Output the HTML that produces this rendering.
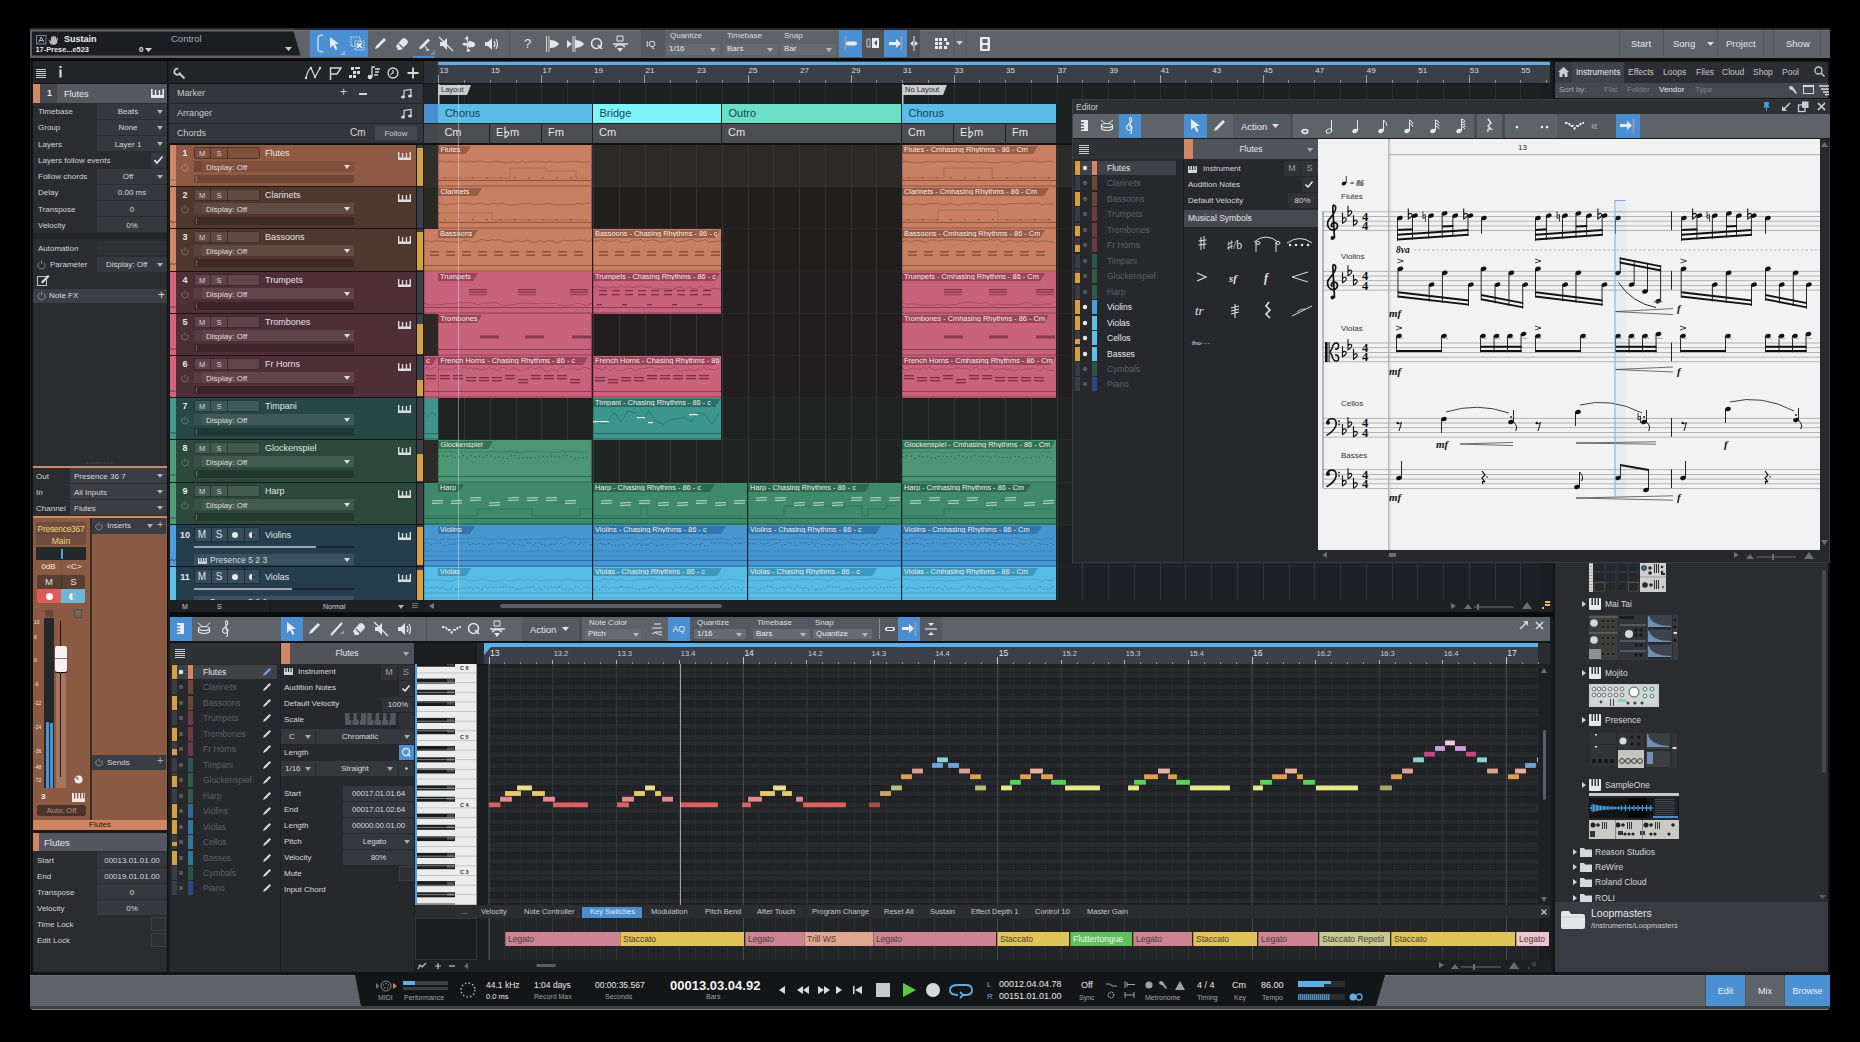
<!DOCTYPE html><html><head><meta charset="utf-8"><style>
*{margin:0;padding:0;box-sizing:border-box}
html,body{width:1860px;height:1042px;background:#000;overflow:hidden;font-family:"Liberation Sans",sans-serif}
.a{position:absolute}
.t{position:absolute;white-space:nowrap;line-height:1}
svg{position:absolute;overflow:visible}
</style></head><body><div class="a" style="left:30px;top:28px;width:1800px;height:982px;background:#1b1c1f;"></div>
<div class="a" style="left:30px;top:28px;width:1800px;height:1.5px;background:#26282b;"></div>
<div class="a" style="left:30px;top:29.5px;width:1800px;height:29px;background:#5e6269;"></div>
<div class="a" style="left:30px;top:29.5px;width:1800px;height:1px;background:#6c7077;"></div>
<svg style="left:0;top:0" width="1860" height="80"><polygon points="31,29.5 294,29.5 302,57.5 31,57.5" fill="#5e6269"/><polygon points="32,31.5 293.5,31.5 300.5,55.5 32,55.5" fill="#1c1d20"/></svg>
<svg style="left:36px;top:35px" width="11" height="10"><rect x="0.5" y="0.5" width="9.5" height="8.5" fill="none" stroke="#7d8086" stroke-width="1"/><path d="M2.5 7.5 L5.25 2 L8 7.5 M3.6 5.5 L6.9 5.5" stroke="#b5b8bd" stroke-width="1" fill="none"/></svg>
<svg style="left:48px;top:35px" width="11" height="10"><path d="M3 9.5 Q1 7 0.8 5.5 Q1.5 4.8 3 6.5 L3 2 Q3.8 1.2 4.5 2 L4.6 5 L4.8 1 Q5.6 0.3 6.3 1 L6.3 5 L6.8 1.5 Q7.6 0.8 8.2 1.6 L8 5.5 L8.8 3 Q9.6 2.6 10 3.3 L9.2 7.5 Q8.5 9.5 7 9.8 Z" fill="#b8bbc0"/></svg>
<div class="t" style="left:64px;top:34.5px;font-size:9px;color:#eceef0;font-weight:bold">Sustain</div>
<div class="t" style="left:35.5px;top:45.5px;font-size:7.4px;color:#e6e7ea;font-weight:bold">17-Prese...e523</div>
<div class="t" style="left:139px;top:46px;font-size:8px;color:#e6e7ea;font-weight:bold">0</div>
<svg style="left:145px;top:48px" width="8" height="5"><polygon points="0,0 7,0 3.5,4" fill="#d0d2d6"/></svg>
<div class="t" style="left:171px;top:34px;font-size:9.5px;color:#a9acb2;">Control</div>
<svg style="left:285px;top:47px" width="8" height="5"><polygon points="0,0 7,0 3.5,4" fill="#c8cace"/></svg>
<div class="a" style="left:310px;top:30px;width:58px;height:27px;background:#4a8fd1;"></div>
<svg style="left:314px;top:34px" width="12" height="20"><path d="M9 1 Q4 1 4 4 L4 15 Q4 18 9 18" stroke="#c8d4e4" stroke-width="1.5" fill="none"/></svg>
<svg style="left:329px;top:36px" width="18" height="20"><path d="M1 1 L1 12 L4 9 L6.5 14 L8.5 13 L6 8 L10 8 Z" fill="#e9ebee"/><polygon points="16,14 16,19 11,19" fill="#8fb0d8"/></svg>
<svg style="left:350px;top:36px" width="16" height="16"><rect x="1" y="1" width="9" height="9" fill="none" stroke="#dfe3e8" stroke-dasharray="1.5 1"/><rect x="5" y="5" width="9" height="9" fill="none" stroke="#dfe3e8" stroke-dasharray="1.5 1"/><path d="M7 7 L12 12 M12 7 L7 12" stroke="#fff" stroke-width="1.3"/></svg>
<svg style="left:373px;top:37px" width="14" height="14"><path d="M2 12 L3 9 L11 1 L13 3 L5 11 Z" fill="#e2e4e7"/></svg>
<svg style="left:395px;top:37px" width="14" height="14"><path d="M1 9 L7 2 Q9 0 11 2 L12 3 Q14 5 12 7 L6 13 L3 13 Z" fill="#e2e4e7"/><path d="M4 7 L8 11" stroke="#5e6269" stroke-width="1.2"/></svg>
<svg style="left:418px;top:37px" width="18" height="18"><path d="M1 12 L2 9.5 L10 1.5 L12 3.5 L4 11.5 Z" fill="#e2e4e7"/><path d="M7 9 L10 13.5 M8.5 13.8 L11.5 12.5" stroke="#e2e4e7" stroke-width="1.2"/><polygon points="17,13 17,18 12,18" fill="#8a8d92"/></svg>
<div class="a" style="left:413px;top:56px;width:22px;height:2px;background:#4a8fd1;"></div>
<svg style="left:438px;top:36px" width="16" height="16"><path d="M2 6 L5 6 L9 2 L9 14 L5 10 L2 10 Z" fill="#e2e4e7"/><path d="M1 1 L15 15" stroke="#e2e4e7" stroke-width="1.3"/></svg>
<svg style="left:461px;top:35px" width="18" height="18"><path d="M6.5 1 L6.5 17" stroke="#d0d3d7" stroke-width="1.3"/><polygon points="6,1.5 6,5 3.5,3.2" fill="#e2e4e7"/><path d="M1 9 Q3 7 6 8.5 L7 8 Q9 4 11 7 Q13 6 14 9 Q15 10 13.5 11 Q12 13 10 12 Q8 14 7 11 L6 10.5 Q3 11.5 1 9 Z" fill="#e2e4e7"/><polygon points="7,14 7,17 10,15.5" fill="#e2e4e7"/></svg>
<svg style="left:484px;top:37px" width="16" height="14"><path d="M1 5 L4 5 L8 1 L8 13 L4 9 L1 9 Z" fill="#e2e4e7"/><path d="M10 4 Q12 7 10 10 M12 2 Q15 7 12 12" stroke="#e2e4e7" stroke-width="1.2" fill="none"/></svg>
<div class="a" style="left:509px;top:30px;width:1px;height:27px;background:#505359;"></div>
<div class="t" style="left:524px;top:37px;font-size:13px;color:#e2e4e7;">?</div>
<svg style="left:544px;top:35px" width="18" height="18"><path d="M2.5 1 L2.5 17 M5 1 L5 17" stroke="#e2e4e7" stroke-width="0.9"/><path d="M6 5 Q12 5 15 9 Q12 13 6 13 Z" fill="#e2e4e7"/></svg>
<svg style="left:566px;top:35px" width="20" height="18"><path d="M1 5 L6 9 L1 13 Z M9 5 Q15 5 18 9 Q15 13 9 13 Z" fill="#e2e4e7"/><path d="M7 1 L7 17 M9 1 L9 17" stroke="#e2e4e7" stroke-width="0.9"/></svg>
<svg style="left:590px;top:37px" width="14" height="14"><circle cx="6.5" cy="6.5" r="5" stroke="#e2e4e7" stroke-width="1.6" fill="none"/><path d="M8 8 L12 12" stroke="#e2e4e7" stroke-width="1.6"/></svg>
<svg style="left:612px;top:35px" width="17" height="19"><path d="M5 1 L11 1 L11 6 L5 6 Z" stroke="#e2e4e7" fill="none"/><path d="M1 9 L16 9" stroke="#e2e4e7" stroke-width="1.5"/><path d="M3 12 Q8 7 13 12" stroke="#e2e4e7" stroke-width="1.5" fill="none"/><path d="M5 13 L11 13 L8 17 Z" fill="#e2e4e7"/></svg>
<div class="a" style="left:641px;top:30px;width:24px;height:27px;background:#54585f;"></div>
<div class="t" style="left:646px;top:40px;font-size:9px;color:#e2e4e7;">IQ</div>
<div class="t" style="left:670px;top:32px;font-size:8px;color:#dcdee2;">Quantize</div>
<div class="t" style="left:727px;top:32px;font-size:8px;color:#dcdee2;">Timebase</div>
<div class="t" style="left:784px;top:32px;font-size:8px;color:#dcdee2;">Snap</div>
<div class="a" style="left:666px;top:44px;width:54px;height:11px;background:#666a71;"></div>
<div class="t" style="left:669px;top:45px;font-size:8px;color:#e8e9ec;">1/16</div>
<svg style="left:710px;top:48px" width="7" height="5"><polygon points="0,0 6,0 3,4" fill="#b5b8bd"/></svg>
<div class="a" style="left:724px;top:44px;width:53px;height:11px;background:#666a71;"></div>
<div class="t" style="left:727px;top:45px;font-size:8px;color:#e8e9ec;">Bars</div>
<svg style="left:767px;top:48px" width="7" height="5"><polygon points="0,0 6,0 3,4" fill="#b5b8bd"/></svg>
<div class="a" style="left:781px;top:44px;width:55px;height:11px;background:#666a71;"></div>
<div class="t" style="left:784px;top:45px;font-size:8px;color:#e8e9ec;">Bar</div>
<svg style="left:826px;top:48px" width="7" height="5"><polygon points="0,0 6,0 3,4" fill="#b5b8bd"/></svg>
<div class="a" style="left:839px;top:30px;width:23px;height:27px;background:#4a8fd1;"></div>
<div class="a" style="left:862px;top:30px;width:22px;height:27px;background:#4f5258;"></div>
<div class="a" style="left:884px;top:30px;width:23px;height:27px;background:#4a8fd1;"></div>
<div class="a" style="left:907px;top:30px;width:13px;height:27px;background:#4f5258;"></div>
<svg style="left:843px;top:35px" width="16" height="17"><path d="M2.5 1 L2.5 16" stroke="#9aa3ad" stroke-width="1.5"/><rect x="3" y="6.5" width="11" height="4" rx="2" fill="#e9ebee"/></svg>
<svg style="left:866px;top:38px" width="14" height="11"><rect x="1" y="1" width="3" height="8" fill="none" stroke="#e2e4e7" stroke-width="0.8"/><rect x="6" y="0" width="7" height="10" fill="#e9ebee"/><polygon points="11,2 8,5 11,8" fill="#4f5258"/></svg>
<svg style="left:888px;top:35px" width="16" height="17"><path d="M1 7 L8 7 L8 4 L13 8.5 L8 13 L8 10 L1 10 Z" fill="#e9ebee"/><path d="M13.5 1 L13.5 16" stroke="#9aa3ad" stroke-width="1.5"/></svg>
<svg style="left:909px;top:35px" width="10" height="17"><path d="M5 1 L5 16" stroke="#e2e4e7" stroke-width="1"/><path d="M1 8.5 L4 6 L4 11 Z M9 8.5 L6 6 L6 11 Z" fill="#e2e4e7"/></svg>
<svg style="left:934px;top:37px" width="16" height="14"><g fill="#e9ebee"><rect x="1" y="1" width="3" height="3"/><rect x="5" y="1" width="3" height="3"/><rect x="1" y="5" width="3" height="3"/><rect x="5" y="5" width="3" height="3"/><rect x="1" y="9" width="3" height="3"/><rect x="5" y="9" width="3" height="3"/><rect x="10" y="1" width="3" height="3"/><rect x="12" y="5" width="3" height="3"/><rect x="10" y="9" width="3" height="3"/></g></svg>
<svg style="left:956px;top:41px" width="8" height="6"><polygon points="0,0 7,0 3.5,4" fill="#d0d2d6"/></svg>
<div class="a" style="left:954px;top:30px;width:1px;height:27px;background:#55595f;"></div>
<div class="a" style="left:966px;top:30px;width:1px;height:27px;background:#55595f;"></div>
<svg style="left:979px;top:36px" width="12" height="16"><rect x="1" y="1" width="10" height="14" rx="1" fill="#e9ebee"/><rect x="3.5" y="3" width="5" height="4" fill="#5e6269"/><rect x="3.5" y="9" width="5" height="4" fill="#5e6269"/></svg>
<div class="a" style="left:1619px;top:30px;width:1px;height:27px;background:#54585e;"></div>
<div class="a" style="left:1663px;top:30px;width:1px;height:27px;background:#54585e;"></div>
<div class="a" style="left:1717px;top:30px;width:1px;height:27px;background:#54585e;"></div>
<div class="a" style="left:1763px;top:30px;width:1px;height:27px;background:#54585e;"></div>
<div class="a" style="left:1773px;top:30px;width:1px;height:27px;background:#54585e;"></div>
<div class="a" style="left:1820px;top:30px;width:1px;height:27px;background:#54585e;"></div>
<div class="t" style="left:1631px;top:39px;font-size:9.5px;color:#e6e7ea;">Start</div>
<div class="t" style="left:1673px;top:39px;font-size:9.5px;color:#e6e7ea;">Song</div>
<svg style="left:1707px;top:42px" width="8" height="5"><polygon points="0,0 7,0 3.5,4" fill="#d9dbde"/></svg>
<div class="t" style="left:1726px;top:39px;font-size:9.5px;color:#e6e7ea;">Project</div>
<div class="t" style="left:1786px;top:39px;font-size:9.5px;color:#e6e7ea;">Show</div>
<div class="a" style="left:30px;top:58px;width:1800px;height:3px;background:#0a0a0b;"></div>
<div class="a" style="left:31px;top:61px;width:137px;height:911px;background:#101113;"></div>
<div class="a" style="left:33px;top:61px;width:134px;height:911px;background:#2a2c30;"></div>
<div class="a" style="left:33px;top:61px;width:134px;height:22px;background:#242528;"></div>
<svg style="left:36px;top:69px" width="11" height="9"><g stroke="#c9ccd0" stroke-width="1"><path d="M0 0.5H10M0 2.5H10M0 4.5H10M0 6.5H10M0 8.5H10"/></g></svg>
<svg style="left:59px;top:66px" width="4" height="12"><rect x="0.5" y="0" width="2" height="2" fill="#e6e7ea"/><rect x="0.5" y="3.5" width="2" height="8" fill="#e6e7ea"/></svg>
<div class="a" style="left:33px;top:83px;width:134px;height:1px;background:#141517;"></div>
<div class="a" style="left:33px;top:84px;width:7px;height:19px;background:#d08763;"></div>
<div class="a" style="left:40px;top:84px;width:17px;height:19px;background:#45484d;"></div>
<div class="a" style="left:57px;top:84px;width:110px;height:19px;background:#55585e;"></div>
<div class="t" style="left:47px;top:89px;font-size:9px;color:#e8e9ec;font-weight:bold">1</div>
<div class="t" style="left:64px;top:89.5px;font-size:9px;color:#e8e9ec;">Flutes</div>
<svg style="left:151px;top:89px" width="13" height="9"><g fill="#e6e7ea"><rect x="0" y="6" width="13" height="3"/><rect x="0" y="0" width="1.6" height="9"/><rect x="3.8" y="1" width="1.5" height="8"/><rect x="7.7" y="1" width="1.5" height="8"/><rect x="11.4" y="0" width="1.6" height="9"/></g></svg>
<div class="t" style="left:38px;top:108.0px;font-size:8px;color:#d2d4d8;">Timebase</div>
<div class="a" style="left:97px;top:103.5px;width:70px;height:15px;background:#35383d;"></div>
<div class="t" style="left:97px;top:108.0px;font-size:8px;color:#d6d8dc;width:62px;text-align:center;">Beats</div>
<svg style="left:157px;top:109.5px" width="7" height="5"><polygon points="0,0 6,0 3,4" fill="#aeb1b6"/></svg>
<div class="t" style="left:38px;top:124.3px;font-size:8px;color:#d2d4d8;">Group</div>
<div class="a" style="left:97px;top:119.8px;width:70px;height:15px;background:#35383d;"></div>
<div class="t" style="left:97px;top:124.3px;font-size:8px;color:#d6d8dc;width:62px;text-align:center;">None</div>
<svg style="left:157px;top:125.8px" width="7" height="5"><polygon points="0,0 6,0 3,4" fill="#aeb1b6"/></svg>
<div class="t" style="left:38px;top:140.5px;font-size:8px;color:#d2d4d8;">Layers</div>
<div class="a" style="left:97px;top:136.0px;width:70px;height:15px;background:#35383d;"></div>
<div class="t" style="left:97px;top:140.5px;font-size:8px;color:#d6d8dc;width:62px;text-align:center;">Layer 1</div>
<svg style="left:157px;top:142.0px" width="7" height="5"><polygon points="0,0 6,0 3,4" fill="#aeb1b6"/></svg>
<div class="t" style="left:38px;top:156.7px;font-size:8px;color:#d2d4d8;">Layers follow events</div>
<div class="t" style="left:38px;top:173.0px;font-size:8px;color:#d2d4d8;">Follow chords</div>
<div class="a" style="left:97px;top:168.5px;width:70px;height:15px;background:#35383d;"></div>
<div class="t" style="left:97px;top:173.0px;font-size:8px;color:#d6d8dc;width:62px;text-align:center;">Off</div>
<svg style="left:157px;top:174.5px" width="7" height="5"><polygon points="0,0 6,0 3,4" fill="#aeb1b6"/></svg>
<div class="t" style="left:38px;top:189.3px;font-size:8px;color:#d2d4d8;">Delay</div>
<div class="a" style="left:97px;top:184.8px;width:70px;height:15px;background:#35383d;"></div>
<div class="t" style="left:97px;top:189.3px;font-size:8px;color:#d6d8dc;width:70px;text-align:center;">0.00 ms</div>
<div class="t" style="left:38px;top:205.5px;font-size:8px;color:#d2d4d8;">Transpose</div>
<div class="a" style="left:97px;top:201.0px;width:70px;height:15px;background:#35383d;"></div>
<div class="t" style="left:97px;top:205.5px;font-size:8px;color:#d6d8dc;width:70px;text-align:center;">0</div>
<div class="t" style="left:38px;top:221.7px;font-size:8px;color:#d2d4d8;">Velocity</div>
<div class="a" style="left:97px;top:217.2px;width:70px;height:15px;background:#35383d;"></div>
<div class="t" style="left:97px;top:221.7px;font-size:8px;color:#d6d8dc;width:70px;text-align:center;">0%</div>
<div class="a" style="left:151px;top:152.5px;width:15px;height:15px;background:#35383d;"></div>
<svg style="left:153px;top:155px" width="11" height="10"><path d="M1.5 5 L4 8 L9.5 1.5" stroke="#eceef0" stroke-width="1.6" fill="none"/></svg>
<div class="a" style="left:33px;top:232.5px;width:134px;height:8px;background:#242528;"></div>
<div class="a" style="left:33px;top:239px;width:134px;height:16px;background:#2a2c30;"></div>
<div class="t" style="left:38px;top:245px;font-size:8px;color:#d2d4d8;">Automation</div>
<div class="a" style="left:97px;top:241px;width:70px;height:14px;background:#2e3034;"></div>
<svg style="left:37px;top:260px" width="9" height="9"><path d="M2.5200000000000005 2.25 A3.6 3.6 0 1 0 6.4799999999999995 2.25" stroke="#7f8288" stroke-width="1" fill="none"/><path d="M4.5 0.5 L4.5 4.05" stroke="#7f8288" stroke-width="1"/></svg>
<div class="t" style="left:50px;top:261px;font-size:8px;color:#d2d4d8;">Parameter</div>
<div class="a" style="left:97px;top:257px;width:70px;height:15px;background:#35383d;"></div>
<div class="t" style="left:106px;top:261px;font-size:8px;color:#d6d8dc;">Display: Off</div>
<svg style="left:157px;top:263px" width="7" height="5"><polygon points="0,0 6,0 3,4" fill="#aeb1b6"/></svg>
<svg style="left:37px;top:274px" width="13" height="12"><rect x="0.5" y="2.5" width="9" height="9" fill="none" stroke="#c0c3c8"/><path d="M4 8 L11 1 L12.5 2.5 L5.5 9.5 Z" fill="#e0e2e5"/></svg>
<div class="a" style="left:33px;top:288.5px;width:134px;height:14px;background:#3b3e43;"></div>
<svg style="left:37px;top:291px" width="9" height="9"><path d="M2.5200000000000005 2.25 A3.6 3.6 0 1 0 6.4799999999999995 2.25" stroke="#8a8d92" stroke-width="1" fill="none"/><path d="M4.5 0.5 L4.5 4.05" stroke="#8a8d92" stroke-width="1"/></svg>
<div class="t" style="left:49px;top:292px;font-size:8px;color:#dcdee2;">Note FX</div>
<div class="t" style="left:158px;top:289px;font-size:12px;color:#d8dade;">+</div>
<div class="a" style="left:33px;top:304px;width:134px;height:160px;background:#2a2c30;"></div>
<svg style="left:86px;top:462px" width="28" height="3"><path d="M0 1H28" stroke="#4a4d52" stroke-dasharray="2 1"/></svg>
<div class="a" style="left:33px;top:466px;width:134px;height:2px;background:#d08763;"></div>
<div class="a" style="left:33px;top:468px;width:134px;height:16px;background:#2a2c30;"></div>
<div class="a" style="left:70px;top:468px;width:97px;height:15px;background:#3a3d42;"></div>
<div class="t" style="left:36px;top:472.5px;font-size:8px;color:#d2d4d8;">Out</div>
<div class="t" style="left:74px;top:472.5px;font-size:8px;color:#d6d8dc;">Presence 36 7</div>
<svg style="left:157px;top:474px" width="7" height="5"><polygon points="0,0 6,0 3,4" fill="#aeb1b6"/></svg>
<div class="a" style="left:33px;top:484px;width:134px;height:16px;background:#2a2c30;"></div>
<div class="a" style="left:70px;top:484px;width:97px;height:15px;background:#3a3d42;"></div>
<div class="t" style="left:36px;top:488.5px;font-size:8px;color:#d2d4d8;">In</div>
<div class="t" style="left:74px;top:488.5px;font-size:8px;color:#d6d8dc;">All Inputs</div>
<svg style="left:157px;top:490px" width="7" height="5"><polygon points="0,0 6,0 3,4" fill="#aeb1b6"/></svg>
<div class="a" style="left:33px;top:500px;width:134px;height:16px;background:#2a2c30;"></div>
<div class="a" style="left:70px;top:500px;width:97px;height:15px;background:#3a3d42;"></div>
<div class="t" style="left:36px;top:504.5px;font-size:8px;color:#d2d4d8;">Channel</div>
<div class="t" style="left:74px;top:504.5px;font-size:8px;color:#d6d8dc;">Flutes</div>
<svg style="left:157px;top:506px" width="7" height="5"><polygon points="0,0 6,0 3,4" fill="#aeb1b6"/></svg>
<div class="a" style="left:33px;top:516px;width:134px;height:2px;background:#d08763;"></div>
<div class="a" style="left:33px;top:518px;width:134px;height:302px;background:#8a5a43;"></div>
<div class="a" style="left:90px;top:518px;width:1.5px;height:302px;background:#3a2a22;"></div>
<div class="a" style="left:36px;top:522px;width:50px;height:23px;background:#6e4d3e;border-radius:2px"></div>
<div class="a" style="left:36px;top:533px;width:50px;height:1px;background:#5e4034;"></div>
<div class="t" style="left:36px;top:525px;font-size:8.5px;color:#f0d27a;width:50px;text-align:center;letter-spacing:-0.3px">Presence367</div>
<div class="t" style="left:36px;top:537px;font-size:8.5px;color:#f0d27a;width:50px;text-align:center;">Main</div>
<div class="a" style="left:36px;top:547px;width:50px;height:13px;background:#25282b;"></div>
<div class="a" style="left:61px;top:549px;width:2px;height:10px;background:#4aa3e6;"></div>
<div class="t" style="left:36px;top:563px;font-size:8px;color:#f0e8e2;width:25px;text-align:center;">0dB</div>
<div class="a" style="left:61px;top:561px;width:1px;height:12px;background:#7a5040;"></div>
<div class="t" style="left:62px;top:563px;font-size:8px;color:#f0e8e2;width:24px;text-align:center;">&lt;C&gt;</div>
<div class="a" style="left:37px;top:575px;width:48px;height:14px;background:#5b3e32;border-radius:2px 2px 0 0"></div>
<div class="a" style="left:61px;top:575px;width:1px;height:14px;background:#3e2a22;"></div>
<div class="t" style="left:37px;top:577px;font-size:9.5px;color:#e6e1dd;width:24px;text-align:center;">M</div>
<div class="t" style="left:62px;top:577px;font-size:9.5px;color:#e6e1dd;width:23px;text-align:center;">S</div>
<div class="a" style="left:37px;top:589px;width:24px;height:14px;background:#e05a5a;border-radius:0 0 0 2px"></div>
<div class="a" style="left:61px;top:589px;width:24px;height:14px;background:#6cb6d6;border-radius:0 0 2px 0"></div>
<svg style="left:45px;top:592px" width="9" height="9"><circle cx="4.5" cy="4.5" r="3.5" fill="#fff"/></svg>
<svg style="left:68px;top:592px" width="9" height="9"><circle cx="4.5" cy="4.5" r="3.5" fill="#e8f4f8"/><path d="M4.5 1 A3.5 3.5 0 0 1 4.5 8 Z" fill="#6cb6d6"/></svg>
<div class="a" style="left:45px;top:610px;width:8px;height:7px;background:#6a4636;"></div>
<div class="a" style="left:74px;top:609px;width:8px;height:9px;background:#75685f;border:1px solid #5a4a40"></div>
<div class="a" style="left:44px;top:618px;width:10px;height:170px;background:#25282b;"></div>
<div class="a" style="left:45.5px;top:722px;width:3.5px;height:66px;background:#4a95d6;"></div>
<div class="a" style="left:49.5px;top:723px;width:3.5px;height:65px;background:#4a95d6;"></div>
<div class="t" style="left:34px;top:620px;font-size:5px;color:#f0e6e0;">10</div>
<div class="t" style="left:34px;top:635px;font-size:5px;color:#f0e6e0;">6</div>
<div class="t" style="left:34px;top:658px;font-size:5px;color:#f0e6e0;">0</div>
<div class="t" style="left:34px;top:682px;font-size:5px;color:#f0e6e0;">-6</div>
<div class="t" style="left:34px;top:701px;font-size:5px;color:#f0e6e0;">-12</div>
<div class="t" style="left:34px;top:725px;font-size:5px;color:#f0e6e0;">-24</div>
<div class="t" style="left:34px;top:749px;font-size:5px;color:#f0e6e0;">-36</div>
<div class="t" style="left:34px;top:765px;font-size:5px;color:#f0e6e0;">-48</div>
<div class="t" style="left:34px;top:778px;font-size:5px;color:#f0e6e0;">-72</div>
<div class="a" style="left:56px;top:668px;width:10px;height:120px;background:#a57560;"></div>
<div class="a" style="left:60px;top:621px;width:1px;height:156px;background:#241a15;"></div>
<div class="a" style="left:55px;top:646px;width:12px;height:26px;background:#f2f2f2;border-radius:2px;box-shadow:0 1px 1px #000"></div>
<div class="a" style="left:55px;top:658px;width:12px;height:1px;background:#777;"></div>
<svg style="left:74px;top:775px" width="9" height="9"><circle cx="4.5" cy="4.5" r="4" fill="#ecebea"/><path d="M4.5 4.5 L1.5 1.5" stroke="#8a5a43" stroke-width="1.2"/></svg>
<div class="t" style="left:41px;top:793px;font-size:8px;color:#f4efeb;font-weight:bold">3</div>
<svg style="left:72px;top:793px" width="13" height="9"><rect x="0" y="0" width="13" height="9" fill="#ece6e2"/><g fill="#8a5a43"><rect x="2" y="0" width="1.3" height="5.5"/><rect x="5" y="0" width="1.3" height="5.5"/><rect x="8" y="0" width="1.3" height="5.5"/><rect x="11" y="0" width="1.3" height="5.5"/></g><rect x="0" y="7" width="13" height="2" fill="#ece6e2"/></svg>
<div class="a" style="left:37px;top:805px;width:49px;height:11px;background:#4e3428;border-radius:2px"></div>
<div class="t" style="left:37px;top:807px;font-size:7.5px;color:#a8948a;width:49px;text-align:center;">Auto: Off</div>
<div class="a" style="left:92px;top:518px;width:74px;height:16px;background:#3a3d42;"></div>
<svg style="left:95px;top:522px" width="8" height="8"><path d="M2.24 2.0 A3.2 3.2 0 1 0 5.76 2.0" stroke="#8a8d92" stroke-width="1" fill="none"/><path d="M4.0 0.5 L4.0 3.6" stroke="#8a8d92" stroke-width="1"/></svg>
<div class="t" style="left:107px;top:522px;font-size:8px;color:#d6d8dc;">Inserts</div>
<svg style="left:147px;top:524px" width="6" height="5"><polygon points="0,0 6,0 3,4" fill="#aeb1b6"/></svg>
<div class="t" style="left:157px;top:519px;font-size:11px;color:#aeb1b6;">+</div>
<div class="a" style="left:92px;top:755px;width:74px;height:15px;background:#3a3d42;"></div>
<svg style="left:95px;top:758px" width="8" height="8"><path d="M2.24 2.0 A3.2 3.2 0 1 0 5.76 2.0" stroke="#8a8d92" stroke-width="1" fill="none"/><path d="M4.0 0.5 L4.0 3.6" stroke="#8a8d92" stroke-width="1"/></svg>
<div class="t" style="left:107px;top:759px;font-size:8px;color:#d6d8dc;">Sends</div>
<div class="t" style="left:157px;top:755px;font-size:11px;color:#aeb1b6;">+</div>
<div class="a" style="left:33px;top:820px;width:134px;height:10px;background:#cf8563;"></div>
<div class="t" style="left:33px;top:821px;font-size:8px;color:#2a1a12;width:134px;text-align:center;">Flutes</div>
<div class="a" style="left:33px;top:830px;width:134px;height:3px;background:#1c1d20;"></div>
<div class="a" style="left:33px;top:833px;width:134px;height:18px;background:#53565c;"></div>
<div class="a" style="left:33px;top:833px;width:6px;height:18px;background:#d08763;"></div>
<div class="t" style="left:44px;top:838px;font-size:9.5px;color:#e6e7ea;">Flutes</div>
<div class="a" style="left:97px;top:852px;width:70px;height:15px;background:#35383d;"></div>
<div class="t" style="left:37px;top:856.5px;font-size:8px;color:#d2d4d8;">Start</div>
<div class="t" style="left:97px;top:856.5px;font-size:8px;color:#d6d8dc;width:70px;text-align:center;">00013.01.01.00</div>
<div class="a" style="left:97px;top:868px;width:70px;height:15px;background:#35383d;"></div>
<div class="t" style="left:37px;top:872.5px;font-size:8px;color:#d2d4d8;">End</div>
<div class="t" style="left:97px;top:872.5px;font-size:8px;color:#d6d8dc;width:70px;text-align:center;">00019.01.01.00</div>
<div class="a" style="left:97px;top:884px;width:70px;height:15px;background:#35383d;"></div>
<div class="t" style="left:37px;top:888.5px;font-size:8px;color:#d2d4d8;">Transpose</div>
<div class="t" style="left:97px;top:888.5px;font-size:8px;color:#d6d8dc;width:70px;text-align:center;">0</div>
<div class="a" style="left:97px;top:900px;width:70px;height:15px;background:#35383d;"></div>
<div class="t" style="left:37px;top:904.5px;font-size:8px;color:#d2d4d8;">Velocity</div>
<div class="t" style="left:97px;top:904.5px;font-size:8px;color:#d6d8dc;width:70px;text-align:center;">0%</div>
<div class="t" style="left:37px;top:921px;font-size:8px;color:#d2d4d8;">Time Lock</div>
<div class="t" style="left:37px;top:937px;font-size:8px;color:#d2d4d8;">Edit Lock</div>
<div class="a" style="left:151px;top:917px;width:15px;height:14px;background:#2e3034;border:1px solid #3c3f44"></div>
<div class="a" style="left:151px;top:933px;width:15px;height:14px;background:#2e3034;border:1px solid #3c3f44"></div>
<div class="a" style="left:169px;top:61px;width:254px;height:539px;background:#1c1d20;"></div>
<div class="a" style="left:169px;top:61px;width:254px;height:22px;background:#232427;"></div>
<svg style="left:174px;top:68px" width="12" height="12"><path d="M4.2 0.8 A3 3 0 1 0 6.2 4.6" stroke="#c9ccd0" stroke-width="1.8" fill="none"/><path d="M5 5 L10.5 10.5" stroke="#c9ccd0" stroke-width="2"/></svg>
<svg style="left:305px;top:66px" width="18" height="14"><path d="M1 12 Q3 3 6 2 L10 11 L15 2" stroke="#d6d8dc" stroke-width="1.2" fill="none"/><circle cx="1" cy="12" r="1.2" fill="#d6d8dc"/><circle cx="6" cy="2" r="1.2" fill="#d6d8dc"/><circle cx="10" cy="11" r="1.2" fill="#d6d8dc"/><circle cx="15" cy="2" r="1.2" fill="#d6d8dc"/></svg>
<svg style="left:329px;top:67px" width="13" height="13"><path d="M1.5 13 L1.5 1 L12 1 L8 7 L1.5 7" stroke="#d6d8dc" stroke-width="1.4" fill="none"/></svg>
<svg style="left:349px;top:67px" width="11" height="12"><g fill="#d6d8dc"><rect x="0" y="8" width="3" height="3"/><rect x="4" y="8" width="3" height="3"/><rect x="4" y="4" width="3" height="3"/><rect x="8" y="4" width="3" height="3"/><rect x="2" y="0" width="3" height="3"/><rect x="6" y="0" width="5" height="2"/></g></svg>
<svg style="left:367px;top:66px" width="14" height="14"><circle cx="3" cy="11" r="2.3" fill="#d6d8dc"/><path d="M5 11 L5 1 L8 1" stroke="#d6d8dc" stroke-width="1.3" fill="none"/><path d="M8 3 L13 3 M8 6 L12 6 M7 9 L11 9" stroke="#d6d8dc" stroke-width="1.3"/></svg>
<svg style="left:387px;top:67px" width="12" height="12"><circle cx="6" cy="6" r="5" stroke="#d6d8dc" stroke-width="1.3" fill="none"/><path d="M6 3 L6 6 L3.5 7.5" stroke="#d6d8dc" stroke-width="1.2" fill="none"/></svg>
<svg style="left:407px;top:67px" width="12" height="12"><path d="M6 0.5 L6 11.5 M0.5 6 L11.5 6" stroke="#d6d8dc" stroke-width="1.8"/></svg>
<div class="a" style="left:169px;top:83px;width:254px;height:1px;background:#111214;"></div>
<div class="a" style="left:169px;top:84px;width:254px;height:19px;background:#33363b;"></div>
<div class="a" style="left:169px;top:103px;width:254px;height:1px;background:#232528;"></div>
<div class="t" style="left:177px;top:89px;font-size:9px;color:#c9ccd0;">Marker</div>
<div class="a" style="left:169px;top:104px;width:254px;height:19px;background:#33363b;"></div>
<div class="a" style="left:169px;top:123px;width:254px;height:1px;background:#232528;"></div>
<div class="t" style="left:177px;top:109px;font-size:9px;color:#c9ccd0;">Arranger</div>
<div class="a" style="left:169px;top:124px;width:254px;height:19px;background:#33363b;"></div>
<div class="a" style="left:169px;top:143px;width:254px;height:1px;background:#232528;"></div>
<div class="t" style="left:177px;top:129px;font-size:9px;color:#c9ccd0;">Chords</div>
<svg style="left:401px;top:89px" width="11" height="10"><path d="M3 8 L3 1.5 L10 0.5 L10 7" stroke="#d6d8dc" stroke-width="1.2" fill="none"/><ellipse cx="2" cy="8" rx="2" ry="1.6" fill="#d6d8dc"/><ellipse cx="9" cy="7" rx="2" ry="1.6" fill="#d6d8dc"/></svg>
<svg style="left:401px;top:109px" width="11" height="10"><path d="M3 8 L3 1.5 L10 0.5 L10 7" stroke="#d6d8dc" stroke-width="1.2" fill="none"/><ellipse cx="2" cy="8" rx="2" ry="1.6" fill="#d6d8dc"/><ellipse cx="9" cy="7" rx="2" ry="1.6" fill="#d6d8dc"/></svg>
<div class="t" style="left:340px;top:86px;font-size:12px;color:#d0d3d7;">+</div>
<div class="a" style="left:359px;top:93px;width:8px;height:1.5px;background:#d0d3d7;"></div>
<div class="t" style="left:350px;top:128px;font-size:10px;color:#d6d8dc;">Cm</div>
<div class="a" style="left:375px;top:126px;width:42px;height:14px;background:#44474c;border-radius:1px"></div>
<div class="t" style="left:375px;top:130px;font-size:8px;color:#c9ccd0;width:42px;text-align:center;">Follow</div>
<div class="a" style="left:169px;top:143px;width:254px;height:2px;background:#111214;"></div>
<div class="a" style="left:169px;top:145px;width:254px;height:42px;background:#151618;"></div>
<div class="a" style="left:170px;top:145px;width:6px;height:41px;background:#d08763;"></div>
<div class="a" style="left:176px;top:145px;width:240px;height:41px;background:#8e5a43;"></div>
<div class="a" style="left:416.5px;top:145px;width:6.5px;height:41px;background:#3a3f46;"></div>
<div class="a" style="left:416.5px;top:148px;width:6.5px;height:38px;background:#d4a040;"></div>
<svg style="left:170px;top:176px" width="6" height="8"><path d="M0.5 5 Q1.5 2 3 4 Q4.5 6 5.5 3" stroke="#8e5a43" stroke-width="0.8" fill="none"/></svg>
<div class="t" style="left:176px;top:149px;font-size:9px;color:#e6e7ea;width:18px;text-align:center;font-weight:bold">1</div>
<svg style="left:398px;top:152px" width="13" height="8"><g fill="#dcdee2"><rect x="0" y="5.5" width="13" height="2.5"/><rect x="0" y="0" width="1.4" height="8"/><rect x="3.9" y="1" width="1.3" height="7"/><rect x="7.8" y="1" width="1.3" height="7"/><rect x="11.6" y="0" width="1.4" height="8"/></g></svg>
<div class="a" style="left:194px;top:147px;width:66px;height:12px;background:rgba(0,0,0,0.10);border:1px solid rgba(0,0,0,0.35);border-radius:2px"></div>
<div class="a" style="left:210px;top:147px;width:1px;height:12px;background:rgba(0,0,0,0.35);"></div>
<div class="a" style="left:227px;top:147px;width:1px;height:12px;background:rgba(0,0,0,0.35);"></div>
<div class="t" style="left:194px;top:150px;font-size:7.5px;color:#d8d2ce;width:16px;text-align:center;">M</div>
<div class="t" style="left:211px;top:150px;font-size:7.5px;color:#d8d2ce;width:16px;text-align:center;">S</div>
<div class="t" style="left:265px;top:148.5px;font-size:9px;color:#e2e4e7;">Flutes</div>
<svg style="left:181px;top:163px" width="8" height="8"><path d="M2.24 2.0 A3.2 3.2 0 1 0 5.76 2.0" stroke="rgba(255,255,255,0.28)" stroke-width="1" fill="none"/><path d="M4.0 0.5 L4.0 3.6" stroke="rgba(255,255,255,0.28)" stroke-width="1"/></svg>
<div class="a" style="left:194px;top:161px;width:160px;height:11px;background:rgba(0,0,0,0.10);"></div>
<div class="a" style="left:194px;top:161px;width:8px;height:11px;background:rgba(0,0,0,0.10);"></div>
<div class="t" style="left:206px;top:163.5px;font-size:8px;color:#e0dcd9;">Display: Off</div>
<svg style="left:344px;top:165px" width="7" height="5"><polygon points="0,0 6,0 3,4" fill="#e0dcd9"/></svg>
<div class="a" style="left:194px;top:175px;width:160px;height:8px;background:rgba(0,0,0,0.22);"></div>
<div class="a" style="left:196px;top:176px;width:1px;height:6px;background:rgba(255,255,255,0.25);"></div>
<div class="a" style="left:169px;top:187px;width:254px;height:42px;background:#151618;"></div>
<div class="a" style="left:170px;top:187px;width:6px;height:41px;background:#d08763;"></div>
<div class="a" style="left:176px;top:187px;width:240px;height:41px;background:#4f372e;"></div>
<div class="a" style="left:416.5px;top:187px;width:6.5px;height:41px;background:#3a3f46;"></div>
<svg style="left:170px;top:218px" width="6" height="8"><path d="M0.5 5 Q1.5 2 3 4 Q4.5 6 5.5 3" stroke="#4f372e" stroke-width="0.8" fill="none"/></svg>
<div class="t" style="left:176px;top:191px;font-size:9px;color:#e6e7ea;width:18px;text-align:center;font-weight:bold">2</div>
<svg style="left:398px;top:194px" width="13" height="8"><g fill="#dcdee2"><rect x="0" y="5.5" width="13" height="2.5"/><rect x="0" y="0" width="1.4" height="8"/><rect x="3.9" y="1" width="1.3" height="7"/><rect x="7.8" y="1" width="1.3" height="7"/><rect x="11.6" y="0" width="1.4" height="8"/></g></svg>
<div class="a" style="left:194px;top:189px;width:66px;height:12px;background:rgba(255,255,255,0.10);border:1px solid rgba(0,0,0,0.35);border-radius:2px"></div>
<div class="a" style="left:210px;top:189px;width:1px;height:12px;background:rgba(0,0,0,0.35);"></div>
<div class="a" style="left:227px;top:189px;width:1px;height:12px;background:rgba(0,0,0,0.35);"></div>
<div class="t" style="left:194px;top:192px;font-size:7.5px;color:#d8d2ce;width:16px;text-align:center;">M</div>
<div class="t" style="left:211px;top:192px;font-size:7.5px;color:#d8d2ce;width:16px;text-align:center;">S</div>
<div class="t" style="left:265px;top:190.5px;font-size:9px;color:#e2e4e7;">Clarinets</div>
<svg style="left:181px;top:205px" width="8" height="8"><path d="M2.24 2.0 A3.2 3.2 0 1 0 5.76 2.0" stroke="rgba(255,255,255,0.28)" stroke-width="1" fill="none"/><path d="M4.0 0.5 L4.0 3.6" stroke="rgba(255,255,255,0.28)" stroke-width="1"/></svg>
<div class="a" style="left:194px;top:203px;width:160px;height:11px;background:rgba(255,255,255,0.10);"></div>
<div class="a" style="left:194px;top:203px;width:8px;height:11px;background:rgba(0,0,0,0.10);"></div>
<div class="t" style="left:206px;top:205.5px;font-size:8px;color:#e0dcd9;">Display: Off</div>
<svg style="left:344px;top:207px" width="7" height="5"><polygon points="0,0 6,0 3,4" fill="#e0dcd9"/></svg>
<div class="a" style="left:194px;top:217px;width:160px;height:8px;background:rgba(0,0,0,0.22);"></div>
<div class="a" style="left:196px;top:218px;width:1px;height:6px;background:rgba(255,255,255,0.25);"></div>
<div class="a" style="left:169px;top:229px;width:254px;height:43px;background:#151618;"></div>
<div class="a" style="left:170px;top:229px;width:6px;height:42px;background:#d08763;"></div>
<div class="a" style="left:176px;top:229px;width:240px;height:42px;background:#4f372e;"></div>
<div class="a" style="left:416.5px;top:229px;width:6.5px;height:42px;background:#3a3f46;"></div>
<div class="a" style="left:416.5px;top:232px;width:6.5px;height:38px;background:#d4a040;"></div>
<svg style="left:170px;top:260px" width="6" height="8"><path d="M0.5 5 Q1.5 2 3 4 Q4.5 6 5.5 3" stroke="#4f372e" stroke-width="0.8" fill="none"/></svg>
<div class="t" style="left:176px;top:233px;font-size:9px;color:#e6e7ea;width:18px;text-align:center;font-weight:bold">3</div>
<svg style="left:398px;top:236px" width="13" height="8"><g fill="#dcdee2"><rect x="0" y="5.5" width="13" height="2.5"/><rect x="0" y="0" width="1.4" height="8"/><rect x="3.9" y="1" width="1.3" height="7"/><rect x="7.8" y="1" width="1.3" height="7"/><rect x="11.6" y="0" width="1.4" height="8"/></g></svg>
<div class="a" style="left:194px;top:231px;width:66px;height:12px;background:rgba(255,255,255,0.10);border:1px solid rgba(0,0,0,0.35);border-radius:2px"></div>
<div class="a" style="left:210px;top:231px;width:1px;height:12px;background:rgba(0,0,0,0.35);"></div>
<div class="a" style="left:227px;top:231px;width:1px;height:12px;background:rgba(0,0,0,0.35);"></div>
<div class="t" style="left:194px;top:234px;font-size:7.5px;color:#d8d2ce;width:16px;text-align:center;">M</div>
<div class="t" style="left:211px;top:234px;font-size:7.5px;color:#d8d2ce;width:16px;text-align:center;">S</div>
<div class="t" style="left:265px;top:232.5px;font-size:9px;color:#e2e4e7;">Bassoons</div>
<svg style="left:181px;top:247px" width="8" height="8"><path d="M2.24 2.0 A3.2 3.2 0 1 0 5.76 2.0" stroke="rgba(255,255,255,0.28)" stroke-width="1" fill="none"/><path d="M4.0 0.5 L4.0 3.6" stroke="rgba(255,255,255,0.28)" stroke-width="1"/></svg>
<div class="a" style="left:194px;top:245px;width:160px;height:11px;background:rgba(255,255,255,0.10);"></div>
<div class="a" style="left:194px;top:245px;width:8px;height:11px;background:rgba(0,0,0,0.10);"></div>
<div class="t" style="left:206px;top:247.5px;font-size:8px;color:#e0dcd9;">Display: Off</div>
<svg style="left:344px;top:249px" width="7" height="5"><polygon points="0,0 6,0 3,4" fill="#e0dcd9"/></svg>
<div class="a" style="left:194px;top:259px;width:160px;height:8px;background:rgba(0,0,0,0.22);"></div>
<div class="a" style="left:196px;top:260px;width:1px;height:6px;background:rgba(255,255,255,0.25);"></div>
<div class="a" style="left:169px;top:272px;width:254px;height:42px;background:#151618;"></div>
<div class="a" style="left:170px;top:272px;width:6px;height:41px;background:#d8637a;"></div>
<div class="a" style="left:176px;top:272px;width:240px;height:41px;background:#4e2e37;"></div>
<div class="a" style="left:416.5px;top:272px;width:6.5px;height:41px;background:#3a3f46;"></div>
<svg style="left:170px;top:303px" width="6" height="8"><path d="M0.5 5 Q1.5 2 3 4 Q4.5 6 5.5 3" stroke="#4e2e37" stroke-width="0.8" fill="none"/></svg>
<div class="t" style="left:176px;top:276px;font-size:9px;color:#e6e7ea;width:18px;text-align:center;font-weight:bold">4</div>
<svg style="left:398px;top:279px" width="13" height="8"><g fill="#dcdee2"><rect x="0" y="5.5" width="13" height="2.5"/><rect x="0" y="0" width="1.4" height="8"/><rect x="3.9" y="1" width="1.3" height="7"/><rect x="7.8" y="1" width="1.3" height="7"/><rect x="11.6" y="0" width="1.4" height="8"/></g></svg>
<div class="a" style="left:194px;top:274px;width:66px;height:12px;background:rgba(255,255,255,0.10);border:1px solid rgba(0,0,0,0.35);border-radius:2px"></div>
<div class="a" style="left:210px;top:274px;width:1px;height:12px;background:rgba(0,0,0,0.35);"></div>
<div class="a" style="left:227px;top:274px;width:1px;height:12px;background:rgba(0,0,0,0.35);"></div>
<div class="t" style="left:194px;top:277px;font-size:7.5px;color:#d8d2ce;width:16px;text-align:center;">M</div>
<div class="t" style="left:211px;top:277px;font-size:7.5px;color:#d8d2ce;width:16px;text-align:center;">S</div>
<div class="t" style="left:265px;top:275.5px;font-size:9px;color:#e2e4e7;">Trumpets</div>
<svg style="left:181px;top:290px" width="8" height="8"><path d="M2.24 2.0 A3.2 3.2 0 1 0 5.76 2.0" stroke="rgba(255,255,255,0.28)" stroke-width="1" fill="none"/><path d="M4.0 0.5 L4.0 3.6" stroke="rgba(255,255,255,0.28)" stroke-width="1"/></svg>
<div class="a" style="left:194px;top:288px;width:160px;height:11px;background:rgba(255,255,255,0.10);"></div>
<div class="a" style="left:194px;top:288px;width:8px;height:11px;background:rgba(0,0,0,0.10);"></div>
<div class="t" style="left:206px;top:290.5px;font-size:8px;color:#e0dcd9;">Display: Off</div>
<svg style="left:344px;top:292px" width="7" height="5"><polygon points="0,0 6,0 3,4" fill="#e0dcd9"/></svg>
<div class="a" style="left:194px;top:302px;width:160px;height:8px;background:rgba(0,0,0,0.22);"></div>
<div class="a" style="left:196px;top:303px;width:1px;height:6px;background:rgba(255,255,255,0.25);"></div>
<div class="a" style="left:169px;top:314px;width:254px;height:42px;background:#151618;"></div>
<div class="a" style="left:170px;top:314px;width:6px;height:41px;background:#d8637a;"></div>
<div class="a" style="left:176px;top:314px;width:240px;height:41px;background:#4e2e37;"></div>
<div class="a" style="left:416.5px;top:314px;width:6.5px;height:41px;background:#3a3f46;"></div>
<div class="a" style="left:416.5px;top:324px;width:6.5px;height:30px;background:#d4a040;"></div>
<svg style="left:170px;top:345px" width="6" height="8"><path d="M0.5 5 Q1.5 2 3 4 Q4.5 6 5.5 3" stroke="#4e2e37" stroke-width="0.8" fill="none"/></svg>
<div class="t" style="left:176px;top:318px;font-size:9px;color:#e6e7ea;width:18px;text-align:center;font-weight:bold">5</div>
<svg style="left:398px;top:321px" width="13" height="8"><g fill="#dcdee2"><rect x="0" y="5.5" width="13" height="2.5"/><rect x="0" y="0" width="1.4" height="8"/><rect x="3.9" y="1" width="1.3" height="7"/><rect x="7.8" y="1" width="1.3" height="7"/><rect x="11.6" y="0" width="1.4" height="8"/></g></svg>
<div class="a" style="left:194px;top:316px;width:66px;height:12px;background:rgba(255,255,255,0.10);border:1px solid rgba(0,0,0,0.35);border-radius:2px"></div>
<div class="a" style="left:210px;top:316px;width:1px;height:12px;background:rgba(0,0,0,0.35);"></div>
<div class="a" style="left:227px;top:316px;width:1px;height:12px;background:rgba(0,0,0,0.35);"></div>
<div class="t" style="left:194px;top:319px;font-size:7.5px;color:#d8d2ce;width:16px;text-align:center;">M</div>
<div class="t" style="left:211px;top:319px;font-size:7.5px;color:#d8d2ce;width:16px;text-align:center;">S</div>
<div class="t" style="left:265px;top:317.5px;font-size:9px;color:#e2e4e7;">Trombones</div>
<svg style="left:181px;top:332px" width="8" height="8"><path d="M2.24 2.0 A3.2 3.2 0 1 0 5.76 2.0" stroke="rgba(255,255,255,0.28)" stroke-width="1" fill="none"/><path d="M4.0 0.5 L4.0 3.6" stroke="rgba(255,255,255,0.28)" stroke-width="1"/></svg>
<div class="a" style="left:194px;top:330px;width:160px;height:11px;background:rgba(255,255,255,0.10);"></div>
<div class="a" style="left:194px;top:330px;width:8px;height:11px;background:rgba(0,0,0,0.10);"></div>
<div class="t" style="left:206px;top:332.5px;font-size:8px;color:#e0dcd9;">Display: Off</div>
<svg style="left:344px;top:334px" width="7" height="5"><polygon points="0,0 6,0 3,4" fill="#e0dcd9"/></svg>
<div class="a" style="left:194px;top:344px;width:160px;height:8px;background:rgba(0,0,0,0.22);"></div>
<div class="a" style="left:196px;top:345px;width:1px;height:6px;background:rgba(255,255,255,0.25);"></div>
<div class="a" style="left:169px;top:356px;width:254px;height:42px;background:#151618;"></div>
<div class="a" style="left:170px;top:356px;width:6px;height:41px;background:#d8637a;"></div>
<div class="a" style="left:176px;top:356px;width:240px;height:41px;background:#4e2e37;"></div>
<div class="a" style="left:416.5px;top:356px;width:6.5px;height:41px;background:#3a3f46;"></div>
<div class="a" style="left:416.5px;top:380px;width:6.5px;height:16px;background:#d4a040;"></div>
<svg style="left:170px;top:387px" width="6" height="8"><path d="M0.5 5 Q1.5 2 3 4 Q4.5 6 5.5 3" stroke="#4e2e37" stroke-width="0.8" fill="none"/></svg>
<div class="t" style="left:176px;top:360px;font-size:9px;color:#e6e7ea;width:18px;text-align:center;font-weight:bold">6</div>
<svg style="left:398px;top:363px" width="13" height="8"><g fill="#dcdee2"><rect x="0" y="5.5" width="13" height="2.5"/><rect x="0" y="0" width="1.4" height="8"/><rect x="3.9" y="1" width="1.3" height="7"/><rect x="7.8" y="1" width="1.3" height="7"/><rect x="11.6" y="0" width="1.4" height="8"/></g></svg>
<div class="a" style="left:194px;top:358px;width:66px;height:12px;background:rgba(255,255,255,0.10);border:1px solid rgba(0,0,0,0.35);border-radius:2px"></div>
<div class="a" style="left:210px;top:358px;width:1px;height:12px;background:rgba(0,0,0,0.35);"></div>
<div class="a" style="left:227px;top:358px;width:1px;height:12px;background:rgba(0,0,0,0.35);"></div>
<div class="t" style="left:194px;top:361px;font-size:7.5px;color:#d8d2ce;width:16px;text-align:center;">M</div>
<div class="t" style="left:211px;top:361px;font-size:7.5px;color:#d8d2ce;width:16px;text-align:center;">S</div>
<div class="t" style="left:265px;top:359.5px;font-size:9px;color:#e2e4e7;">Fr Horns</div>
<svg style="left:181px;top:374px" width="8" height="8"><path d="M2.24 2.0 A3.2 3.2 0 1 0 5.76 2.0" stroke="rgba(255,255,255,0.28)" stroke-width="1" fill="none"/><path d="M4.0 0.5 L4.0 3.6" stroke="rgba(255,255,255,0.28)" stroke-width="1"/></svg>
<div class="a" style="left:194px;top:372px;width:160px;height:11px;background:rgba(255,255,255,0.10);"></div>
<div class="a" style="left:194px;top:372px;width:8px;height:11px;background:rgba(0,0,0,0.10);"></div>
<div class="t" style="left:206px;top:374.5px;font-size:8px;color:#e0dcd9;">Display: Off</div>
<svg style="left:344px;top:376px" width="7" height="5"><polygon points="0,0 6,0 3,4" fill="#e0dcd9"/></svg>
<div class="a" style="left:194px;top:386px;width:160px;height:8px;background:rgba(0,0,0,0.22);"></div>
<div class="a" style="left:196px;top:387px;width:1px;height:6px;background:rgba(255,255,255,0.25);"></div>
<div class="a" style="left:169px;top:398px;width:254px;height:42px;background:#151618;"></div>
<div class="a" style="left:170px;top:398px;width:6px;height:41px;background:#3f9a8f;"></div>
<div class="a" style="left:176px;top:398px;width:240px;height:41px;background:#284846;"></div>
<div class="a" style="left:416.5px;top:398px;width:6.5px;height:41px;background:#3a3f46;"></div>
<svg style="left:170px;top:429px" width="6" height="8"><path d="M0.5 5 Q1.5 2 3 4 Q4.5 6 5.5 3" stroke="#284846" stroke-width="0.8" fill="none"/></svg>
<div class="t" style="left:176px;top:402px;font-size:9px;color:#e6e7ea;width:18px;text-align:center;font-weight:bold">7</div>
<svg style="left:398px;top:405px" width="13" height="8"><g fill="#dcdee2"><rect x="0" y="5.5" width="13" height="2.5"/><rect x="0" y="0" width="1.4" height="8"/><rect x="3.9" y="1" width="1.3" height="7"/><rect x="7.8" y="1" width="1.3" height="7"/><rect x="11.6" y="0" width="1.4" height="8"/></g></svg>
<div class="a" style="left:194px;top:400px;width:66px;height:12px;background:rgba(255,255,255,0.10);border:1px solid rgba(0,0,0,0.35);border-radius:2px"></div>
<div class="a" style="left:210px;top:400px;width:1px;height:12px;background:rgba(0,0,0,0.35);"></div>
<div class="a" style="left:227px;top:400px;width:1px;height:12px;background:rgba(0,0,0,0.35);"></div>
<div class="t" style="left:194px;top:403px;font-size:7.5px;color:#d8d2ce;width:16px;text-align:center;">M</div>
<div class="t" style="left:211px;top:403px;font-size:7.5px;color:#d8d2ce;width:16px;text-align:center;">S</div>
<div class="t" style="left:265px;top:401.5px;font-size:9px;color:#e2e4e7;">Timpani</div>
<svg style="left:181px;top:416px" width="8" height="8"><path d="M2.24 2.0 A3.2 3.2 0 1 0 5.76 2.0" stroke="rgba(255,255,255,0.28)" stroke-width="1" fill="none"/><path d="M4.0 0.5 L4.0 3.6" stroke="rgba(255,255,255,0.28)" stroke-width="1"/></svg>
<div class="a" style="left:194px;top:414px;width:160px;height:11px;background:rgba(255,255,255,0.10);"></div>
<div class="a" style="left:194px;top:414px;width:8px;height:11px;background:rgba(0,0,0,0.10);"></div>
<div class="t" style="left:206px;top:416.5px;font-size:8px;color:#e0dcd9;">Display: Off</div>
<svg style="left:344px;top:418px" width="7" height="5"><polygon points="0,0 6,0 3,4" fill="#e0dcd9"/></svg>
<div class="a" style="left:194px;top:428px;width:160px;height:8px;background:rgba(0,0,0,0.22);"></div>
<div class="a" style="left:196px;top:429px;width:1px;height:6px;background:rgba(255,255,255,0.25);"></div>
<div class="a" style="left:169px;top:440px;width:254px;height:43px;background:#151618;"></div>
<div class="a" style="left:170px;top:440px;width:6px;height:42px;background:#4f9d78;"></div>
<div class="a" style="left:176px;top:440px;width:240px;height:42px;background:#2d493d;"></div>
<div class="a" style="left:416.5px;top:440px;width:6.5px;height:42px;background:#3a3f46;"></div>
<div class="a" style="left:416.5px;top:454px;width:6.5px;height:27px;background:#d4a040;"></div>
<svg style="left:170px;top:471px" width="6" height="8"><path d="M0.5 5 Q1.5 2 3 4 Q4.5 6 5.5 3" stroke="#2d493d" stroke-width="0.8" fill="none"/></svg>
<div class="t" style="left:176px;top:444px;font-size:9px;color:#e6e7ea;width:18px;text-align:center;font-weight:bold">8</div>
<svg style="left:398px;top:447px" width="13" height="8"><g fill="#dcdee2"><rect x="0" y="5.5" width="13" height="2.5"/><rect x="0" y="0" width="1.4" height="8"/><rect x="3.9" y="1" width="1.3" height="7"/><rect x="7.8" y="1" width="1.3" height="7"/><rect x="11.6" y="0" width="1.4" height="8"/></g></svg>
<div class="a" style="left:194px;top:442px;width:66px;height:12px;background:rgba(255,255,255,0.10);border:1px solid rgba(0,0,0,0.35);border-radius:2px"></div>
<div class="a" style="left:210px;top:442px;width:1px;height:12px;background:rgba(0,0,0,0.35);"></div>
<div class="a" style="left:227px;top:442px;width:1px;height:12px;background:rgba(0,0,0,0.35);"></div>
<div class="t" style="left:194px;top:445px;font-size:7.5px;color:#d8d2ce;width:16px;text-align:center;">M</div>
<div class="t" style="left:211px;top:445px;font-size:7.5px;color:#d8d2ce;width:16px;text-align:center;">S</div>
<div class="t" style="left:265px;top:443.5px;font-size:9px;color:#e2e4e7;">Glockenspiel</div>
<svg style="left:181px;top:458px" width="8" height="8"><path d="M2.24 2.0 A3.2 3.2 0 1 0 5.76 2.0" stroke="rgba(255,255,255,0.28)" stroke-width="1" fill="none"/><path d="M4.0 0.5 L4.0 3.6" stroke="rgba(255,255,255,0.28)" stroke-width="1"/></svg>
<div class="a" style="left:194px;top:456px;width:160px;height:11px;background:rgba(255,255,255,0.10);"></div>
<div class="a" style="left:194px;top:456px;width:8px;height:11px;background:rgba(0,0,0,0.10);"></div>
<div class="t" style="left:206px;top:458.5px;font-size:8px;color:#e0dcd9;">Display: Off</div>
<svg style="left:344px;top:460px" width="7" height="5"><polygon points="0,0 6,0 3,4" fill="#e0dcd9"/></svg>
<div class="a" style="left:194px;top:470px;width:160px;height:8px;background:rgba(0,0,0,0.22);"></div>
<div class="a" style="left:196px;top:471px;width:1px;height:6px;background:rgba(255,255,255,0.25);"></div>
<div class="a" style="left:169px;top:483px;width:254px;height:42px;background:#151618;"></div>
<div class="a" style="left:170px;top:483px;width:6px;height:41px;background:#4f9d78;"></div>
<div class="a" style="left:176px;top:483px;width:240px;height:41px;background:#2d493d;"></div>
<div class="a" style="left:416.5px;top:483px;width:6.5px;height:41px;background:#3a3f46;"></div>
<svg style="left:170px;top:514px" width="6" height="8"><path d="M0.5 5 Q1.5 2 3 4 Q4.5 6 5.5 3" stroke="#2d493d" stroke-width="0.8" fill="none"/></svg>
<div class="t" style="left:176px;top:487px;font-size:9px;color:#e6e7ea;width:18px;text-align:center;font-weight:bold">9</div>
<svg style="left:398px;top:490px" width="13" height="8"><g fill="#dcdee2"><rect x="0" y="5.5" width="13" height="2.5"/><rect x="0" y="0" width="1.4" height="8"/><rect x="3.9" y="1" width="1.3" height="7"/><rect x="7.8" y="1" width="1.3" height="7"/><rect x="11.6" y="0" width="1.4" height="8"/></g></svg>
<div class="a" style="left:194px;top:485px;width:66px;height:12px;background:rgba(255,255,255,0.10);border:1px solid rgba(0,0,0,0.35);border-radius:2px"></div>
<div class="a" style="left:210px;top:485px;width:1px;height:12px;background:rgba(0,0,0,0.35);"></div>
<div class="a" style="left:227px;top:485px;width:1px;height:12px;background:rgba(0,0,0,0.35);"></div>
<div class="t" style="left:194px;top:488px;font-size:7.5px;color:#d8d2ce;width:16px;text-align:center;">M</div>
<div class="t" style="left:211px;top:488px;font-size:7.5px;color:#d8d2ce;width:16px;text-align:center;">S</div>
<div class="t" style="left:265px;top:486.5px;font-size:9px;color:#e2e4e7;">Harp</div>
<svg style="left:181px;top:501px" width="8" height="8"><path d="M2.24 2.0 A3.2 3.2 0 1 0 5.76 2.0" stroke="rgba(255,255,255,0.28)" stroke-width="1" fill="none"/><path d="M4.0 0.5 L4.0 3.6" stroke="rgba(255,255,255,0.28)" stroke-width="1"/></svg>
<div class="a" style="left:194px;top:499px;width:160px;height:11px;background:rgba(255,255,255,0.10);"></div>
<div class="a" style="left:194px;top:499px;width:8px;height:11px;background:rgba(0,0,0,0.10);"></div>
<div class="t" style="left:206px;top:501.5px;font-size:8px;color:#e0dcd9;">Display: Off</div>
<svg style="left:344px;top:503px" width="7" height="5"><polygon points="0,0 6,0 3,4" fill="#e0dcd9"/></svg>
<div class="a" style="left:194px;top:513px;width:160px;height:8px;background:rgba(0,0,0,0.22);"></div>
<div class="a" style="left:196px;top:514px;width:1px;height:6px;background:rgba(255,255,255,0.25);"></div>
<div class="a" style="left:169px;top:525px;width:254px;height:42px;background:#151618;"></div>
<div class="a" style="left:170px;top:525px;width:6px;height:41px;background:#4a9fdb;"></div>
<div class="a" style="left:176px;top:525px;width:240px;height:41px;background:#243e4e;"></div>
<div class="a" style="left:416.5px;top:525px;width:6.5px;height:41px;background:#3a3f46;"></div>
<div class="a" style="left:416.5px;top:527px;width:6.5px;height:38px;background:#d4a040;"></div>
<svg style="left:170px;top:556px" width="6" height="8"><path d="M0.5 5 Q1.5 2 3 4 Q4.5 6 5.5 3" stroke="#243e4e" stroke-width="0.8" fill="none"/></svg>
<div class="t" style="left:176px;top:531px;font-size:9px;color:#e6e7ea;width:18px;text-align:center;font-weight:bold">10</div>
<svg style="left:398px;top:532px" width="13" height="8"><g fill="#dcdee2"><rect x="0" y="5.5" width="13" height="2.5"/><rect x="0" y="0" width="1.4" height="8"/><rect x="3.9" y="1" width="1.3" height="7"/><rect x="7.8" y="1" width="1.3" height="7"/><rect x="11.6" y="0" width="1.4" height="8"/></g></svg>
<div class="a" style="left:194px;top:527px;width:66px;height:15px;background:rgba(255,255,255,0.08);border:1px solid rgba(0,0,0,0.4);border-radius:2px"></div>
<div class="a" style="left:210.5px;top:527px;width:1px;height:15px;background:rgba(0,0,0,0.4);"></div>
<div class="a" style="left:227.0px;top:527px;width:1px;height:15px;background:rgba(0,0,0,0.4);"></div>
<div class="a" style="left:243.5px;top:527px;width:1px;height:15px;background:rgba(0,0,0,0.4);"></div>
<div class="t" style="left:194px;top:530px;font-size:10px;color:#dfe3e6;width:16px;text-align:center;">M</div>
<div class="t" style="left:211px;top:530px;font-size:10px;color:#dfe3e6;width:16px;text-align:center;">S</div>
<svg style="left:231px;top:531px" width="8" height="8"><circle cx="4" cy="4" r="3" fill="#e6e8ea"/></svg>
<svg style="left:248px;top:531px" width="8" height="8"><circle cx="4" cy="4" r="3" fill="#e6e8ea"/><path d="M4 1 A3 3 0 0 1 4 7 Z" fill="#243e4e"/></svg>
<div class="t" style="left:265px;top:531px;font-size:9px;color:#e2e4e7;">Violins</div>
<div class="a" style="left:194px;top:546px;width:160px;height:2px;background:#1a2530;"></div>
<div class="a" style="left:194px;top:546px;width:122px;height:2px;background:#9ea4a9;"></div>
<div class="a" style="left:194px;top:554px;width:160px;height:11px;background:rgba(255,255,255,0.10);"></div>
<svg style="left:198px;top:558px" width="9" height="6"><rect width="9" height="6" fill="#c8ced3"/><g fill="#3a4d5c"><rect x="1.5" y="0" width="1" height="3.5"/><rect x="4" y="0" width="1" height="3.5"/><rect x="6.5" y="0" width="1" height="3.5"/></g></svg>
<div class="t" style="left:210px;top:556px;font-size:8.5px;color:#d6dade;">Presence 5 2 3</div>
<svg style="left:344px;top:558px" width="7" height="5"><polygon points="0,0 6,0 3,4" fill="#d6dade"/></svg>
<div class="a" style="left:169px;top:567px;width:254px;height:42px;background:#151618;"></div>
<div class="a" style="left:170px;top:567px;width:6px;height:41px;background:#5cc2e9;"></div>
<div class="a" style="left:176px;top:567px;width:240px;height:41px;background:#243e4e;"></div>
<div class="a" style="left:416.5px;top:567px;width:6.5px;height:41px;background:#3a3f46;"></div>
<div class="a" style="left:416.5px;top:570px;width:6.5px;height:30px;background:#d4a040;"></div>
<svg style="left:170px;top:598px" width="6" height="8"><path d="M0.5 5 Q1.5 2 3 4 Q4.5 6 5.5 3" stroke="#243e4e" stroke-width="0.8" fill="none"/></svg>
<div class="t" style="left:176px;top:573px;font-size:9px;color:#e6e7ea;width:18px;text-align:center;font-weight:bold">11</div>
<svg style="left:398px;top:574px" width="13" height="8"><g fill="#dcdee2"><rect x="0" y="5.5" width="13" height="2.5"/><rect x="0" y="0" width="1.4" height="8"/><rect x="3.9" y="1" width="1.3" height="7"/><rect x="7.8" y="1" width="1.3" height="7"/><rect x="11.6" y="0" width="1.4" height="8"/></g></svg>
<div class="a" style="left:194px;top:569px;width:66px;height:15px;background:rgba(255,255,255,0.08);border:1px solid rgba(0,0,0,0.4);border-radius:2px"></div>
<div class="a" style="left:210.5px;top:569px;width:1px;height:15px;background:rgba(0,0,0,0.4);"></div>
<div class="a" style="left:227.0px;top:569px;width:1px;height:15px;background:rgba(0,0,0,0.4);"></div>
<div class="a" style="left:243.5px;top:569px;width:1px;height:15px;background:rgba(0,0,0,0.4);"></div>
<div class="t" style="left:194px;top:572px;font-size:10px;color:#dfe3e6;width:16px;text-align:center;">M</div>
<div class="t" style="left:211px;top:572px;font-size:10px;color:#dfe3e6;width:16px;text-align:center;">S</div>
<svg style="left:231px;top:573px" width="8" height="8"><circle cx="4" cy="4" r="3" fill="#e6e8ea"/></svg>
<svg style="left:248px;top:573px" width="8" height="8"><circle cx="4" cy="4" r="3" fill="#e6e8ea"/><path d="M4 1 A3 3 0 0 1 4 7 Z" fill="#243e4e"/></svg>
<div class="t" style="left:265px;top:573px;font-size:9px;color:#e2e4e7;">Violas</div>
<div class="a" style="left:194px;top:588px;width:160px;height:2px;background:#1a2530;"></div>
<div class="a" style="left:194px;top:588px;width:98px;height:2px;background:#9ea4a9;"></div>
<div class="a" style="left:194px;top:596px;width:160px;height:11px;background:rgba(255,255,255,0.10);"></div>
<svg style="left:198px;top:600px" width="9" height="6"><rect width="9" height="6" fill="#c8ced3"/><g fill="#3a4d5c"><rect x="1.5" y="0" width="1" height="3.5"/><rect x="4" y="0" width="1" height="3.5"/><rect x="6.5" y="0" width="1" height="3.5"/></g></svg>
<div class="t" style="left:210px;top:598px;font-size:8.5px;color:#d6dade;">Presence 5 2 2</div>
<svg style="left:344px;top:600px" width="7" height="5"><polygon points="0,0 6,0 3,4" fill="#d6dade"/></svg>
<div class="a" style="left:169px;top:600px;width:254px;height:12px;background:#1f2023;"></div>
<div class="t" style="left:182px;top:603px;font-size:7px;color:#c9ccd0;">M</div>
<div class="t" style="left:217px;top:603px;font-size:7px;color:#c9ccd0;">S</div>
<div class="a" style="left:270px;top:600px;width:1px;height:12px;background:#141517;"></div>
<div class="t" style="left:323px;top:603px;font-size:7px;color:#c9ccd0;">Normal</div>
<svg style="left:398px;top:605px" width="6" height="4"><polygon points="0,0 6,0 3,4" fill="#aeb1b6"/></svg>
<svg style="left:412px;top:603px" width="6" height="6"><path d="M0 0.5H6M0 2.5H6M0 4.5H6" stroke="#6a6d72"/></svg>
<div class="a" style="left:424px;top:61px;width:1126px;height:539px;background:#1e2022;"></div>
<div class="a" style="left:424px;top:61px;width:1126px;height:22px;background:#3b4048;"></div>
<div class="a" style="left:424px;top:61px;width:14px;height:22px;background:#2e3136;"></div>
<div class="a" style="left:438px;top:62px;width:1112px;height:3px;background:#5eaee8;"></div>
<div class="a" style="left:438.4px;top:75px;width:1px;height:8px;background:#9aa0a8;"></div>
<div class="t" style="left:439.4px;top:67px;font-size:8px;color:#d8dbe0;">13</div>
<div class="a" style="left:464.15999999999997px;top:80px;width:1px;height:3px;background:#8a9098;"></div>
<div class="a" style="left:489.91999999999996px;top:80px;width:1px;height:3px;background:#8a9098;"></div>
<div class="t" style="left:490.91999999999996px;top:67px;font-size:8px;color:#d8dbe0;">15</div>
<div class="a" style="left:515.68px;top:80px;width:1px;height:3px;background:#8a9098;"></div>
<div class="a" style="left:541.4399999999999px;top:75px;width:1px;height:8px;background:#9aa0a8;"></div>
<div class="t" style="left:542.4399999999999px;top:67px;font-size:8px;color:#d8dbe0;">17</div>
<div class="a" style="left:567.2px;top:80px;width:1px;height:3px;background:#8a9098;"></div>
<div class="a" style="left:592.96px;top:80px;width:1px;height:3px;background:#8a9098;"></div>
<div class="t" style="left:593.96px;top:67px;font-size:8px;color:#d8dbe0;">19</div>
<div class="a" style="left:618.72px;top:80px;width:1px;height:3px;background:#8a9098;"></div>
<div class="a" style="left:644.48px;top:75px;width:1px;height:8px;background:#9aa0a8;"></div>
<div class="t" style="left:645.48px;top:67px;font-size:8px;color:#d8dbe0;">21</div>
<div class="a" style="left:670.24px;top:80px;width:1px;height:3px;background:#8a9098;"></div>
<div class="a" style="left:696.0px;top:80px;width:1px;height:3px;background:#8a9098;"></div>
<div class="t" style="left:697.0px;top:67px;font-size:8px;color:#d8dbe0;">23</div>
<div class="a" style="left:721.76px;top:80px;width:1px;height:3px;background:#8a9098;"></div>
<div class="a" style="left:747.52px;top:75px;width:1px;height:8px;background:#9aa0a8;"></div>
<div class="t" style="left:748.52px;top:67px;font-size:8px;color:#d8dbe0;">25</div>
<div class="a" style="left:773.28px;top:80px;width:1px;height:3px;background:#8a9098;"></div>
<div class="a" style="left:799.04px;top:80px;width:1px;height:3px;background:#8a9098;"></div>
<div class="t" style="left:800.04px;top:67px;font-size:8px;color:#d8dbe0;">27</div>
<div class="a" style="left:824.8px;top:80px;width:1px;height:3px;background:#8a9098;"></div>
<div class="a" style="left:850.56px;top:75px;width:1px;height:8px;background:#9aa0a8;"></div>
<div class="t" style="left:851.56px;top:67px;font-size:8px;color:#d8dbe0;">29</div>
<div class="a" style="left:876.3199999999999px;top:80px;width:1px;height:3px;background:#8a9098;"></div>
<div class="a" style="left:902.0799999999999px;top:80px;width:1px;height:3px;background:#8a9098;"></div>
<div class="t" style="left:903.0799999999999px;top:67px;font-size:8px;color:#d8dbe0;">31</div>
<div class="a" style="left:927.84px;top:80px;width:1px;height:3px;background:#8a9098;"></div>
<div class="a" style="left:953.6px;top:75px;width:1px;height:8px;background:#9aa0a8;"></div>
<div class="t" style="left:954.6px;top:67px;font-size:8px;color:#d8dbe0;">33</div>
<div class="a" style="left:979.36px;top:80px;width:1px;height:3px;background:#8a9098;"></div>
<div class="a" style="left:1005.12px;top:80px;width:1px;height:3px;background:#8a9098;"></div>
<div class="t" style="left:1006.12px;top:67px;font-size:8px;color:#d8dbe0;">35</div>
<div class="a" style="left:1030.88px;top:80px;width:1px;height:3px;background:#8a9098;"></div>
<div class="a" style="left:1056.6399999999999px;top:75px;width:1px;height:8px;background:#9aa0a8;"></div>
<div class="t" style="left:1057.6399999999999px;top:67px;font-size:8px;color:#d8dbe0;">37</div>
<div class="a" style="left:1082.4px;top:80px;width:1px;height:3px;background:#8a9098;"></div>
<div class="a" style="left:1108.1599999999999px;top:80px;width:1px;height:3px;background:#8a9098;"></div>
<div class="t" style="left:1109.1599999999999px;top:67px;font-size:8px;color:#d8dbe0;">39</div>
<div class="a" style="left:1133.92px;top:80px;width:1px;height:3px;background:#8a9098;"></div>
<div class="a" style="left:1159.68px;top:75px;width:1px;height:8px;background:#9aa0a8;"></div>
<div class="t" style="left:1160.68px;top:67px;font-size:8px;color:#d8dbe0;">41</div>
<div class="a" style="left:1185.44px;top:80px;width:1px;height:3px;background:#8a9098;"></div>
<div class="a" style="left:1211.2px;top:80px;width:1px;height:3px;background:#8a9098;"></div>
<div class="t" style="left:1212.2px;top:67px;font-size:8px;color:#d8dbe0;">43</div>
<div class="a" style="left:1236.96px;top:80px;width:1px;height:3px;background:#8a9098;"></div>
<div class="a" style="left:1262.72px;top:75px;width:1px;height:8px;background:#9aa0a8;"></div>
<div class="t" style="left:1263.72px;top:67px;font-size:8px;color:#d8dbe0;">45</div>
<div class="a" style="left:1288.48px;top:80px;width:1px;height:3px;background:#8a9098;"></div>
<div class="a" style="left:1314.24px;top:80px;width:1px;height:3px;background:#8a9098;"></div>
<div class="t" style="left:1315.24px;top:67px;font-size:8px;color:#d8dbe0;">47</div>
<div class="a" style="left:1340.0px;top:80px;width:1px;height:3px;background:#8a9098;"></div>
<div class="a" style="left:1365.76px;top:75px;width:1px;height:8px;background:#9aa0a8;"></div>
<div class="t" style="left:1366.76px;top:67px;font-size:8px;color:#d8dbe0;">49</div>
<div class="a" style="left:1391.52px;top:80px;width:1px;height:3px;background:#8a9098;"></div>
<div class="a" style="left:1417.2800000000002px;top:80px;width:1px;height:3px;background:#8a9098;"></div>
<div class="t" style="left:1418.2800000000002px;top:67px;font-size:8px;color:#d8dbe0;">51</div>
<div class="a" style="left:1443.04px;top:80px;width:1px;height:3px;background:#8a9098;"></div>
<div class="a" style="left:1468.8000000000002px;top:75px;width:1px;height:8px;background:#9aa0a8;"></div>
<div class="t" style="left:1469.8000000000002px;top:67px;font-size:8px;color:#d8dbe0;">53</div>
<div class="a" style="left:1494.56px;top:80px;width:1px;height:3px;background:#8a9098;"></div>
<div class="a" style="left:1520.3200000000002px;top:80px;width:1px;height:3px;background:#8a9098;"></div>
<div class="t" style="left:1521.3200000000002px;top:67px;font-size:8px;color:#d8dbe0;">55</div>
<div class="a" style="left:1546.08px;top:80px;width:1px;height:3px;background:#8a9098;"></div>
<div class="a" style="left:424px;top:83px;width:1126px;height:1px;background:#141517;"></div>
<div class="a" style="left:438.4px;top:84px;width:1px;height:20px;background:#2c2e31"></div>
<div class="a" style="left:464.2px;top:84px;width:1px;height:20px;background:#2c2e31"></div>
<div class="a" style="left:489.9px;top:84px;width:1px;height:20px;background:#2c2e31"></div>
<div class="a" style="left:515.7px;top:84px;width:1px;height:20px;background:#2c2e31"></div>
<div class="a" style="left:541.4px;top:84px;width:1px;height:20px;background:#2c2e31"></div>
<div class="a" style="left:567.2px;top:84px;width:1px;height:20px;background:#2c2e31"></div>
<div class="a" style="left:593.0px;top:84px;width:1px;height:20px;background:#2c2e31"></div>
<div class="a" style="left:618.7px;top:84px;width:1px;height:20px;background:#2c2e31"></div>
<div class="a" style="left:644.5px;top:84px;width:1px;height:20px;background:#2c2e31"></div>
<div class="a" style="left:670.2px;top:84px;width:1px;height:20px;background:#2c2e31"></div>
<div class="a" style="left:696.0px;top:84px;width:1px;height:20px;background:#2c2e31"></div>
<div class="a" style="left:721.8px;top:84px;width:1px;height:20px;background:#2c2e31"></div>
<div class="a" style="left:747.5px;top:84px;width:1px;height:20px;background:#2c2e31"></div>
<div class="a" style="left:773.3px;top:84px;width:1px;height:20px;background:#2c2e31"></div>
<div class="a" style="left:799.0px;top:84px;width:1px;height:20px;background:#2c2e31"></div>
<div class="a" style="left:824.8px;top:84px;width:1px;height:20px;background:#2c2e31"></div>
<div class="a" style="left:850.6px;top:84px;width:1px;height:20px;background:#2c2e31"></div>
<div class="a" style="left:876.3px;top:84px;width:1px;height:20px;background:#2c2e31"></div>
<div class="a" style="left:902.1px;top:84px;width:1px;height:20px;background:#2c2e31"></div>
<div class="a" style="left:927.8px;top:84px;width:1px;height:20px;background:#2c2e31"></div>
<div class="a" style="left:953.6px;top:84px;width:1px;height:20px;background:#2c2e31"></div>
<div class="a" style="left:979.4px;top:84px;width:1px;height:20px;background:#2c2e31"></div>
<div class="a" style="left:1005.1px;top:84px;width:1px;height:20px;background:#2c2e31"></div>
<div class="a" style="left:1030.9px;top:84px;width:1px;height:20px;background:#2c2e31"></div>
<div class="a" style="left:1056.6px;top:84px;width:1px;height:20px;background:#2c2e31"></div>
<div class="a" style="left:1082.4px;top:84px;width:1px;height:20px;background:#2c2e31"></div>
<div class="a" style="left:1108.2px;top:84px;width:1px;height:20px;background:#2c2e31"></div>
<div class="a" style="left:1133.9px;top:84px;width:1px;height:20px;background:#2c2e31"></div>
<div class="a" style="left:1159.7px;top:84px;width:1px;height:20px;background:#2c2e31"></div>
<div class="a" style="left:1185.4px;top:84px;width:1px;height:20px;background:#2c2e31"></div>
<div class="a" style="left:1211.2px;top:84px;width:1px;height:20px;background:#2c2e31"></div>
<div class="a" style="left:1237.0px;top:84px;width:1px;height:20px;background:#2c2e31"></div>
<div class="a" style="left:1262.7px;top:84px;width:1px;height:20px;background:#2c2e31"></div>
<div class="a" style="left:1288.5px;top:84px;width:1px;height:20px;background:#2c2e31"></div>
<div class="a" style="left:1314.2px;top:84px;width:1px;height:20px;background:#2c2e31"></div>
<div class="a" style="left:1340.0px;top:84px;width:1px;height:20px;background:#2c2e31"></div>
<div class="a" style="left:1365.8px;top:84px;width:1px;height:20px;background:#2c2e31"></div>
<div class="a" style="left:1391.5px;top:84px;width:1px;height:20px;background:#2c2e31"></div>
<div class="a" style="left:1417.3px;top:84px;width:1px;height:20px;background:#2c2e31"></div>
<div class="a" style="left:1443.0px;top:84px;width:1px;height:20px;background:#2c2e31"></div>
<div class="a" style="left:1468.8px;top:84px;width:1px;height:20px;background:#2c2e31"></div>
<div class="a" style="left:1494.6px;top:84px;width:1px;height:20px;background:#2c2e31"></div>
<div class="a" style="left:1520.3px;top:84px;width:1px;height:20px;background:#2c2e31"></div>
<div class="a" style="left:1546.1px;top:84px;width:1px;height:20px;background:#2c2e31"></div>
<div class="a" style="left:424px;top:84px;width:14px;height:20px;background:#232427;"></div>
<svg style="left:438px;top:84px" width="40" height="20"><rect x="0" y="0" width="1.5" height="20" fill="#c5c7ca"/><polygon points="0,1 33,1 29,11 0,11" fill="#c9cbce"/></svg>
<div class="t" style="left:441px;top:86px;font-size:7.5px;color:#2a2b2e;">Layout</div>
<svg style="left:902px;top:84px" width="48" height="20"><rect x="0" y="0" width="1.5" height="20" fill="#c5c7ca"/><polygon points="0,1 45,1 41,11 0,11" fill="#c9cbce"/></svg>
<div class="t" style="left:905px;top:86px;font-size:7.5px;color:#2a2b2e;">No Layout</div>
<div class="a" style="left:424px;top:104px;width:1126px;height:40px;background:#1e2022;"></div>
<div class="a" style="left:424px;top:104px;width:14px;height:19px;background:#4a8fd1;"></div>
<div class="a" style="left:424px;top:124px;width:14px;height:19px;background:#45474b;"></div>
<div class="a" style="left:438.4px;top:104px;width:153.60000000000002px;height:19px;background:#59bde6;"></div>
<div class="t" style="left:444.9px;top:108px;font-size:11px;color:#1b4154;">Chorus</div>
<div class="a" style="left:593px;top:104px;width:128px;height:19px;background:#7ef5fa;"></div>
<div class="t" style="left:599.5px;top:108px;font-size:11px;color:#1b4154;">Bridge</div>
<div class="a" style="left:722px;top:104px;width:179px;height:19px;background:#6be0c6;"></div>
<div class="t" style="left:728.5px;top:108px;font-size:11px;color:#1b4154;">Outro</div>
<div class="a" style="left:902px;top:104px;width:154px;height:19px;background:#59bde6;"></div>
<div class="t" style="left:908.5px;top:108px;font-size:11px;color:#1b4154;">Chorus</div>
<div class="a" style="left:438.4px;top:124px;width:50.60000000000002px;height:19px;background:#4b4d51;"></div>
<div class="t" style="left:444.4px;top:127px;font-size:11px;color:#e6e7ea;">Cm</div>
<div class="a" style="left:490px;top:124px;width:51px;height:19px;background:#4b4d51;"></div>
<div class="t" style="left:496px;top:127px;font-size:11px;color:#e6e7ea;">E</div>
<svg style="left:504px;top:126px" width="6" height="13"><path d="M1 0.5 L1 11.5 Q6 8.5 4.5 6.5 Q3 5 1 7" stroke="#e6e7ea" stroke-width="1.1" fill="none"/></svg>
<div class="t" style="left:510px;top:127px;font-size:11px;color:#e6e7ea;">m</div>
<div class="a" style="left:542px;top:124px;width:50px;height:19px;background:#4b4d51;"></div>
<div class="t" style="left:548px;top:127px;font-size:11px;color:#e6e7ea;">Fm</div>
<div class="a" style="left:593px;top:124px;width:128px;height:19px;background:#4b4d51;"></div>
<div class="t" style="left:599px;top:127px;font-size:11px;color:#e6e7ea;">Cm</div>
<div class="a" style="left:722px;top:124px;width:179px;height:19px;background:#4b4d51;"></div>
<div class="t" style="left:728px;top:127px;font-size:11px;color:#e6e7ea;">Cm</div>
<div class="a" style="left:902px;top:124px;width:51px;height:19px;background:#4b4d51;"></div>
<div class="t" style="left:908px;top:127px;font-size:11px;color:#e6e7ea;">Cm</div>
<div class="a" style="left:954px;top:124px;width:51px;height:19px;background:#4b4d51;"></div>
<div class="t" style="left:960px;top:127px;font-size:11px;color:#e6e7ea;">E</div>
<svg style="left:968px;top:126px" width="6" height="13"><path d="M1 0.5 L1 11.5 Q6 8.5 4.5 6.5 Q3 5 1 7" stroke="#e6e7ea" stroke-width="1.1" fill="none"/></svg>
<div class="t" style="left:974px;top:127px;font-size:11px;color:#e6e7ea;">m</div>
<div class="a" style="left:1006px;top:124px;width:50px;height:19px;background:#4b4d51;"></div>
<div class="t" style="left:1012px;top:127px;font-size:11px;color:#e6e7ea;">Fm</div>
<div class="a" style="left:1057px;top:104px;width:483px;height:40px;background:#1e2022;"></div>
<div class="a" style="left:424px;top:143px;width:1126px;height:2px;background:#111214;"></div>
<div class="a" style="left:424px;top:145px;width:1126px;height:42px;background:#2b2a28;"></div>
<div class="a" style="left:424px;top:186px;width:1126px;height:1px;background:rgba(255,255,255,0.035);"></div>
<div class="a" style="left:424px;top:187px;width:1126px;height:42px;background:#201f1d;"></div>
<div class="a" style="left:424px;top:228px;width:1126px;height:1px;background:rgba(255,255,255,0.035);"></div>
<div class="a" style="left:424px;top:229px;width:1126px;height:43px;background:#201f1d;"></div>
<div class="a" style="left:424px;top:271px;width:1126px;height:1px;background:rgba(255,255,255,0.035);"></div>
<div class="a" style="left:424px;top:272px;width:1126px;height:42px;background:#221e1f;"></div>
<div class="a" style="left:424px;top:313px;width:1126px;height:1px;background:rgba(255,255,255,0.035);"></div>
<div class="a" style="left:424px;top:314px;width:1126px;height:42px;background:#221e1f;"></div>
<div class="a" style="left:424px;top:355px;width:1126px;height:1px;background:rgba(255,255,255,0.035);"></div>
<div class="a" style="left:424px;top:356px;width:1126px;height:42px;background:#221e1f;"></div>
<div class="a" style="left:424px;top:397px;width:1126px;height:1px;background:rgba(255,255,255,0.035);"></div>
<div class="a" style="left:424px;top:398px;width:1126px;height:42px;background:#1f2221;"></div>
<div class="a" style="left:424px;top:439px;width:1126px;height:1px;background:rgba(255,255,255,0.035);"></div>
<div class="a" style="left:424px;top:440px;width:1126px;height:43px;background:#1f2321;"></div>
<div class="a" style="left:424px;top:482px;width:1126px;height:1px;background:rgba(255,255,255,0.035);"></div>
<div class="a" style="left:424px;top:483px;width:1126px;height:42px;background:#1f2321;"></div>
<div class="a" style="left:424px;top:524px;width:1126px;height:1px;background:rgba(255,255,255,0.035);"></div>
<div class="a" style="left:424px;top:525px;width:1126px;height:42px;background:#1d2125;"></div>
<div class="a" style="left:424px;top:566px;width:1126px;height:1px;background:rgba(255,255,255,0.035);"></div>
<div class="a" style="left:424px;top:567px;width:1126px;height:42px;background:#1d2125;"></div>
<div class="a" style="left:424px;top:608px;width:1126px;height:1px;background:rgba(255,255,255,0.035);"></div>
<div class="a" style="left:438.4px;top:145px;width:1px;height:455px;background:#323437"></div>
<div class="a" style="left:464.2px;top:145px;width:1px;height:455px;background:#323437"></div>
<div class="a" style="left:489.9px;top:145px;width:1px;height:455px;background:#323437"></div>
<div class="a" style="left:515.7px;top:145px;width:1px;height:455px;background:#323437"></div>
<div class="a" style="left:541.4px;top:145px;width:1px;height:455px;background:#323437"></div>
<div class="a" style="left:567.2px;top:145px;width:1px;height:455px;background:#323437"></div>
<div class="a" style="left:593.0px;top:145px;width:1px;height:455px;background:#323437"></div>
<div class="a" style="left:618.7px;top:145px;width:1px;height:455px;background:#323437"></div>
<div class="a" style="left:644.5px;top:145px;width:1px;height:455px;background:#323437"></div>
<div class="a" style="left:670.2px;top:145px;width:1px;height:455px;background:#323437"></div>
<div class="a" style="left:696.0px;top:145px;width:1px;height:455px;background:#323437"></div>
<div class="a" style="left:721.8px;top:145px;width:1px;height:455px;background:#323437"></div>
<div class="a" style="left:747.5px;top:145px;width:1px;height:455px;background:#323437"></div>
<div class="a" style="left:773.3px;top:145px;width:1px;height:455px;background:#323437"></div>
<div class="a" style="left:799.0px;top:145px;width:1px;height:455px;background:#323437"></div>
<div class="a" style="left:824.8px;top:145px;width:1px;height:455px;background:#323437"></div>
<div class="a" style="left:850.6px;top:145px;width:1px;height:455px;background:#323437"></div>
<div class="a" style="left:876.3px;top:145px;width:1px;height:455px;background:#323437"></div>
<div class="a" style="left:902.1px;top:145px;width:1px;height:455px;background:#323437"></div>
<div class="a" style="left:927.8px;top:145px;width:1px;height:455px;background:#323437"></div>
<div class="a" style="left:953.6px;top:145px;width:1px;height:455px;background:#323437"></div>
<div class="a" style="left:979.4px;top:145px;width:1px;height:455px;background:#323437"></div>
<div class="a" style="left:1005.1px;top:145px;width:1px;height:455px;background:#323437"></div>
<div class="a" style="left:1030.9px;top:145px;width:1px;height:455px;background:#323437"></div>
<div class="a" style="left:1056.6px;top:145px;width:1px;height:455px;background:#323437"></div>
<div class="a" style="left:1082.4px;top:145px;width:1px;height:455px;background:#323437"></div>
<div class="a" style="left:1108.2px;top:145px;width:1px;height:455px;background:#323437"></div>
<div class="a" style="left:1133.9px;top:145px;width:1px;height:455px;background:#323437"></div>
<div class="a" style="left:1159.7px;top:145px;width:1px;height:455px;background:#323437"></div>
<div class="a" style="left:1185.4px;top:145px;width:1px;height:455px;background:#323437"></div>
<div class="a" style="left:1211.2px;top:145px;width:1px;height:455px;background:#323437"></div>
<div class="a" style="left:1237.0px;top:145px;width:1px;height:455px;background:#323437"></div>
<div class="a" style="left:1262.7px;top:145px;width:1px;height:455px;background:#323437"></div>
<div class="a" style="left:1288.5px;top:145px;width:1px;height:455px;background:#323437"></div>
<div class="a" style="left:1314.2px;top:145px;width:1px;height:455px;background:#323437"></div>
<div class="a" style="left:1340.0px;top:145px;width:1px;height:455px;background:#323437"></div>
<div class="a" style="left:1365.8px;top:145px;width:1px;height:455px;background:#323437"></div>
<div class="a" style="left:1391.5px;top:145px;width:1px;height:455px;background:#323437"></div>
<div class="a" style="left:1417.3px;top:145px;width:1px;height:455px;background:#323437"></div>
<div class="a" style="left:1443.0px;top:145px;width:1px;height:455px;background:#323437"></div>
<div class="a" style="left:1468.8px;top:145px;width:1px;height:455px;background:#323437"></div>
<div class="a" style="left:1494.6px;top:145px;width:1px;height:455px;background:#323437"></div>
<div class="a" style="left:1520.3px;top:145px;width:1px;height:455px;background:#323437"></div>
<div class="a" style="left:1546.1px;top:145px;width:1px;height:455px;background:#323437"></div>
<div class="a" style="left:424px;top:145px;width:14px;height:41px;background:rgba(60,50,45,0.45);"></div>
<svg style="left:438.4px;top:145px" width="153.6" height="42"><rect x="0" y="0" width="153.6" height="42" fill="#c98062"/><rect x="0" y="0" width="0.8" height="42" fill="#7a4530" opacity="0.5"/><polygon points="0,1 33,1 28,9 0,9" fill="#7a4530" opacity="0.6"/><line x1="0" y1="35.5" x2="153.60000000000002" y2="35.5" stroke="#7a4530" stroke-width="0.9" opacity="0.8"/><line x1="0" y1="41" x2="153.60000000000002" y2="41" stroke="#7a4530" stroke-width="1" opacity="0.7"/><polyline points="0,16.7 4,16.4 8,17.3 12,16.2 16,17.1 20,16.8 24,16.2 28,17.0 32,16.2 36,16.9 40,16.2 44,16.3 48,16.9 52,17.6 56,16.3 60,16.5 64,17.2 68,17.8 72,17.1 76,16.8 80,17.9 84,16.2 88,17.6 92,16.6 96,16.4 100,16.3 104,16.7 108,17.6 112,16.4 116,17.1 120,17.3 124,16.8 128,17.1 132,16.2 136,16.2 140,16.5 144,17.3 148,16.9 152,16.7" fill="none" stroke="#7a4530" stroke-width="0.7" opacity="0.75"/><polyline points="0,33.0 6,33.0 12,33.0 18,33.0 24,33.0 30,33.0 36,33.0 42,33.0 48,33.0 54,33.0 60,33.0 66,33.0 72,33.0 72,23.0 78,23.0 84,23.0 90,23.0 96,23.0 102,23.0 108,23.0 108,26.0 114,26.0 120,26.0 126,26.0 132,26.0 138,26.0 138,33.0 144,33.0 150,33.0" fill="none" stroke="#7a4530" stroke-width="0.6" opacity="0.6"/><rect x="6" y="32" width="1.5" height="1.2" fill="#7a4530" opacity="0.8"/><rect x="20" y="32" width="1.5" height="1.2" fill="#7a4530" opacity="0.8"/><rect x="34" y="32" width="1.5" height="1.2" fill="#7a4530" opacity="0.8"/><rect x="48" y="32" width="1.5" height="1.2" fill="#7a4530" opacity="0.8"/><rect x="62" y="32" width="1.5" height="1.2" fill="#7a4530" opacity="0.8"/><rect x="76" y="32" width="1.5" height="1.2" fill="#7a4530" opacity="0.8"/><rect x="90" y="32" width="1.5" height="1.2" fill="#7a4530" opacity="0.8"/><rect x="104" y="32" width="1.5" height="1.2" fill="#7a4530" opacity="0.8"/><rect x="118" y="32" width="1.5" height="1.2" fill="#7a4530" opacity="0.8"/><rect x="132" y="32" width="1.5" height="1.2" fill="#7a4530" opacity="0.8"/></svg>
<div class="t" style="left:440.4px;top:145.8px;font-size:7.4px;color:#f4ece8;max-width:151px;overflow:hidden">Flutes</div>
<svg style="left:902px;top:145px" width="154.0" height="42"><rect x="0" y="0" width="154.0" height="42" fill="#c98062"/><rect x="0" y="0" width="0.8" height="42" fill="#7a4530" opacity="0.5"/><polygon points="0,1 136,1 131,9 0,9" fill="#7a4530" opacity="0.6"/><line x1="0" y1="35.5" x2="154" y2="35.5" stroke="#7a4530" stroke-width="0.9" opacity="0.8"/><line x1="0" y1="41" x2="154" y2="41" stroke="#7a4530" stroke-width="1" opacity="0.7"/><polyline points="0,17.3 4,16.2 8,17.4 12,17.3 16,17.9 20,17.6 24,16.6 28,16.8 32,17.3 36,16.1 40,16.9 44,16.4 48,16.3 52,16.2 56,17.5 60,16.3 64,16.5 68,16.8 72,17.7 76,16.2 80,16.9 84,17.1 88,17.7 92,17.6 96,17.7 100,16.6 104,16.8 108,16.7 112,17.7 116,17.8 120,16.4 124,16.4 128,16.5 132,16.5 136,17.0 140,17.2 144,16.6 148,16.1 152,16.9" fill="none" stroke="#7a4530" stroke-width="0.7" opacity="0.75"/><polyline points="0,33.0 6,33.0 12,33.0 18,33.0 24,33.0 30,33.0 36,33.0 42,33.0 42,23.0 48,23.0 54,23.0 60,23.0 66,23.0 72,23.0 78,23.0 84,23.0 90,23.0 90,33.0 96,33.0 96,33.0 102,33.0 108,33.0 114,33.0 120,33.0 120,33.0 126,33.0 132,33.0 138,33.0 144,33.0 150,33.0" fill="none" stroke="#7a4530" stroke-width="0.6" opacity="0.6"/><rect x="6" y="32" width="1.5" height="1.2" fill="#7a4530" opacity="0.8"/><rect x="20" y="32" width="1.5" height="1.2" fill="#7a4530" opacity="0.8"/><rect x="34" y="32" width="1.5" height="1.2" fill="#7a4530" opacity="0.8"/><rect x="48" y="32" width="1.5" height="1.2" fill="#7a4530" opacity="0.8"/><rect x="62" y="32" width="1.5" height="1.2" fill="#7a4530" opacity="0.8"/><rect x="76" y="32" width="1.5" height="1.2" fill="#7a4530" opacity="0.8"/><rect x="90" y="32" width="1.5" height="1.2" fill="#7a4530" opacity="0.8"/><rect x="104" y="32" width="1.5" height="1.2" fill="#7a4530" opacity="0.8"/><rect x="118" y="32" width="1.5" height="1.2" fill="#7a4530" opacity="0.8"/><rect x="132" y="32" width="1.5" height="1.2" fill="#7a4530" opacity="0.8"/><rect x="146" y="32" width="1.5" height="1.2" fill="#7a4530" opacity="0.8"/></svg>
<div class="t" style="left:904px;top:145.8px;font-size:7.4px;color:#f4ece8;max-width:151px;overflow:hidden">Flutes - Cmhasing Rhythms - 86 - Cm</div>
<div class="a" style="left:424px;top:187px;width:14px;height:41px;background:rgba(60,50,45,0.45);"></div>
<svg style="left:438.4px;top:187px" width="153.6" height="42"><rect x="0" y="0" width="153.6" height="42" fill="#c98062"/><rect x="0" y="0" width="0.8" height="42" fill="#7a4530" opacity="0.5"/><polygon points="0,1 44,1 39,9 0,9" fill="#7a4530" opacity="0.6"/><line x1="0" y1="35.5" x2="153.60000000000002" y2="35.5" stroke="#7a4530" stroke-width="0.9" opacity="0.8"/><line x1="0" y1="41" x2="153.60000000000002" y2="41" stroke="#7a4530" stroke-width="1" opacity="0.7"/><polyline points="0,16.3 4,17.6 8,17.9 12,16.9 16,17.0 20,16.3 24,16.3 28,16.7 32,16.6 36,17.6 40,16.4 44,16.1 48,17.8 52,17.1 56,16.4 60,17.1 64,16.1 68,17.1 72,17.9 76,17.7 80,17.4 84,16.6 88,16.8 92,16.4 96,17.5 100,17.1 104,17.5 108,16.7 112,16.5 116,17.6 120,17.9 124,17.6 128,17.6 132,17.6 136,17.4 140,16.5 144,17.0 148,16.7 152,16.2" fill="none" stroke="#7a4530" stroke-width="0.7" opacity="0.75"/><polyline points="0,33.0 0,26.0 6,26.0 12,26.0 18,26.0 24,26.0 30,26.0 36,26.0 42,26.0 48,26.0 54,26.0 54,33.0 60,33.0 66,33.0 72,33.0 78,33.0 84,33.0 90,33.0 96,33.0 102,33.0 108,33.0 114,33.0 114,33.0 120,33.0 126,33.0 132,33.0 138,33.0 144,33.0 150,33.0" fill="none" stroke="#7a4530" stroke-width="0.6" opacity="0.6"/><rect x="6" y="32" width="1.5" height="1.2" fill="#7a4530" opacity="0.8"/><rect x="20" y="32" width="1.5" height="1.2" fill="#7a4530" opacity="0.8"/><rect x="34" y="32" width="1.5" height="1.2" fill="#7a4530" opacity="0.8"/><rect x="48" y="32" width="1.5" height="1.2" fill="#7a4530" opacity="0.8"/><rect x="62" y="32" width="1.5" height="1.2" fill="#7a4530" opacity="0.8"/><rect x="76" y="32" width="1.5" height="1.2" fill="#7a4530" opacity="0.8"/><rect x="90" y="32" width="1.5" height="1.2" fill="#7a4530" opacity="0.8"/><rect x="104" y="32" width="1.5" height="1.2" fill="#7a4530" opacity="0.8"/><rect x="118" y="32" width="1.5" height="1.2" fill="#7a4530" opacity="0.8"/><rect x="132" y="32" width="1.5" height="1.2" fill="#7a4530" opacity="0.8"/></svg>
<div class="t" style="left:440.4px;top:187.8px;font-size:7.4px;color:#f4ece8;max-width:151px;overflow:hidden">Clarinets</div>
<svg style="left:902px;top:187px" width="154.0" height="42"><rect x="0" y="0" width="154.0" height="42" fill="#c98062"/><rect x="0" y="0" width="0.8" height="42" fill="#7a4530" opacity="0.5"/><polygon points="0,1 147,1 142,9 0,9" fill="#7a4530" opacity="0.6"/><line x1="0" y1="35.5" x2="154" y2="35.5" stroke="#7a4530" stroke-width="0.9" opacity="0.8"/><line x1="0" y1="41" x2="154" y2="41" stroke="#7a4530" stroke-width="1" opacity="0.7"/><polyline points="0,16.7 4,17.5 8,17.8 12,16.8 16,16.8 20,17.8 24,17.4 28,16.4 32,16.3 36,16.4 40,17.7 44,17.6 48,16.4 52,17.6 56,17.9 60,17.3 64,16.7 68,17.1 72,16.3 76,16.1 80,17.8 84,17.3 88,17.0 92,17.8 96,16.9 100,17.7 104,17.6 108,16.5 112,16.6 116,16.6 120,16.5 124,17.2 128,16.6 132,16.9 136,16.3 140,17.7 144,16.7 148,16.9 152,17.2" fill="none" stroke="#7a4530" stroke-width="0.7" opacity="0.75"/><polyline points="0,33.0 6,33.0 12,33.0 18,33.0 24,33.0 30,33.0 36,33.0 36,23.0 42,23.0 48,23.0 54,23.0 60,23.0 66,23.0 72,23.0 78,23.0 84,23.0 84,23.0 90,23.0 96,23.0 96,33.0 102,33.0 108,33.0 114,33.0 120,33.0 126,33.0 132,33.0 138,33.0 144,33.0 150,33.0" fill="none" stroke="#7a4530" stroke-width="0.6" opacity="0.6"/><rect x="6" y="32" width="1.5" height="1.2" fill="#7a4530" opacity="0.8"/><rect x="20" y="32" width="1.5" height="1.2" fill="#7a4530" opacity="0.8"/><rect x="34" y="32" width="1.5" height="1.2" fill="#7a4530" opacity="0.8"/><rect x="48" y="32" width="1.5" height="1.2" fill="#7a4530" opacity="0.8"/><rect x="62" y="32" width="1.5" height="1.2" fill="#7a4530" opacity="0.8"/><rect x="76" y="32" width="1.5" height="1.2" fill="#7a4530" opacity="0.8"/><rect x="90" y="32" width="1.5" height="1.2" fill="#7a4530" opacity="0.8"/><rect x="104" y="32" width="1.5" height="1.2" fill="#7a4530" opacity="0.8"/><rect x="118" y="32" width="1.5" height="1.2" fill="#7a4530" opacity="0.8"/><rect x="132" y="32" width="1.5" height="1.2" fill="#7a4530" opacity="0.8"/><rect x="146" y="32" width="1.5" height="1.2" fill="#7a4530" opacity="0.8"/></svg>
<div class="t" style="left:904px;top:187.8px;font-size:7.4px;color:#f4ece8;max-width:151px;overflow:hidden">Clarinets - Cmhasing Rhythms - 86 - Cm</div>
<div class="a" style="left:424px;top:229px;width:14px;height:42px;background:rgba(60,50,45,0.45);"></div>
<svg style="left:424px;top:229px" width="168.0" height="43"><rect x="0" y="0" width="168.0" height="43" fill="#c98062"/><rect x="0" y="0" width="0.8" height="43" fill="#7a4530" opacity="0.5"/><polygon points="14,1 54,1 49,9 14,9" fill="#7a4530" opacity="0.6"/><line x1="0" y1="36.5" x2="168" y2="36.5" stroke="#7a4530" stroke-width="0.9" opacity="0.8"/><line x1="0" y1="42" x2="168" y2="42" stroke="#7a4530" stroke-width="1" opacity="0.7"/><polyline points="0,12.0 4,12.0 8,12.6 12,11.9 16,12.1 20,11.9 24,13.3 28,12.6 32,13.1 36,13.3 40,11.3 44,12.2 48,13.3 52,13.0 56,10.9 60,10.9 64,11.8 68,10.7 72,11.2 76,10.7 80,12.5 84,12.9 88,13.2 92,11.0 96,12.6 100,12.5 104,10.9 108,13.1 112,13.4 116,11.2 120,13.4 124,11.7 128,12.0 132,13.5 136,13.0 140,11.0 144,11.8 148,12.0 152,11.5 156,11.1 160,11.5 164,12.7 168,10.6" fill="none" stroke="#7a4530" stroke-width="0.7" opacity="0.75"/><rect x="6" y="22" width="9" height="1.4" fill="#7a4530" opacity="0.85"/><rect x="6" y="25.5" width="9" height="1.4" fill="#7a4530" opacity="0.85"/><rect x="22" y="22" width="9" height="1.4" fill="#7a4530" opacity="0.85"/><rect x="22" y="25.5" width="9" height="1.4" fill="#7a4530" opacity="0.85"/><rect x="38" y="22" width="9" height="1.4" fill="#7a4530" opacity="0.85"/><rect x="38" y="25.5" width="9" height="1.4" fill="#7a4530" opacity="0.85"/><rect x="54" y="22" width="9" height="1.4" fill="#7a4530" opacity="0.85"/><rect x="54" y="25.5" width="9" height="1.4" fill="#7a4530" opacity="0.85"/><rect x="70" y="22" width="9" height="1.4" fill="#7a4530" opacity="0.85"/><rect x="70" y="25.5" width="9" height="1.4" fill="#7a4530" opacity="0.85"/><rect x="86" y="22" width="9" height="1.4" fill="#7a4530" opacity="0.85"/><rect x="86" y="25.5" width="9" height="1.4" fill="#7a4530" opacity="0.85"/><rect x="102" y="22" width="9" height="1.4" fill="#7a4530" opacity="0.85"/><rect x="102" y="25.5" width="9" height="1.4" fill="#7a4530" opacity="0.85"/><rect x="118" y="22" width="9" height="1.4" fill="#7a4530" opacity="0.85"/><rect x="118" y="25.5" width="9" height="1.4" fill="#7a4530" opacity="0.85"/><rect x="134" y="22" width="9" height="1.4" fill="#7a4530" opacity="0.85"/><rect x="134" y="25.5" width="9" height="1.4" fill="#7a4530" opacity="0.85"/><rect x="150" y="22" width="9" height="1.4" fill="#7a4530" opacity="0.85"/><rect x="150" y="25.5" width="9" height="1.4" fill="#7a4530" opacity="0.85"/></svg>
<div class="t" style="left:440px;top:229.8px;font-size:7.4px;color:#f4ece8;max-width:165px;overflow:hidden">Bassoons</div>
<svg style="left:593px;top:229px" width="128.0" height="43"><rect x="0" y="0" width="128.0" height="43" fill="#c98062"/><rect x="0" y="0" width="0.8" height="43" fill="#7a4530" opacity="0.5"/><polygon points="0,1 127,1 122,9 0,9" fill="#7a4530" opacity="0.6"/><line x1="0" y1="36.5" x2="128" y2="36.5" stroke="#7a4530" stroke-width="0.9" opacity="0.8"/><line x1="0" y1="42" x2="128" y2="42" stroke="#7a4530" stroke-width="1" opacity="0.7"/><polyline points="0,12.2 4,11.8 8,10.6 12,11.5 16,12.4 20,12.0 24,10.7 28,13.5 32,12.9 36,13.4 40,10.8 44,11.3 48,10.6 52,12.8 56,11.3 60,10.9 64,11.8 68,13.2 72,13.0 76,11.3 80,10.9 84,13.3 88,12.2 92,12.6 96,10.8 100,10.7 104,12.6 108,11.8 112,10.7 116,13.3 120,12.4 124,12.9 128,10.8" fill="none" stroke="#7a4530" stroke-width="0.7" opacity="0.75"/><rect x="6" y="22" width="9" height="1.4" fill="#7a4530" opacity="0.85"/><rect x="6" y="25.5" width="9" height="1.4" fill="#7a4530" opacity="0.85"/><rect x="22" y="22" width="9" height="1.4" fill="#7a4530" opacity="0.85"/><rect x="22" y="25.5" width="9" height="1.4" fill="#7a4530" opacity="0.85"/><rect x="38" y="22" width="9" height="1.4" fill="#7a4530" opacity="0.85"/><rect x="38" y="25.5" width="9" height="1.4" fill="#7a4530" opacity="0.85"/><rect x="54" y="22" width="9" height="1.4" fill="#7a4530" opacity="0.85"/><rect x="54" y="25.5" width="9" height="1.4" fill="#7a4530" opacity="0.85"/><rect x="70" y="22" width="9" height="1.4" fill="#7a4530" opacity="0.85"/><rect x="70" y="25.5" width="9" height="1.4" fill="#7a4530" opacity="0.85"/><rect x="86" y="22" width="9" height="1.4" fill="#7a4530" opacity="0.85"/><rect x="86" y="25.5" width="9" height="1.4" fill="#7a4530" opacity="0.85"/><rect x="102" y="22" width="9" height="1.4" fill="#7a4530" opacity="0.85"/><rect x="102" y="25.5" width="9" height="1.4" fill="#7a4530" opacity="0.85"/><rect x="118" y="22" width="9" height="1.4" fill="#7a4530" opacity="0.85"/><rect x="118" y="25.5" width="9" height="1.4" fill="#7a4530" opacity="0.85"/></svg>
<div class="t" style="left:595px;top:229.8px;font-size:7.4px;color:#f4ece8;max-width:125px;overflow:hidden">Bassoons - Chasing Rhythms - 86 - c</div>
<svg style="left:902px;top:229px" width="154.0" height="43"><rect x="0" y="0" width="154.0" height="43" fill="#c98062"/><rect x="0" y="0" width="0.8" height="43" fill="#7a4530" opacity="0.5"/><polygon points="0,1 143,1 138,9 0,9" fill="#7a4530" opacity="0.6"/><line x1="0" y1="36.5" x2="154" y2="36.5" stroke="#7a4530" stroke-width="0.9" opacity="0.8"/><line x1="0" y1="42" x2="154" y2="42" stroke="#7a4530" stroke-width="1" opacity="0.7"/><polyline points="0,13.1 4,10.7 8,13.1 12,11.9 16,11.5 20,12.2 24,13.3 28,11.3 32,10.9 36,12.1 40,11.2 44,10.8 48,11.0 52,10.7 56,11.1 60,11.4 64,11.4 68,12.8 72,11.4 76,12.0 80,11.0 84,11.5 88,10.6 92,11.3 96,10.5 100,12.7 104,12.2 108,11.1 112,11.9 116,13.3 120,10.8 124,13.0 128,11.8 132,12.0 136,13.0 140,11.7 144,12.0 148,12.6 152,13.4" fill="none" stroke="#7a4530" stroke-width="0.7" opacity="0.75"/><rect x="6" y="22" width="9" height="1.4" fill="#7a4530" opacity="0.85"/><rect x="6" y="25.5" width="9" height="1.4" fill="#7a4530" opacity="0.85"/><rect x="22" y="22" width="9" height="1.4" fill="#7a4530" opacity="0.85"/><rect x="22" y="25.5" width="9" height="1.4" fill="#7a4530" opacity="0.85"/><rect x="38" y="22" width="9" height="1.4" fill="#7a4530" opacity="0.85"/><rect x="38" y="25.5" width="9" height="1.4" fill="#7a4530" opacity="0.85"/><rect x="54" y="22" width="9" height="1.4" fill="#7a4530" opacity="0.85"/><rect x="54" y="25.5" width="9" height="1.4" fill="#7a4530" opacity="0.85"/><rect x="70" y="22" width="9" height="1.4" fill="#7a4530" opacity="0.85"/><rect x="70" y="25.5" width="9" height="1.4" fill="#7a4530" opacity="0.85"/><rect x="86" y="22" width="9" height="1.4" fill="#7a4530" opacity="0.85"/><rect x="86" y="25.5" width="9" height="1.4" fill="#7a4530" opacity="0.85"/><rect x="102" y="22" width="9" height="1.4" fill="#7a4530" opacity="0.85"/><rect x="102" y="25.5" width="9" height="1.4" fill="#7a4530" opacity="0.85"/><rect x="118" y="22" width="9" height="1.4" fill="#7a4530" opacity="0.85"/><rect x="118" y="25.5" width="9" height="1.4" fill="#7a4530" opacity="0.85"/><rect x="134" y="22" width="9" height="1.4" fill="#7a4530" opacity="0.85"/><rect x="134" y="25.5" width="9" height="1.4" fill="#7a4530" opacity="0.85"/></svg>
<div class="t" style="left:904px;top:229.8px;font-size:7.4px;color:#f4ece8;max-width:151px;overflow:hidden">Bassoons - Cmhasing Rhythms - 86 - Cm</div>
<div class="a" style="left:424px;top:272px;width:14px;height:41px;background:rgba(60,50,45,0.45);"></div>
<svg style="left:424px;top:272px" width="168.0" height="42"><rect x="0" y="0" width="168.0" height="42" fill="#c8637b"/><rect x="0" y="0" width="0.8" height="42" fill="#7a3142" opacity="0.5"/><polygon points="14,1 54,1 49,9 14,9" fill="#7a3142" opacity="0.6"/><line x1="0" y1="35.5" x2="168" y2="35.5" stroke="#7a3142" stroke-width="0.9" opacity="0.8"/><line x1="0" y1="41" x2="168" y2="41" stroke="#7a3142" stroke-width="1" opacity="0.7"/><rect x="45" y="17" width="18" height="1.2" fill="#7a3142"/><rect x="45" y="19.5" width="18" height="1.2" fill="#7a3142"/><rect x="45" y="22" width="18" height="1.2" fill="#7a3142" opacity="0.7"/><rect x="94" y="17" width="18" height="1.2" fill="#7a3142"/><rect x="94" y="19.5" width="18" height="1.2" fill="#7a3142"/><rect x="94" y="22" width="18" height="1.2" fill="#7a3142" opacity="0.7"/><rect x="146" y="17" width="18" height="1.2" fill="#7a3142"/><rect x="146" y="19.5" width="18" height="1.2" fill="#7a3142"/><rect x="146" y="22" width="18" height="1.2" fill="#7a3142" opacity="0.7"/><polyline points="0,31.4 6,33.2 12,32.7 18,32.5 24,31.7 30,31.5 36,30.4 42,30.7 48,30.5 54,32.9 60,31.1 66,30.8 72,30.5 78,33.2 84,33.3 90,32.6 96,31.2 102,31.1 108,31.3 114,31.9 120,30.8 126,31.8 132,31.1 138,33.7 144,33.7 150,32.2 156,31.1 162,33.7 168,31.3" fill="none" stroke="#7a3142" stroke-width="0.7" opacity="0.6"/></svg>
<div class="t" style="left:440px;top:272.8px;font-size:7.4px;color:#f4ece8;max-width:165px;overflow:hidden">Trumpets</div>
<svg style="left:593px;top:272px" width="128.0" height="42"><rect x="0" y="0" width="128.0" height="42" fill="#c8637b"/><rect x="0" y="0" width="0.8" height="42" fill="#7a3142" opacity="0.5"/><polygon points="0,1 127,1 122,9 0,9" fill="#7a3142" opacity="0.6"/><line x1="0" y1="35.5" x2="128" y2="35.5" stroke="#7a3142" stroke-width="0.9" opacity="0.8"/><line x1="0" y1="41" x2="128" y2="41" stroke="#7a3142" stroke-width="1" opacity="0.7"/><polyline points="0,15.4 4,14.0 8,15.5 12,15.9 16,16.0 20,14.8 24,16.0 28,14.0 32,15.1 36,14.4 40,15.6 44,14.2 48,14.1 52,15.2 56,14.9 60,16.3 64,16.1 68,17.0 72,16.6 76,16.9 80,17.5 84,15.6 88,15.3 92,17.9 96,14.6 100,16.9 104,16.6 108,14.2 112,17.3 116,17.6 120,16.5 124,16.9 128,17.2" fill="none" stroke="#7a3142" stroke-width="0.7" opacity="0.7"/><rect x="6" y="18" width="8" height="1.3" fill="#7a3142"/><rect x="6" y="22" width="8" height="1.3" fill="#7a3142"/><rect x="19" y="18" width="8" height="1.3" fill="#7a3142"/><rect x="19" y="22" width="8" height="1.3" fill="#7a3142"/><rect x="32" y="18" width="8" height="1.3" fill="#7a3142"/><rect x="32" y="22" width="8" height="1.3" fill="#7a3142"/><rect x="45" y="18" width="8" height="1.3" fill="#7a3142"/><rect x="45" y="22" width="8" height="1.3" fill="#7a3142"/><rect x="58" y="18" width="8" height="1.3" fill="#7a3142"/><rect x="58" y="22" width="8" height="1.3" fill="#7a3142"/><rect x="71" y="18" width="8" height="1.3" fill="#7a3142"/><rect x="71" y="22" width="8" height="1.3" fill="#7a3142"/><rect x="84" y="18" width="8" height="1.3" fill="#7a3142"/><rect x="84" y="22" width="8" height="1.3" fill="#7a3142"/><rect x="97" y="18" width="8" height="1.3" fill="#7a3142"/><rect x="97" y="22" width="8" height="1.3" fill="#7a3142"/><rect x="110" y="18" width="8" height="1.3" fill="#7a3142"/><rect x="110" y="22" width="8" height="1.3" fill="#7a3142"/><rect x="4" y="32" width="5" height="1.3" fill="#7a3142"/><rect x="29" y="32" width="5" height="1.3" fill="#7a3142"/><rect x="54" y="32" width="5" height="1.3" fill="#7a3142"/><rect x="79" y="32" width="5" height="1.3" fill="#7a3142"/><rect x="104" y="32" width="5" height="1.3" fill="#7a3142"/></svg>
<div class="t" style="left:595px;top:272.8px;font-size:7.4px;color:#f4ece8;max-width:125px;overflow:hidden">Trumpets - Chasing Rhythms - 86 - c</div>
<svg style="left:902px;top:272px" width="154.0" height="42"><rect x="0" y="0" width="154.0" height="42" fill="#c8637b"/><rect x="0" y="0" width="0.8" height="42" fill="#7a3142" opacity="0.5"/><polygon points="0,1 143,1 138,9 0,9" fill="#7a3142" opacity="0.6"/><line x1="0" y1="35.5" x2="154" y2="35.5" stroke="#7a3142" stroke-width="0.9" opacity="0.8"/><line x1="0" y1="41" x2="154" y2="41" stroke="#7a3142" stroke-width="1" opacity="0.7"/><rect x="42" y="17" width="18" height="1.2" fill="#7a3142"/><rect x="42" y="19.5" width="18" height="1.2" fill="#7a3142"/><rect x="42" y="22" width="18" height="1.2" fill="#7a3142" opacity="0.7"/><rect x="87" y="17" width="18" height="1.2" fill="#7a3142"/><rect x="87" y="19.5" width="18" height="1.2" fill="#7a3142"/><rect x="87" y="22" width="18" height="1.2" fill="#7a3142" opacity="0.7"/><rect x="134" y="17" width="18" height="1.2" fill="#7a3142"/><rect x="134" y="19.5" width="18" height="1.2" fill="#7a3142"/><rect x="134" y="22" width="18" height="1.2" fill="#7a3142" opacity="0.7"/><polyline points="0,30.7 6,32.1 12,32.0 18,33.2 24,33.1 30,33.2 36,32.3 42,33.4 48,32.7 54,32.7 60,31.0 66,30.3 72,30.7 78,31.5 84,30.6 90,33.2 96,32.2 102,32.5 108,32.5 114,32.7 120,32.0 126,30.2 132,33.1 138,32.9 144,32.0 150,32.1" fill="none" stroke="#7a3142" stroke-width="0.7" opacity="0.6"/></svg>
<div class="t" style="left:904px;top:272.8px;font-size:7.4px;color:#f4ece8;max-width:151px;overflow:hidden">Trumpets - Cmhasing Rhythms - 86 - Cm</div>
<div class="a" style="left:424px;top:314px;width:14px;height:41px;background:rgba(60,50,45,0.45);"></div>
<svg style="left:438.4px;top:314px" width="153.6" height="42"><rect x="0" y="0" width="153.6" height="42" fill="#c8637b"/><rect x="0" y="0" width="0.8" height="42" fill="#7a3142" opacity="0.5"/><polygon points="0,1 44,1 39,9 0,9" fill="#7a3142" opacity="0.6"/><line x1="0" y1="35.5" x2="153.60000000000002" y2="35.5" stroke="#7a3142" stroke-width="0.9" opacity="0.8"/><line x1="0" y1="41" x2="153.60000000000002" y2="41" stroke="#7a3142" stroke-width="1" opacity="0.7"/><rect x="42" y="21.5" width="19" height="3" fill="#7a3142" opacity="0.8"/><rect x="87" y="21.5" width="19" height="3" fill="#7a3142" opacity="0.8"/><rect x="134" y="21.5" width="19" height="3" fill="#7a3142" opacity="0.8"/></svg>
<div class="t" style="left:440.4px;top:314.8px;font-size:7.4px;color:#f4ece8;max-width:151px;overflow:hidden">Trombones</div>
<svg style="left:902px;top:314px" width="154.0" height="42"><rect x="0" y="0" width="154.0" height="42" fill="#c8637b"/><rect x="0" y="0" width="0.8" height="42" fill="#7a3142" opacity="0.5"/><polygon points="0,1 147,1 142,9 0,9" fill="#7a3142" opacity="0.6"/><line x1="0" y1="35.5" x2="154" y2="35.5" stroke="#7a3142" stroke-width="0.9" opacity="0.8"/><line x1="0" y1="41" x2="154" y2="41" stroke="#7a3142" stroke-width="1" opacity="0.7"/><rect x="42" y="21.5" width="19" height="3" fill="#7a3142" opacity="0.8"/><rect x="87" y="21.5" width="19" height="3" fill="#7a3142" opacity="0.8"/><rect x="134" y="21.5" width="19" height="3" fill="#7a3142" opacity="0.8"/></svg>
<div class="t" style="left:904px;top:314.8px;font-size:7.4px;color:#f4ece8;max-width:151px;overflow:hidden">Trombones - Cmhasing Rhythms - 86 - Cm</div>
<div class="a" style="left:424px;top:356px;width:14px;height:41px;background:rgba(60,50,45,0.45);"></div>
<svg style="left:424px;top:356px" width="14.0" height="42"><rect x="0" y="0" width="14.0" height="42" fill="#c8637b"/><rect x="0" y="0" width="0.8" height="42" fill="#7a3142" opacity="0.5"/><polygon points="0,1 13,1 8,9 0,9" fill="#7a3142" opacity="0.6"/><line x1="0" y1="35.5" x2="14" y2="35.5" stroke="#7a3142" stroke-width="0.9" opacity="0.8"/><line x1="0" y1="41" x2="14" y2="41" stroke="#7a3142" stroke-width="1" opacity="0.7"/><polyline points="0,13.7 3,11.1 6,14.0 9,11.9 12,11.1" fill="none" stroke="#7a3142" stroke-width="0.7" opacity="0.6"/><rect x="2" y="19" width="10" height="1.3" fill="#7a3142"/><rect x="2" y="22" width="10" height="1.3" fill="#7a3142"/></svg>
<div class="t" style="left:426px;top:356.8px;font-size:7.4px;color:#f4ece8;max-width:11px;overflow:hidden">c</div>
<svg style="left:438.4px;top:356px" width="153.6" height="42"><rect x="0" y="0" width="153.6" height="42" fill="#c8637b"/><rect x="0" y="0" width="0.8" height="42" fill="#7a3142" opacity="0.5"/><polygon points="0,1 150,1 145,9 0,9" fill="#7a3142" opacity="0.6"/><line x1="0" y1="35.5" x2="153.60000000000002" y2="35.5" stroke="#7a3142" stroke-width="0.9" opacity="0.8"/><line x1="0" y1="41" x2="153.60000000000002" y2="41" stroke="#7a3142" stroke-width="1" opacity="0.7"/><polyline points="0,11.8 3,14.1 6,11.8 9,13.7 12,12.8 15,14.5 18,11.1 21,14.8 24,12.1 27,11.0 30,13.6 33,11.7 36,13.4 39,12.3 42,13.7 45,13.8 48,13.5 51,11.4 54,12.9 57,12.9 60,15.1 63,11.2 66,11.8 69,13.0 72,13.9 75,12.1 78,12.8 81,14.2 84,15.2 87,13.2 90,12.2 93,11.2 96,12.9 99,12.1 102,11.1 105,13.0 108,15.2 111,15.2 114,12.5 117,14.8 120,14.9 123,11.1 126,11.2 129,14.1 132,12.0 135,12.4 138,13.5 141,13.6 144,12.0 147,11.3 150,12.4 153,13.0" fill="none" stroke="#7a3142" stroke-width="0.7" opacity="0.6"/><rect x="2" y="19" width="10" height="1.3" fill="#7a3142"/><rect x="2" y="22" width="10" height="1.3" fill="#7a3142"/><rect x="15" y="19" width="10" height="1.3" fill="#7a3142"/><rect x="15" y="22" width="10" height="1.3" fill="#7a3142"/><rect x="28" y="21" width="10" height="1.3" fill="#7a3142"/><rect x="28" y="24" width="10" height="1.3" fill="#7a3142"/><rect x="41" y="21" width="10" height="1.3" fill="#7a3142"/><rect x="41" y="24" width="10" height="1.3" fill="#7a3142"/><rect x="54" y="21" width="10" height="1.3" fill="#7a3142"/><rect x="54" y="24" width="10" height="1.3" fill="#7a3142"/><rect x="67" y="19" width="10" height="1.3" fill="#7a3142"/><rect x="67" y="22" width="10" height="1.3" fill="#7a3142"/><rect x="80" y="23" width="10" height="1.3" fill="#7a3142"/><rect x="80" y="26" width="10" height="1.3" fill="#7a3142"/><rect x="93" y="19" width="10" height="1.3" fill="#7a3142"/><rect x="93" y="22" width="10" height="1.3" fill="#7a3142"/><rect x="106" y="19" width="10" height="1.3" fill="#7a3142"/><rect x="106" y="22" width="10" height="1.3" fill="#7a3142"/><rect x="119" y="19" width="10" height="1.3" fill="#7a3142"/><rect x="119" y="22" width="10" height="1.3" fill="#7a3142"/><rect x="132" y="23" width="10" height="1.3" fill="#7a3142"/><rect x="132" y="26" width="10" height="1.3" fill="#7a3142"/></svg>
<div class="t" style="left:440.4px;top:356.8px;font-size:7.4px;color:#f4ece8;max-width:151px;overflow:hidden">French Horns - Chasing Rhythms - 86 - c</div>
<svg style="left:593px;top:356px" width="128.0" height="42"><rect x="0" y="0" width="128.0" height="42" fill="#c8637b"/><rect x="0" y="0" width="0.8" height="42" fill="#7a3142" opacity="0.5"/><polygon points="0,1 127,1 122,9 0,9" fill="#7a3142" opacity="0.6"/><line x1="0" y1="35.5" x2="128" y2="35.5" stroke="#7a3142" stroke-width="0.9" opacity="0.8"/><line x1="0" y1="41" x2="128" y2="41" stroke="#7a3142" stroke-width="1" opacity="0.7"/><polyline points="0,11.4 3,12.3 6,12.2 9,14.5 12,10.8 15,14.1 18,14.5 21,11.3 24,14.9 27,13.9 30,14.8 33,12.1 36,12.4 39,12.5 42,15.2 45,13.4 48,12.4 51,12.7 54,12.0 57,11.0 60,11.2 63,14.5 66,12.1 69,14.9 72,11.9 75,12.0 78,13.0 81,11.6 84,12.4 87,15.0 90,14.7 93,14.4 96,13.6 99,14.8 102,14.9 105,13.2 108,14.0 111,11.0 114,14.0 117,12.8 120,14.1 123,13.6 126,12.1" fill="none" stroke="#7a3142" stroke-width="0.7" opacity="0.6"/><rect x="2" y="21" width="10" height="1.3" fill="#7a3142"/><rect x="2" y="24" width="10" height="1.3" fill="#7a3142"/><rect x="15" y="23" width="10" height="1.3" fill="#7a3142"/><rect x="15" y="26" width="10" height="1.3" fill="#7a3142"/><rect x="28" y="21" width="10" height="1.3" fill="#7a3142"/><rect x="28" y="24" width="10" height="1.3" fill="#7a3142"/><rect x="41" y="21" width="10" height="1.3" fill="#7a3142"/><rect x="41" y="24" width="10" height="1.3" fill="#7a3142"/><rect x="54" y="19" width="10" height="1.3" fill="#7a3142"/><rect x="54" y="22" width="10" height="1.3" fill="#7a3142"/><rect x="67" y="19" width="10" height="1.3" fill="#7a3142"/><rect x="67" y="22" width="10" height="1.3" fill="#7a3142"/><rect x="80" y="19" width="10" height="1.3" fill="#7a3142"/><rect x="80" y="22" width="10" height="1.3" fill="#7a3142"/><rect x="93" y="19" width="10" height="1.3" fill="#7a3142"/><rect x="93" y="22" width="10" height="1.3" fill="#7a3142"/><rect x="106" y="19" width="10" height="1.3" fill="#7a3142"/><rect x="106" y="22" width="10" height="1.3" fill="#7a3142"/></svg>
<div class="t" style="left:595px;top:356.8px;font-size:7.4px;color:#f4ece8;max-width:125px;overflow:hidden">French Horns - Chasing Rhythms - 86</div>
<svg style="left:902px;top:356px" width="154.0" height="42"><rect x="0" y="0" width="154.0" height="42" fill="#c8637b"/><rect x="0" y="0" width="0.8" height="42" fill="#7a3142" opacity="0.5"/><polygon points="0,1 153,1 148,9 0,9" fill="#7a3142" opacity="0.6"/><line x1="0" y1="35.5" x2="154" y2="35.5" stroke="#7a3142" stroke-width="0.9" opacity="0.8"/><line x1="0" y1="41" x2="154" y2="41" stroke="#7a3142" stroke-width="1" opacity="0.7"/><polyline points="0,11.9 3,14.1 6,13.7 9,12.6 12,11.9 15,12.9 18,13.7 21,11.3 24,13.6 27,11.1 30,13.0 33,14.4 36,13.2 39,12.8 42,12.3 45,14.1 48,12.7 51,13.2 54,11.9 57,11.6 60,13.2 63,12.2 66,12.4 69,14.4 72,11.7 75,10.9 78,14.6 81,12.5 84,14.1 87,11.7 90,12.0 93,14.1 96,13.0 99,13.3 102,12.4 105,13.8 108,13.1 111,14.3 114,14.5 117,11.2 120,14.7 123,12.5 126,13.6 129,12.7 132,12.2 135,14.4 138,15.1 141,11.4 144,12.7 147,14.2 150,14.3 153,15.1" fill="none" stroke="#7a3142" stroke-width="0.7" opacity="0.6"/><rect x="2" y="19" width="10" height="1.3" fill="#7a3142"/><rect x="2" y="22" width="10" height="1.3" fill="#7a3142"/><rect x="15" y="21" width="10" height="1.3" fill="#7a3142"/><rect x="15" y="24" width="10" height="1.3" fill="#7a3142"/><rect x="28" y="21" width="10" height="1.3" fill="#7a3142"/><rect x="28" y="24" width="10" height="1.3" fill="#7a3142"/><rect x="41" y="19" width="10" height="1.3" fill="#7a3142"/><rect x="41" y="22" width="10" height="1.3" fill="#7a3142"/><rect x="54" y="23" width="10" height="1.3" fill="#7a3142"/><rect x="54" y="26" width="10" height="1.3" fill="#7a3142"/><rect x="67" y="19" width="10" height="1.3" fill="#7a3142"/><rect x="67" y="22" width="10" height="1.3" fill="#7a3142"/><rect x="80" y="19" width="10" height="1.3" fill="#7a3142"/><rect x="80" y="22" width="10" height="1.3" fill="#7a3142"/><rect x="93" y="21" width="10" height="1.3" fill="#7a3142"/><rect x="93" y="24" width="10" height="1.3" fill="#7a3142"/><rect x="106" y="21" width="10" height="1.3" fill="#7a3142"/><rect x="106" y="24" width="10" height="1.3" fill="#7a3142"/><rect x="119" y="21" width="10" height="1.3" fill="#7a3142"/><rect x="119" y="24" width="10" height="1.3" fill="#7a3142"/><rect x="132" y="21" width="10" height="1.3" fill="#7a3142"/><rect x="132" y="24" width="10" height="1.3" fill="#7a3142"/></svg>
<div class="t" style="left:904px;top:356.8px;font-size:7.4px;color:#f4ece8;max-width:151px;overflow:hidden">French Horns - Cmhasing Rhythms - 86 - Cm</div>
<div class="a" style="left:424px;top:398px;width:14px;height:41px;background:rgba(60,50,45,0.45);"></div>
<svg style="left:424px;top:398px" width="14.0" height="42"><rect x="0" y="0" width="14.0" height="42" fill="#3d958b"/><rect x="0" y="0" width="0.8" height="42" fill="#1d5650" opacity="0.5"/><line x1="0" y1="35.5" x2="14" y2="35.5" stroke="#1d5650" stroke-width="0.9" opacity="0.8"/><line x1="0" y1="41" x2="14" y2="41" stroke="#1d5650" stroke-width="1" opacity="0.7"/><polyline points="0,13.9 4,18.8 8,13.7 12,18.0" fill="none" stroke="#1d5650" stroke-width="0.7" opacity="0.6"/></svg>
<svg style="left:593px;top:398px" width="128.0" height="42"><rect x="0" y="0" width="128.0" height="42" fill="#3d958b"/><rect x="0" y="0" width="0.8" height="42" fill="#1d5650" opacity="0.5"/><polygon points="0,1 127,1 122,9 0,9" fill="#1d5650" opacity="0.6"/><line x1="0" y1="35.5" x2="128" y2="35.5" stroke="#1d5650" stroke-width="0.9" opacity="0.8"/><line x1="0" y1="41" x2="128" y2="41" stroke="#1d5650" stroke-width="1" opacity="0.7"/><polyline points="0,22.8 7,24.9 14,25.5 21,14.2 28,23.9 35,13.0 42,14.8 49,21.0 56,13.5 63,23.0 70,26.5 77,21.8 84,20.4 91,19.1 98,23.7 105,14.4 112,17.2 119,26.2 126,15.7" fill="none" stroke="#1d5650" stroke-width="0.7" opacity="0.7"/><rect x="0" y="23" width="16" height="1.2" fill="#e8f4f0"/><rect x="44" y="19" width="8" height="1.2" fill="#e8f4f0"/><rect x="55" y="24" width="5" height="1.2" fill="#e8f4f0"/><rect x="96" y="16" width="9" height="1.2" fill="#e8f4f0"/></svg>
<div class="t" style="left:595px;top:398.8px;font-size:7.4px;color:#f4ece8;max-width:125px;overflow:hidden">Timpani - Chasing Rhythms - 86 - c</div>
<div class="a" style="left:424px;top:440px;width:14px;height:42px;background:rgba(60,50,45,0.45);"></div>
<svg style="left:438.4px;top:440px" width="153.6" height="43"><rect x="0" y="0" width="153.6" height="43" fill="#4c9675"/><rect x="0" y="0" width="0.8" height="43" fill="#245a40" opacity="0.5"/><polygon points="0,1 55,1 50,9 0,9" fill="#245a40" opacity="0.6"/><line x1="0" y1="36.5" x2="153.60000000000002" y2="36.5" stroke="#245a40" stroke-width="0.9" opacity="0.8"/><line x1="0" y1="42" x2="153.60000000000002" y2="42" stroke="#245a40" stroke-width="1" opacity="0.7"/><polyline points="0,11.6 5,12.5 10,11.2 15,12.1 20,12.8 25,11.6 30,11.7 35,12.5 40,11.6 45,12.0 50,12.1 55,11.2 60,11.9 65,12.2 70,11.3 75,11.5 80,12.6 85,12.2 90,11.3 95,11.6 100,11.9 105,11.8 110,12.0 115,12.3 120,12.3 125,11.8 130,11.8 135,11.2 140,11.7 145,12.6 150,11.3" fill="none" stroke="#245a40" stroke-width="0.7" opacity="0.5"/><rect x="0.5" y="15.6" width="1.3" height="1" fill="#245a40" opacity="0.9"/><rect x="4.8" y="15.6" width="1.3" height="1" fill="#245a40" opacity="0.9"/><rect x="8.5" y="15.8" width="1.3" height="1" fill="#245a40" opacity="0.9"/><rect x="12.9" y="15.3" width="1.3" height="1" fill="#245a40" opacity="0.9"/><rect x="16.6" y="16.8" width="1.3" height="1" fill="#245a40" opacity="0.9"/><rect x="20.9" y="16.5" width="1.3" height="1" fill="#245a40" opacity="0.9"/><rect x="24.9" y="15.2" width="1.3" height="1" fill="#245a40" opacity="0.9"/><rect x="28.6" y="17.8" width="1.3" height="1" fill="#245a40" opacity="0.9"/><rect x="32.1" y="15.1" width="1.3" height="1" fill="#245a40" opacity="0.9"/><rect x="36.6" y="16.2" width="1.3" height="1" fill="#245a40" opacity="0.9"/><rect x="40.7" y="15.6" width="1.3" height="1" fill="#245a40" opacity="0.9"/><rect x="44.4" y="17.1" width="1.3" height="1" fill="#245a40" opacity="0.9"/><rect x="48.3" y="15.3" width="1.3" height="1" fill="#245a40" opacity="0.9"/><rect x="52.1" y="15.5" width="1.3" height="1" fill="#245a40" opacity="0.9"/><rect x="56.2" y="17.0" width="1.3" height="1" fill="#245a40" opacity="0.9"/><rect x="60.5" y="16.4" width="1.3" height="1" fill="#245a40" opacity="0.9"/><rect x="64.3" y="17.2" width="1.3" height="1" fill="#245a40" opacity="0.9"/><rect x="68.8" y="18.0" width="1.3" height="1" fill="#245a40" opacity="0.9"/><rect x="72.4" y="15.3" width="1.3" height="1" fill="#245a40" opacity="0.9"/><rect x="76.1" y="15.2" width="1.3" height="1" fill="#245a40" opacity="0.9"/><rect x="80.4" y="17.7" width="1.3" height="1" fill="#245a40" opacity="0.9"/><rect x="84.6" y="17.3" width="1.3" height="1" fill="#245a40" opacity="0.9"/><rect x="88.4" y="17.3" width="1.3" height="1" fill="#245a40" opacity="0.9"/><rect x="92.3" y="17.4" width="1.3" height="1" fill="#245a40" opacity="0.9"/><rect x="96.1" y="17.1" width="1.3" height="1" fill="#245a40" opacity="0.9"/><rect x="100.2" y="16.6" width="1.3" height="1" fill="#245a40" opacity="0.9"/><rect x="104.4" y="16.0" width="1.3" height="1" fill="#245a40" opacity="0.9"/><rect x="108.7" y="16.4" width="1.3" height="1" fill="#245a40" opacity="0.9"/><rect x="112.6" y="15.7" width="1.3" height="1" fill="#245a40" opacity="0.9"/><rect x="116.6" y="16.2" width="1.3" height="1" fill="#245a40" opacity="0.9"/><rect x="120.4" y="16.4" width="1.3" height="1" fill="#245a40" opacity="0.9"/><rect x="124.8" y="15.2" width="1.3" height="1" fill="#245a40" opacity="0.9"/><rect x="128.2" y="15.2" width="1.3" height="1" fill="#245a40" opacity="0.9"/><rect x="132.6" y="16.1" width="1.3" height="1" fill="#245a40" opacity="0.9"/><rect x="136.3" y="17.9" width="1.3" height="1" fill="#245a40" opacity="0.9"/><rect x="140.0" y="17.2" width="1.3" height="1" fill="#245a40" opacity="0.9"/><rect x="144.7" y="17.8" width="1.3" height="1" fill="#245a40" opacity="0.9"/><rect x="148.3" y="17.2" width="1.3" height="1" fill="#245a40" opacity="0.9"/></svg>
<div class="t" style="left:440.4px;top:440.8px;font-size:7.4px;color:#f4ece8;max-width:151px;overflow:hidden">Glockenspiel</div>
<svg style="left:902px;top:440px" width="154.0" height="43"><rect x="0" y="0" width="154.0" height="43" fill="#4c9675"/><rect x="0" y="0" width="0.8" height="43" fill="#245a40" opacity="0.5"/><polygon points="0,1 153,1 148,9 0,9" fill="#245a40" opacity="0.6"/><line x1="0" y1="36.5" x2="154" y2="36.5" stroke="#245a40" stroke-width="0.9" opacity="0.8"/><line x1="0" y1="42" x2="154" y2="42" stroke="#245a40" stroke-width="1" opacity="0.7"/><polyline points="0,12.2 5,12.5 10,12.7 15,11.3 20,12.5 25,11.4 30,12.3 35,11.9 40,12.4 45,12.5 50,12.7 55,12.5 60,11.4 65,12.0 70,11.2 75,12.7 80,11.7 85,12.3 90,11.4 95,11.6 100,12.6 105,11.9 110,12.5 115,12.2 120,12.0 125,11.8 130,11.5 135,11.9 140,12.2 145,12.0 150,12.1" fill="none" stroke="#245a40" stroke-width="0.7" opacity="0.5"/><rect x="0.2" y="16.3" width="1.3" height="1" fill="#245a40" opacity="0.9"/><rect x="4.1" y="15.2" width="1.3" height="1" fill="#245a40" opacity="0.9"/><rect x="8.6" y="15.6" width="1.3" height="1" fill="#245a40" opacity="0.9"/><rect x="12.4" y="18.0" width="1.3" height="1" fill="#245a40" opacity="0.9"/><rect x="17.0" y="15.5" width="1.3" height="1" fill="#245a40" opacity="0.9"/><rect x="20.1" y="16.4" width="1.3" height="1" fill="#245a40" opacity="0.9"/><rect x="24.9" y="15.7" width="1.3" height="1" fill="#245a40" opacity="0.9"/><rect x="28.5" y="17.3" width="1.3" height="1" fill="#245a40" opacity="0.9"/><rect x="32.8" y="17.3" width="1.3" height="1" fill="#245a40" opacity="0.9"/><rect x="36.3" y="15.8" width="1.3" height="1" fill="#245a40" opacity="0.9"/><rect x="40.3" y="15.8" width="1.3" height="1" fill="#245a40" opacity="0.9"/><rect x="44.3" y="16.3" width="1.3" height="1" fill="#245a40" opacity="0.9"/><rect x="48.2" y="15.7" width="1.3" height="1" fill="#245a40" opacity="0.9"/><rect x="52.3" y="17.7" width="1.3" height="1" fill="#245a40" opacity="0.9"/><rect x="56.2" y="15.2" width="1.3" height="1" fill="#245a40" opacity="0.9"/><rect x="60.3" y="15.7" width="1.3" height="1" fill="#245a40" opacity="0.9"/><rect x="64.5" y="16.9" width="1.3" height="1" fill="#245a40" opacity="0.9"/><rect x="68.1" y="16.4" width="1.3" height="1" fill="#245a40" opacity="0.9"/><rect x="72.0" y="15.0" width="1.3" height="1" fill="#245a40" opacity="0.9"/><rect x="76.9" y="15.7" width="1.3" height="1" fill="#245a40" opacity="0.9"/><rect x="80.4" y="16.1" width="1.3" height="1" fill="#245a40" opacity="0.9"/><rect x="84.9" y="15.7" width="1.3" height="1" fill="#245a40" opacity="0.9"/><rect x="88.1" y="16.8" width="1.3" height="1" fill="#245a40" opacity="0.9"/><rect x="92.8" y="15.6" width="1.3" height="1" fill="#245a40" opacity="0.9"/><rect x="96.1" y="16.5" width="1.3" height="1" fill="#245a40" opacity="0.9"/><rect x="100.2" y="16.8" width="1.3" height="1" fill="#245a40" opacity="0.9"/><rect x="104.8" y="17.0" width="1.3" height="1" fill="#245a40" opacity="0.9"/><rect x="108.0" y="16.9" width="1.3" height="1" fill="#245a40" opacity="0.9"/><rect x="112.7" y="16.0" width="1.3" height="1" fill="#245a40" opacity="0.9"/><rect x="116.0" y="16.0" width="1.3" height="1" fill="#245a40" opacity="0.9"/><rect x="120.0" y="18.0" width="1.3" height="1" fill="#245a40" opacity="0.9"/><rect x="124.0" y="17.2" width="1.3" height="1" fill="#245a40" opacity="0.9"/><rect x="128.9" y="17.4" width="1.3" height="1" fill="#245a40" opacity="0.9"/><rect x="132.8" y="16.2" width="1.3" height="1" fill="#245a40" opacity="0.9"/><rect x="136.4" y="16.9" width="1.3" height="1" fill="#245a40" opacity="0.9"/><rect x="140.1" y="15.1" width="1.3" height="1" fill="#245a40" opacity="0.9"/><rect x="144.5" y="16.5" width="1.3" height="1" fill="#245a40" opacity="0.9"/><rect x="148.4" y="17.4" width="1.3" height="1" fill="#245a40" opacity="0.9"/></svg>
<div class="t" style="left:904px;top:440.8px;font-size:7.4px;color:#f4ece8;max-width:151px;overflow:hidden">Glockenspiel - Cmhasing Rhythms - 86 - Cm</div>
<div class="a" style="left:424px;top:483px;width:14px;height:41px;background:rgba(60,50,45,0.45);"></div>
<svg style="left:424px;top:483px" width="168.0" height="42"><rect x="0" y="0" width="168.0" height="42" fill="#3e8a6a"/><rect x="0" y="0" width="0.8" height="42" fill="#20553d" opacity="0.5"/><polygon points="14,1 40,1 35,9 14,9" fill="#20553d" opacity="0.6"/><line x1="0" y1="35.5" x2="168" y2="35.5" stroke="#20553d" stroke-width="0.9" opacity="0.8"/><line x1="0" y1="41" x2="168" y2="41" stroke="#20553d" stroke-width="1" opacity="0.7"/><polyline points="0,33.0 6,33.0 12,33.0 18,33.0 24,33.0 30,33.0 36,33.0 42,33.0 48,33.0 54,33.0 54,26.0 60,26.0 66,26.0 66,26.0 72,26.0 78,26.0 84,26.0 90,26.0 96,26.0 102,26.0 108,26.0 108,33.0 114,33.0 120,33.0 126,33.0 132,33.0 138,33.0 138,33.0 144,33.0 150,33.0 156,33.0 156,26.0 162,26.0 168,26.0" fill="none" stroke="#20553d" stroke-width="0.6" opacity="0.6"/><path d="M8 18 L19 17.5 M8 20.5 L19 20" stroke="#e8f0ea" stroke-width="0.9" opacity="0.85"/><path d="M27 18 L38 17.5 M27 20.5 L38 20" stroke="#e8f0ea" stroke-width="0.9" opacity="0.85"/><path d="M46 15 L57 14.5 M46 17.5 L57 17" stroke="#e8f0ea" stroke-width="0.9" opacity="0.85"/><path d="M65 20 L76 19.5 M65 22.5 L76 22" stroke="#e8f0ea" stroke-width="0.9" opacity="0.85"/><path d="M84 15 L95 14.5 M84 17.5 L95 17" stroke="#e8f0ea" stroke-width="0.9" opacity="0.85"/><path d="M103 15 L114 14.5 M103 17.5 L114 17" stroke="#e8f0ea" stroke-width="0.9" opacity="0.85"/><path d="M122 15 L133 14.5 M122 17.5 L133 17" stroke="#e8f0ea" stroke-width="0.9" opacity="0.85"/><path d="M141 18 L152 17.5 M141 20.5 L152 20" stroke="#e8f0ea" stroke-width="0.9" opacity="0.85"/></svg>
<div class="t" style="left:440px;top:483.8px;font-size:7.4px;color:#f4ece8;max-width:165px;overflow:hidden">Harp</div>
<svg style="left:593px;top:483px" width="154.0" height="42"><rect x="0" y="0" width="154.0" height="42" fill="#3e8a6a"/><rect x="0" y="0" width="0.8" height="42" fill="#20553d" opacity="0.5"/><polygon points="0,1 122,1 117,9 0,9" fill="#20553d" opacity="0.6"/><line x1="0" y1="35.5" x2="154" y2="35.5" stroke="#20553d" stroke-width="0.9" opacity="0.8"/><line x1="0" y1="41" x2="154" y2="41" stroke="#20553d" stroke-width="1" opacity="0.7"/><polyline points="0,33.0 6,33.0 12,33.0 18,33.0 24,33.0 30,33.0 36,33.0 42,33.0 48,33.0 48,23.0 54,23.0 54,33.0 60,33.0 66,33.0 72,33.0 78,33.0 84,33.0 90,33.0 96,33.0 102,33.0 102,33.0 108,33.0 114,33.0 120,33.0 126,33.0 132,33.0 138,33.0 138,33.0 144,33.0 150,33.0" fill="none" stroke="#20553d" stroke-width="0.6" opacity="0.6"/><path d="M8 18 L19 17.5 M8 20.5 L19 20" stroke="#e8f0ea" stroke-width="0.9" opacity="0.85"/><path d="M27 20 L38 19.5 M27 22.5 L38 22" stroke="#e8f0ea" stroke-width="0.9" opacity="0.85"/><path d="M46 18 L57 17.5 M46 20.5 L57 20" stroke="#e8f0ea" stroke-width="0.9" opacity="0.85"/><path d="M65 20 L76 19.5 M65 22.5 L76 22" stroke="#e8f0ea" stroke-width="0.9" opacity="0.85"/><path d="M84 20 L95 19.5 M84 22.5 L95 22" stroke="#e8f0ea" stroke-width="0.9" opacity="0.85"/><path d="M103 18 L114 17.5 M103 20.5 L114 20" stroke="#e8f0ea" stroke-width="0.9" opacity="0.85"/><path d="M122 20 L133 19.5 M122 22.5 L133 22" stroke="#e8f0ea" stroke-width="0.9" opacity="0.85"/><path d="M141 18 L152 17.5 M141 20.5 L152 20" stroke="#e8f0ea" stroke-width="0.9" opacity="0.85"/></svg>
<div class="t" style="left:595px;top:483.8px;font-size:7.4px;color:#f4ece8;max-width:151px;overflow:hidden">Harp - Chasing Rhythms - 86 - c</div>
<svg style="left:748px;top:483px" width="153.0" height="42"><rect x="0" y="0" width="153.0" height="42" fill="#3e8a6a"/><rect x="0" y="0" width="0.8" height="42" fill="#20553d" opacity="0.5"/><polygon points="0,1 122,1 117,9 0,9" fill="#20553d" opacity="0.6"/><line x1="0" y1="35.5" x2="153" y2="35.5" stroke="#20553d" stroke-width="0.9" opacity="0.8"/><line x1="0" y1="41" x2="153" y2="41" stroke="#20553d" stroke-width="1" opacity="0.7"/><polyline points="0,33.0 6,33.0 12,33.0 18,33.0 24,33.0 30,33.0 36,33.0 36,23.0 42,23.0 48,23.0 54,23.0 60,23.0 66,23.0 72,23.0 78,23.0 84,23.0 84,26.0 90,26.0 96,26.0 96,23.0 102,23.0 108,23.0 114,23.0 114,33.0 120,33.0 120,26.0 126,26.0 132,26.0 138,26.0 138,23.0 144,23.0 150,23.0" fill="none" stroke="#20553d" stroke-width="0.6" opacity="0.6"/><path d="M8 15 L19 14.5 M8 17.5 L19 17" stroke="#e8f0ea" stroke-width="0.9" opacity="0.85"/><path d="M27 15 L38 14.5 M27 17.5 L38 17" stroke="#e8f0ea" stroke-width="0.9" opacity="0.85"/><path d="M46 20 L57 19.5 M46 22.5 L57 22" stroke="#e8f0ea" stroke-width="0.9" opacity="0.85"/><path d="M65 20 L76 19.5 M65 22.5 L76 22" stroke="#e8f0ea" stroke-width="0.9" opacity="0.85"/><path d="M84 20 L95 19.5 M84 22.5 L95 22" stroke="#e8f0ea" stroke-width="0.9" opacity="0.85"/><path d="M103 15 L114 14.5 M103 17.5 L114 17" stroke="#e8f0ea" stroke-width="0.9" opacity="0.85"/><path d="M122 15 L133 14.5 M122 17.5 L133 17" stroke="#e8f0ea" stroke-width="0.9" opacity="0.85"/><path d="M141 15 L152 14.5 M141 17.5 L152 17" stroke="#e8f0ea" stroke-width="0.9" opacity="0.85"/></svg>
<div class="t" style="left:750px;top:483.8px;font-size:7.4px;color:#f4ece8;max-width:150px;overflow:hidden">Harp - Chasing Rhythms - 86 - c</div>
<svg style="left:902px;top:483px" width="154.0" height="42"><rect x="0" y="0" width="154.0" height="42" fill="#3e8a6a"/><rect x="0" y="0" width="0.8" height="42" fill="#20553d" opacity="0.5"/><polygon points="0,1 129,1 124,9 0,9" fill="#20553d" opacity="0.6"/><line x1="0" y1="35.5" x2="154" y2="35.5" stroke="#20553d" stroke-width="0.9" opacity="0.8"/><line x1="0" y1="41" x2="154" y2="41" stroke="#20553d" stroke-width="1" opacity="0.7"/><polyline points="0,33.0 6,33.0 12,33.0 18,33.0 24,33.0 30,33.0 36,33.0 42,33.0 42,26.0 48,26.0 54,26.0 60,26.0 66,26.0 72,26.0 78,26.0 84,26.0 90,26.0 96,26.0 102,26.0 108,26.0 114,26.0 120,26.0 126,26.0 132,26.0 138,26.0 144,26.0 150,26.0" fill="none" stroke="#20553d" stroke-width="0.6" opacity="0.6"/><path d="M8 18 L19 17.5 M8 20.5 L19 20" stroke="#e8f0ea" stroke-width="0.9" opacity="0.85"/><path d="M27 15 L38 14.5 M27 17.5 L38 17" stroke="#e8f0ea" stroke-width="0.9" opacity="0.85"/><path d="M46 18 L57 17.5 M46 20.5 L57 20" stroke="#e8f0ea" stroke-width="0.9" opacity="0.85"/><path d="M65 15 L76 14.5 M65 17.5 L76 17" stroke="#e8f0ea" stroke-width="0.9" opacity="0.85"/><path d="M84 20 L95 19.5 M84 22.5 L95 22" stroke="#e8f0ea" stroke-width="0.9" opacity="0.85"/><path d="M103 15 L114 14.5 M103 17.5 L114 17" stroke="#e8f0ea" stroke-width="0.9" opacity="0.85"/><path d="M122 20 L133 19.5 M122 22.5 L133 22" stroke="#e8f0ea" stroke-width="0.9" opacity="0.85"/><path d="M141 18 L152 17.5 M141 20.5 L152 20" stroke="#e8f0ea" stroke-width="0.9" opacity="0.85"/></svg>
<div class="t" style="left:904px;top:483.8px;font-size:7.4px;color:#f4ece8;max-width:151px;overflow:hidden">Harp - Cmhasing Rhythms - 86 - Cm</div>
<div class="a" style="left:424px;top:525px;width:14px;height:41px;background:rgba(60,50,45,0.45);"></div>
<svg style="left:424px;top:525px" width="168.0" height="42"><rect x="0" y="0" width="168.0" height="42" fill="#4796d0"/><rect x="0" y="0" width="0.8" height="42" fill="#24609a" opacity="0.5"/><polygon points="14,1 51,1 46,9 14,9" fill="#24609a" opacity="0.6"/><line x1="0" y1="35.5" x2="168" y2="35.5" stroke="#24609a" stroke-width="0.9" opacity="0.8"/><line x1="0" y1="41" x2="168" y2="41" stroke="#24609a" stroke-width="1" opacity="0.7"/><line x1="0" y1="26" x2="168" y2="26" stroke="#24609a" stroke-width="0.6" opacity="0.5"/><line x1="0" y1="31" x2="168" y2="31" stroke="#24609a" stroke-width="0.6" opacity="0.5"/><polyline points="0,15.1 4,13.9 8,14.1 12,14.5 16,15.0 20,13.4 24,14.1 28,14.9 32,14.6 36,13.7 40,13.7 44,13.7 48,13.2 52,13.6 56,13.0 60,13.4 64,14.3 68,15.1 72,13.5 76,14.0 80,13.5 84,15.1 88,14.9 92,15.0 96,14.9 100,14.6 104,14.6 108,13.3 112,13.5 116,14.3 120,13.8 124,13.7 128,12.9 132,14.0 136,14.3 140,12.9 144,12.9 148,14.2 152,13.5 156,14.1 160,14.1 164,13.8 168,13.5" fill="none" stroke="#24609a" stroke-width="0.7" opacity="0.5"/><rect x="0.1" y="18.1" width="1.3" height="1" fill="#24609a" opacity="0.9"/><rect x="3.8" y="17.5" width="1.3" height="1" fill="#24609a" opacity="0.9"/><rect x="6.0" y="19.4" width="1.3" height="1" fill="#24609a" opacity="0.9"/><rect x="9.7" y="18.4" width="1.3" height="1" fill="#24609a" opacity="0.9"/><rect x="12.1" y="17.4" width="1.3" height="1" fill="#24609a" opacity="0.9"/><rect x="15.7" y="17.8" width="1.3" height="1" fill="#24609a" opacity="0.9"/><rect x="18.8" y="19.9" width="1.3" height="1" fill="#24609a" opacity="0.9"/><rect x="21.1" y="19.5" width="1.3" height="1" fill="#24609a" opacity="0.9"/><rect x="24.9" y="18.8" width="1.3" height="1" fill="#24609a" opacity="0.9"/><rect x="27.6" y="18.8" width="1.3" height="1" fill="#24609a" opacity="0.9"/><rect x="30.5" y="18.5" width="1.3" height="1" fill="#24609a" opacity="0.9"/><rect x="33.2" y="17.0" width="1.3" height="1" fill="#24609a" opacity="0.9"/><rect x="36.1" y="17.1" width="1.3" height="1" fill="#24609a" opacity="0.9"/><rect x="39.2" y="17.5" width="1.3" height="1" fill="#24609a" opacity="0.9"/><rect x="42.9" y="17.3" width="1.3" height="1" fill="#24609a" opacity="0.9"/><rect x="45.6" y="19.0" width="1.3" height="1" fill="#24609a" opacity="0.9"/><rect x="48.2" y="18.2" width="1.3" height="1" fill="#24609a" opacity="0.9"/><rect x="51.5" y="18.9" width="1.3" height="1" fill="#24609a" opacity="0.9"/><rect x="54.6" y="18.2" width="1.3" height="1" fill="#24609a" opacity="0.9"/><rect x="57.6" y="18.5" width="1.3" height="1" fill="#24609a" opacity="0.9"/><rect x="60.1" y="18.9" width="1.3" height="1" fill="#24609a" opacity="0.9"/><rect x="64.0" y="19.2" width="1.3" height="1" fill="#24609a" opacity="0.9"/><rect x="66.5" y="18.6" width="1.3" height="1" fill="#24609a" opacity="0.9"/><rect x="69.4" y="18.3" width="1.3" height="1" fill="#24609a" opacity="0.9"/><rect x="72.9" y="17.2" width="1.3" height="1" fill="#24609a" opacity="0.9"/><rect x="75.7" y="17.5" width="1.3" height="1" fill="#24609a" opacity="0.9"/><rect x="79.0" y="17.8" width="1.3" height="1" fill="#24609a" opacity="0.9"/><rect x="81.6" y="17.4" width="1.3" height="1" fill="#24609a" opacity="0.9"/><rect x="84.9" y="19.8" width="1.3" height="1" fill="#24609a" opacity="0.9"/><rect x="87.9" y="17.8" width="1.3" height="1" fill="#24609a" opacity="0.9"/><rect x="90.1" y="18.9" width="1.3" height="1" fill="#24609a" opacity="0.9"/><rect x="93.7" y="19.1" width="1.3" height="1" fill="#24609a" opacity="0.9"/><rect x="96.9" y="19.9" width="1.3" height="1" fill="#24609a" opacity="0.9"/><rect x="99.3" y="19.8" width="1.3" height="1" fill="#24609a" opacity="0.9"/><rect x="102.9" y="17.3" width="1.3" height="1" fill="#24609a" opacity="0.9"/><rect x="105.5" y="17.5" width="1.3" height="1" fill="#24609a" opacity="0.9"/><rect x="108.9" y="19.5" width="1.3" height="1" fill="#24609a" opacity="0.9"/><rect x="111.2" y="17.5" width="1.3" height="1" fill="#24609a" opacity="0.9"/><rect x="114.9" y="17.6" width="1.3" height="1" fill="#24609a" opacity="0.9"/><rect x="117.4" y="18.8" width="1.3" height="1" fill="#24609a" opacity="0.9"/><rect x="120.4" y="19.6" width="1.3" height="1" fill="#24609a" opacity="0.9"/><rect x="123.9" y="19.9" width="1.3" height="1" fill="#24609a" opacity="0.9"/><rect x="126.8" y="18.6" width="1.3" height="1" fill="#24609a" opacity="0.9"/><rect x="129.5" y="18.6" width="1.3" height="1" fill="#24609a" opacity="0.9"/><rect x="132.0" y="17.1" width="1.3" height="1" fill="#24609a" opacity="0.9"/><rect x="136.0" y="17.7" width="1.3" height="1" fill="#24609a" opacity="0.9"/><rect x="138.9" y="19.4" width="1.3" height="1" fill="#24609a" opacity="0.9"/><rect x="141.4" y="18.8" width="1.3" height="1" fill="#24609a" opacity="0.9"/><rect x="144.6" y="17.5" width="1.3" height="1" fill="#24609a" opacity="0.9"/><rect x="147.0" y="17.3" width="1.3" height="1" fill="#24609a" opacity="0.9"/><rect x="150.6" y="17.5" width="1.3" height="1" fill="#24609a" opacity="0.9"/><rect x="154.0" y="19.1" width="1.3" height="1" fill="#24609a" opacity="0.9"/><rect x="156.0" y="17.4" width="1.3" height="1" fill="#24609a" opacity="0.9"/><rect x="159.6" y="17.1" width="1.3" height="1" fill="#24609a" opacity="0.9"/><rect x="162.1" y="17.1" width="1.3" height="1" fill="#24609a" opacity="0.9"/><rect x="165.9" y="19.3" width="1.3" height="1" fill="#24609a" opacity="0.9"/></svg>
<div class="t" style="left:440px;top:525.8px;font-size:7.4px;color:#f4ece8;max-width:165px;overflow:hidden">Violins</div>
<svg style="left:593px;top:525px" width="154.0" height="42"><rect x="0" y="0" width="154.0" height="42" fill="#4796d0"/><rect x="0" y="0" width="0.8" height="42" fill="#24609a" opacity="0.5"/><polygon points="0,1 133,1 128,9 0,9" fill="#24609a" opacity="0.6"/><line x1="0" y1="35.5" x2="154" y2="35.5" stroke="#24609a" stroke-width="0.9" opacity="0.8"/><line x1="0" y1="41" x2="154" y2="41" stroke="#24609a" stroke-width="1" opacity="0.7"/><line x1="0" y1="26" x2="154" y2="26" stroke="#24609a" stroke-width="0.6" opacity="0.5"/><line x1="0" y1="31" x2="154" y2="31" stroke="#24609a" stroke-width="0.6" opacity="0.5"/><polyline points="0,13.3 4,15.1 8,14.1 12,14.4 16,14.9 20,14.6 24,14.5 28,13.7 32,13.4 36,13.3 40,12.9 44,15.1 48,15.0 52,14.6 56,13.0 60,14.6 64,14.3 68,13.9 72,13.1 76,14.7 80,14.4 84,13.5 88,13.6 92,13.4 96,13.6 100,15.0 104,12.9 108,14.6 112,15.0 116,14.6 120,14.2 124,13.9 128,13.5 132,14.6 136,14.7 140,12.9 144,14.0 148,13.0 152,13.9" fill="none" stroke="#24609a" stroke-width="0.7" opacity="0.5"/><rect x="0.0" y="18.7" width="1.3" height="1" fill="#24609a" opacity="0.9"/><rect x="3.7" y="19.5" width="1.3" height="1" fill="#24609a" opacity="0.9"/><rect x="6.6" y="17.9" width="1.3" height="1" fill="#24609a" opacity="0.9"/><rect x="9.4" y="18.6" width="1.3" height="1" fill="#24609a" opacity="0.9"/><rect x="12.3" y="19.3" width="1.3" height="1" fill="#24609a" opacity="0.9"/><rect x="15.1" y="18.0" width="1.3" height="1" fill="#24609a" opacity="0.9"/><rect x="18.1" y="19.1" width="1.3" height="1" fill="#24609a" opacity="0.9"/><rect x="21.8" y="19.9" width="1.3" height="1" fill="#24609a" opacity="0.9"/><rect x="24.6" y="19.9" width="1.3" height="1" fill="#24609a" opacity="0.9"/><rect x="27.5" y="18.7" width="1.3" height="1" fill="#24609a" opacity="0.9"/><rect x="30.2" y="19.4" width="1.3" height="1" fill="#24609a" opacity="0.9"/><rect x="33.9" y="17.7" width="1.3" height="1" fill="#24609a" opacity="0.9"/><rect x="36.2" y="19.8" width="1.3" height="1" fill="#24609a" opacity="0.9"/><rect x="39.8" y="18.5" width="1.3" height="1" fill="#24609a" opacity="0.9"/><rect x="43.0" y="18.7" width="1.3" height="1" fill="#24609a" opacity="0.9"/><rect x="45.1" y="18.0" width="1.3" height="1" fill="#24609a" opacity="0.9"/><rect x="48.1" y="19.8" width="1.3" height="1" fill="#24609a" opacity="0.9"/><rect x="51.9" y="19.2" width="1.3" height="1" fill="#24609a" opacity="0.9"/><rect x="54.4" y="18.9" width="1.3" height="1" fill="#24609a" opacity="0.9"/><rect x="57.4" y="17.9" width="1.3" height="1" fill="#24609a" opacity="0.9"/><rect x="60.4" y="18.6" width="1.3" height="1" fill="#24609a" opacity="0.9"/><rect x="63.2" y="19.9" width="1.3" height="1" fill="#24609a" opacity="0.9"/><rect x="66.6" y="19.8" width="1.3" height="1" fill="#24609a" opacity="0.9"/><rect x="69.1" y="18.8" width="1.3" height="1" fill="#24609a" opacity="0.9"/><rect x="72.7" y="18.8" width="1.3" height="1" fill="#24609a" opacity="0.9"/><rect x="75.0" y="18.7" width="1.3" height="1" fill="#24609a" opacity="0.9"/><rect x="78.5" y="19.6" width="1.3" height="1" fill="#24609a" opacity="0.9"/><rect x="81.5" y="18.7" width="1.3" height="1" fill="#24609a" opacity="0.9"/><rect x="84.3" y="18.4" width="1.3" height="1" fill="#24609a" opacity="0.9"/><rect x="87.7" y="17.8" width="1.3" height="1" fill="#24609a" opacity="0.9"/><rect x="90.2" y="18.0" width="1.3" height="1" fill="#24609a" opacity="0.9"/><rect x="93.6" y="19.1" width="1.3" height="1" fill="#24609a" opacity="0.9"/><rect x="96.5" y="17.8" width="1.3" height="1" fill="#24609a" opacity="0.9"/><rect x="99.8" y="19.5" width="1.3" height="1" fill="#24609a" opacity="0.9"/><rect x="102.6" y="19.2" width="1.3" height="1" fill="#24609a" opacity="0.9"/><rect x="106.0" y="19.2" width="1.3" height="1" fill="#24609a" opacity="0.9"/><rect x="108.6" y="18.0" width="1.3" height="1" fill="#24609a" opacity="0.9"/><rect x="111.2" y="19.9" width="1.3" height="1" fill="#24609a" opacity="0.9"/><rect x="114.3" y="19.9" width="1.3" height="1" fill="#24609a" opacity="0.9"/><rect x="118.0" y="17.5" width="1.3" height="1" fill="#24609a" opacity="0.9"/><rect x="120.7" y="17.6" width="1.3" height="1" fill="#24609a" opacity="0.9"/><rect x="123.2" y="17.4" width="1.3" height="1" fill="#24609a" opacity="0.9"/><rect x="126.3" y="17.9" width="1.3" height="1" fill="#24609a" opacity="0.9"/><rect x="129.3" y="17.3" width="1.3" height="1" fill="#24609a" opacity="0.9"/><rect x="132.9" y="17.8" width="1.3" height="1" fill="#24609a" opacity="0.9"/><rect x="135.9" y="18.4" width="1.3" height="1" fill="#24609a" opacity="0.9"/><rect x="138.0" y="19.6" width="1.3" height="1" fill="#24609a" opacity="0.9"/><rect x="141.4" y="17.7" width="1.3" height="1" fill="#24609a" opacity="0.9"/><rect x="145.0" y="17.9" width="1.3" height="1" fill="#24609a" opacity="0.9"/><rect x="147.0" y="17.8" width="1.3" height="1" fill="#24609a" opacity="0.9"/><rect x="150.7" y="17.0" width="1.3" height="1" fill="#24609a" opacity="0.9"/></svg>
<div class="t" style="left:595px;top:525.8px;font-size:7.4px;color:#f4ece8;max-width:151px;overflow:hidden">Violins - Chasing Rhythms - 86 - c</div>
<svg style="left:748px;top:525px" width="153.0" height="42"><rect x="0" y="0" width="153.0" height="42" fill="#4796d0"/><rect x="0" y="0" width="0.8" height="42" fill="#24609a" opacity="0.5"/><polygon points="0,1 133,1 128,9 0,9" fill="#24609a" opacity="0.6"/><line x1="0" y1="35.5" x2="153" y2="35.5" stroke="#24609a" stroke-width="0.9" opacity="0.8"/><line x1="0" y1="41" x2="153" y2="41" stroke="#24609a" stroke-width="1" opacity="0.7"/><line x1="0" y1="26" x2="153" y2="26" stroke="#24609a" stroke-width="0.6" opacity="0.5"/><line x1="0" y1="31" x2="153" y2="31" stroke="#24609a" stroke-width="0.6" opacity="0.5"/><polyline points="0,13.4 4,14.8 8,14.5 12,14.2 16,14.4 20,14.8 24,14.4 28,14.4 32,14.9 36,14.3 40,14.2 44,13.3 48,13.2 52,13.1 56,13.8 60,13.4 64,14.5 68,14.9 72,13.4 76,13.8 80,14.5 84,13.2 88,14.8 92,14.0 96,12.8 100,14.9 104,14.0 108,14.4 112,14.9 116,14.9 120,13.6 124,12.8 128,14.8 132,15.0 136,13.1 140,13.4 144,13.3 148,14.5 152,15.1" fill="none" stroke="#24609a" stroke-width="0.7" opacity="0.5"/><rect x="0.2" y="18.0" width="1.3" height="1" fill="#24609a" opacity="0.9"/><rect x="3.8" y="18.4" width="1.3" height="1" fill="#24609a" opacity="0.9"/><rect x="6.2" y="18.4" width="1.3" height="1" fill="#24609a" opacity="0.9"/><rect x="9.0" y="19.4" width="1.3" height="1" fill="#24609a" opacity="0.9"/><rect x="12.4" y="18.0" width="1.3" height="1" fill="#24609a" opacity="0.9"/><rect x="15.7" y="18.4" width="1.3" height="1" fill="#24609a" opacity="0.9"/><rect x="19.0" y="17.6" width="1.3" height="1" fill="#24609a" opacity="0.9"/><rect x="21.5" y="19.8" width="1.3" height="1" fill="#24609a" opacity="0.9"/><rect x="24.7" y="18.8" width="1.3" height="1" fill="#24609a" opacity="0.9"/><rect x="27.6" y="17.8" width="1.3" height="1" fill="#24609a" opacity="0.9"/><rect x="30.4" y="17.2" width="1.3" height="1" fill="#24609a" opacity="0.9"/><rect x="33.1" y="19.7" width="1.3" height="1" fill="#24609a" opacity="0.9"/><rect x="36.6" y="19.0" width="1.3" height="1" fill="#24609a" opacity="0.9"/><rect x="39.6" y="17.3" width="1.3" height="1" fill="#24609a" opacity="0.9"/><rect x="42.3" y="18.2" width="1.3" height="1" fill="#24609a" opacity="0.9"/><rect x="46.0" y="19.9" width="1.3" height="1" fill="#24609a" opacity="0.9"/><rect x="49.0" y="19.9" width="1.3" height="1" fill="#24609a" opacity="0.9"/><rect x="51.5" y="17.5" width="1.3" height="1" fill="#24609a" opacity="0.9"/><rect x="54.9" y="17.2" width="1.3" height="1" fill="#24609a" opacity="0.9"/><rect x="57.8" y="17.6" width="1.3" height="1" fill="#24609a" opacity="0.9"/><rect x="60.6" y="19.2" width="1.3" height="1" fill="#24609a" opacity="0.9"/><rect x="63.8" y="17.4" width="1.3" height="1" fill="#24609a" opacity="0.9"/><rect x="66.7" y="19.5" width="1.3" height="1" fill="#24609a" opacity="0.9"/><rect x="69.8" y="18.2" width="1.3" height="1" fill="#24609a" opacity="0.9"/><rect x="73.0" y="19.3" width="1.3" height="1" fill="#24609a" opacity="0.9"/><rect x="75.6" y="19.3" width="1.3" height="1" fill="#24609a" opacity="0.9"/><rect x="78.5" y="19.4" width="1.3" height="1" fill="#24609a" opacity="0.9"/><rect x="81.2" y="19.1" width="1.3" height="1" fill="#24609a" opacity="0.9"/><rect x="84.7" y="19.9" width="1.3" height="1" fill="#24609a" opacity="0.9"/><rect x="87.7" y="18.4" width="1.3" height="1" fill="#24609a" opacity="0.9"/><rect x="90.8" y="19.4" width="1.3" height="1" fill="#24609a" opacity="0.9"/><rect x="93.4" y="19.0" width="1.3" height="1" fill="#24609a" opacity="0.9"/><rect x="96.3" y="18.5" width="1.3" height="1" fill="#24609a" opacity="0.9"/><rect x="99.6" y="17.3" width="1.3" height="1" fill="#24609a" opacity="0.9"/><rect x="102.9" y="17.5" width="1.3" height="1" fill="#24609a" opacity="0.9"/><rect x="105.3" y="18.2" width="1.3" height="1" fill="#24609a" opacity="0.9"/><rect x="108.1" y="18.7" width="1.3" height="1" fill="#24609a" opacity="0.9"/><rect x="111.3" y="19.8" width="1.3" height="1" fill="#24609a" opacity="0.9"/><rect x="114.5" y="18.0" width="1.3" height="1" fill="#24609a" opacity="0.9"/><rect x="117.6" y="19.0" width="1.3" height="1" fill="#24609a" opacity="0.9"/><rect x="120.2" y="17.2" width="1.3" height="1" fill="#24609a" opacity="0.9"/><rect x="123.3" y="18.8" width="1.3" height="1" fill="#24609a" opacity="0.9"/><rect x="126.6" y="19.6" width="1.3" height="1" fill="#24609a" opacity="0.9"/><rect x="129.2" y="18.4" width="1.3" height="1" fill="#24609a" opacity="0.9"/><rect x="132.8" y="17.6" width="1.3" height="1" fill="#24609a" opacity="0.9"/><rect x="135.4" y="18.6" width="1.3" height="1" fill="#24609a" opacity="0.9"/><rect x="138.6" y="19.1" width="1.3" height="1" fill="#24609a" opacity="0.9"/><rect x="142.0" y="17.3" width="1.3" height="1" fill="#24609a" opacity="0.9"/><rect x="144.9" y="18.6" width="1.3" height="1" fill="#24609a" opacity="0.9"/><rect x="147.6" y="17.9" width="1.3" height="1" fill="#24609a" opacity="0.9"/><rect x="150.5" y="17.6" width="1.3" height="1" fill="#24609a" opacity="0.9"/></svg>
<div class="t" style="left:750px;top:525.8px;font-size:7.4px;color:#f4ece8;max-width:150px;overflow:hidden">Violins - Chasing Rhythms - 86 - c</div>
<svg style="left:902px;top:525px" width="154.0" height="42"><rect x="0" y="0" width="154.0" height="42" fill="#4796d0"/><rect x="0" y="0" width="0.8" height="42" fill="#24609a" opacity="0.5"/><polygon points="0,1 140,1 135,9 0,9" fill="#24609a" opacity="0.6"/><line x1="0" y1="35.5" x2="154" y2="35.5" stroke="#24609a" stroke-width="0.9" opacity="0.8"/><line x1="0" y1="41" x2="154" y2="41" stroke="#24609a" stroke-width="1" opacity="0.7"/><line x1="0" y1="26" x2="154" y2="26" stroke="#24609a" stroke-width="0.6" opacity="0.5"/><line x1="0" y1="31" x2="154" y2="31" stroke="#24609a" stroke-width="0.6" opacity="0.5"/><polyline points="0,13.0 4,14.8 8,14.4 12,13.1 16,13.1 20,13.8 24,14.8 28,13.9 32,14.1 36,14.0 40,15.0 44,14.5 48,13.4 52,13.2 56,14.2 60,14.6 64,13.2 68,13.6 72,14.5 76,14.0 80,13.5 84,13.9 88,13.8 92,15.2 96,14.4 100,13.2 104,13.7 108,14.4 112,12.8 116,12.9 120,14.6 124,15.2 128,14.7 132,13.0 136,14.0 140,14.6 144,13.1 148,13.3 152,13.8" fill="none" stroke="#24609a" stroke-width="0.7" opacity="0.5"/><rect x="0.1" y="17.3" width="1.3" height="1" fill="#24609a" opacity="0.9"/><rect x="3.7" y="18.0" width="1.3" height="1" fill="#24609a" opacity="0.9"/><rect x="6.8" y="18.7" width="1.3" height="1" fill="#24609a" opacity="0.9"/><rect x="9.9" y="17.9" width="1.3" height="1" fill="#24609a" opacity="0.9"/><rect x="12.3" y="17.8" width="1.3" height="1" fill="#24609a" opacity="0.9"/><rect x="15.1" y="17.9" width="1.3" height="1" fill="#24609a" opacity="0.9"/><rect x="18.4" y="18.5" width="1.3" height="1" fill="#24609a" opacity="0.9"/><rect x="21.3" y="20.0" width="1.3" height="1" fill="#24609a" opacity="0.9"/><rect x="24.9" y="18.0" width="1.3" height="1" fill="#24609a" opacity="0.9"/><rect x="27.2" y="18.5" width="1.3" height="1" fill="#24609a" opacity="0.9"/><rect x="30.1" y="17.6" width="1.3" height="1" fill="#24609a" opacity="0.9"/><rect x="33.7" y="17.4" width="1.3" height="1" fill="#24609a" opacity="0.9"/><rect x="37.0" y="17.3" width="1.3" height="1" fill="#24609a" opacity="0.9"/><rect x="40.0" y="18.2" width="1.3" height="1" fill="#24609a" opacity="0.9"/><rect x="42.6" y="18.2" width="1.3" height="1" fill="#24609a" opacity="0.9"/><rect x="45.6" y="18.2" width="1.3" height="1" fill="#24609a" opacity="0.9"/><rect x="48.1" y="17.1" width="1.3" height="1" fill="#24609a" opacity="0.9"/><rect x="51.8" y="18.4" width="1.3" height="1" fill="#24609a" opacity="0.9"/><rect x="54.8" y="17.2" width="1.3" height="1" fill="#24609a" opacity="0.9"/><rect x="57.5" y="18.6" width="1.3" height="1" fill="#24609a" opacity="0.9"/><rect x="60.4" y="17.4" width="1.3" height="1" fill="#24609a" opacity="0.9"/><rect x="63.7" y="19.1" width="1.3" height="1" fill="#24609a" opacity="0.9"/><rect x="66.9" y="17.2" width="1.3" height="1" fill="#24609a" opacity="0.9"/><rect x="69.0" y="18.9" width="1.3" height="1" fill="#24609a" opacity="0.9"/><rect x="72.6" y="17.5" width="1.3" height="1" fill="#24609a" opacity="0.9"/><rect x="75.7" y="19.6" width="1.3" height="1" fill="#24609a" opacity="0.9"/><rect x="78.4" y="17.3" width="1.3" height="1" fill="#24609a" opacity="0.9"/><rect x="81.9" y="17.0" width="1.3" height="1" fill="#24609a" opacity="0.9"/><rect x="84.9" y="17.4" width="1.3" height="1" fill="#24609a" opacity="0.9"/><rect x="87.3" y="19.1" width="1.3" height="1" fill="#24609a" opacity="0.9"/><rect x="90.9" y="17.6" width="1.3" height="1" fill="#24609a" opacity="0.9"/><rect x="93.0" y="17.1" width="1.3" height="1" fill="#24609a" opacity="0.9"/><rect x="96.6" y="18.7" width="1.3" height="1" fill="#24609a" opacity="0.9"/><rect x="99.9" y="18.5" width="1.3" height="1" fill="#24609a" opacity="0.9"/><rect x="102.5" y="19.5" width="1.3" height="1" fill="#24609a" opacity="0.9"/><rect x="105.8" y="18.3" width="1.3" height="1" fill="#24609a" opacity="0.9"/><rect x="108.7" y="18.2" width="1.3" height="1" fill="#24609a" opacity="0.9"/><rect x="111.1" y="19.0" width="1.3" height="1" fill="#24609a" opacity="0.9"/><rect x="114.6" y="20.0" width="1.3" height="1" fill="#24609a" opacity="0.9"/><rect x="117.7" y="17.5" width="1.3" height="1" fill="#24609a" opacity="0.9"/><rect x="120.8" y="18.6" width="1.3" height="1" fill="#24609a" opacity="0.9"/><rect x="123.1" y="18.4" width="1.3" height="1" fill="#24609a" opacity="0.9"/><rect x="126.9" y="18.9" width="1.3" height="1" fill="#24609a" opacity="0.9"/><rect x="129.4" y="17.0" width="1.3" height="1" fill="#24609a" opacity="0.9"/><rect x="132.7" y="20.0" width="1.3" height="1" fill="#24609a" opacity="0.9"/><rect x="135.9" y="17.7" width="1.3" height="1" fill="#24609a" opacity="0.9"/><rect x="138.1" y="18.4" width="1.3" height="1" fill="#24609a" opacity="0.9"/><rect x="141.3" y="18.7" width="1.3" height="1" fill="#24609a" opacity="0.9"/><rect x="144.5" y="19.2" width="1.3" height="1" fill="#24609a" opacity="0.9"/><rect x="147.9" y="18.1" width="1.3" height="1" fill="#24609a" opacity="0.9"/><rect x="150.7" y="19.1" width="1.3" height="1" fill="#24609a" opacity="0.9"/></svg>
<div class="t" style="left:904px;top:525.8px;font-size:7.4px;color:#f4ece8;max-width:151px;overflow:hidden">Violins - Cmhasing Rhythms - 86 - Cm</div>
<div class="a" style="left:424px;top:567px;width:14px;height:41px;background:rgba(60,50,45,0.45);"></div>
<svg style="left:424px;top:567px" width="168.0" height="42"><rect x="0" y="0" width="168.0" height="42" fill="#58bde4"/><rect x="0" y="0" width="0.8" height="42" fill="#2b7fa8" opacity="0.5"/><polygon points="14,1 47,1 42,9 14,9" fill="#2b7fa8" opacity="0.6"/><line x1="0" y1="35.5" x2="168" y2="35.5" stroke="#2b7fa8" stroke-width="0.9" opacity="0.8"/><line x1="0" y1="41" x2="168" y2="41" stroke="#2b7fa8" stroke-width="1" opacity="0.7"/><line x1="0" y1="26" x2="168" y2="26" stroke="#2b7fa8" stroke-width="0.6" opacity="0.5"/><line x1="0" y1="31" x2="168" y2="31" stroke="#2b7fa8" stroke-width="0.6" opacity="0.5"/><polyline points="0,12.1 4,13.6 8,12.5 12,13.1 16,13.0 20,13.4 24,13.9 28,14.0 32,11.9 36,11.9 40,11.9 44,13.9 48,13.4 52,13.3 56,12.7 60,12.5 64,13.2 68,14.1 72,13.8 76,13.3 80,12.6 84,14.1 88,13.5 92,12.9 96,12.2 100,14.1 104,12.1 108,14.1 112,12.2 116,13.7 120,12.9 124,13.7 128,12.9 132,12.5 136,13.6 140,12.6 144,12.5 148,13.3 152,13.4 156,13.7 160,13.2 164,13.9 168,13.5" fill="none" stroke="#2b7fa8" stroke-width="0.7" opacity="0.5"/><rect x="0.0" y="19.5" width="1.3" height="1" fill="#2b7fa8" opacity="0.9"/><rect x="3.8" y="20.8" width="1.3" height="1" fill="#2b7fa8" opacity="0.9"/><rect x="7.0" y="19.7" width="1.3" height="1" fill="#2b7fa8" opacity="0.9"/><rect x="9.4" y="20.1" width="1.3" height="1" fill="#2b7fa8" opacity="0.9"/><rect x="12.8" y="19.7" width="1.3" height="1" fill="#2b7fa8" opacity="0.9"/><rect x="15.5" y="21.1" width="1.3" height="1" fill="#2b7fa8" opacity="0.9"/><rect x="18.3" y="19.8" width="1.3" height="1" fill="#2b7fa8" opacity="0.9"/><rect x="21.2" y="21.8" width="1.3" height="1" fill="#2b7fa8" opacity="0.9"/><rect x="24.8" y="21.3" width="1.3" height="1" fill="#2b7fa8" opacity="0.9"/><rect x="27.3" y="19.4" width="1.3" height="1" fill="#2b7fa8" opacity="0.9"/><rect x="30.9" y="22.0" width="1.3" height="1" fill="#2b7fa8" opacity="0.9"/><rect x="33.1" y="21.9" width="1.3" height="1" fill="#2b7fa8" opacity="0.9"/><rect x="36.8" y="20.6" width="1.3" height="1" fill="#2b7fa8" opacity="0.9"/><rect x="39.8" y="20.5" width="1.3" height="1" fill="#2b7fa8" opacity="0.9"/><rect x="42.5" y="20.6" width="1.3" height="1" fill="#2b7fa8" opacity="0.9"/><rect x="45.5" y="20.1" width="1.3" height="1" fill="#2b7fa8" opacity="0.9"/><rect x="48.8" y="21.2" width="1.3" height="1" fill="#2b7fa8" opacity="0.9"/><rect x="52.0" y="19.9" width="1.3" height="1" fill="#2b7fa8" opacity="0.9"/><rect x="54.1" y="20.2" width="1.3" height="1" fill="#2b7fa8" opacity="0.9"/><rect x="57.7" y="21.8" width="1.3" height="1" fill="#2b7fa8" opacity="0.9"/><rect x="60.6" y="19.0" width="1.3" height="1" fill="#2b7fa8" opacity="0.9"/><rect x="63.4" y="20.6" width="1.3" height="1" fill="#2b7fa8" opacity="0.9"/><rect x="66.5" y="20.1" width="1.3" height="1" fill="#2b7fa8" opacity="0.9"/><rect x="69.1" y="20.2" width="1.3" height="1" fill="#2b7fa8" opacity="0.9"/><rect x="72.5" y="19.8" width="1.3" height="1" fill="#2b7fa8" opacity="0.9"/><rect x="75.8" y="20.0" width="1.3" height="1" fill="#2b7fa8" opacity="0.9"/><rect x="78.5" y="19.6" width="1.3" height="1" fill="#2b7fa8" opacity="0.9"/><rect x="81.2" y="19.3" width="1.3" height="1" fill="#2b7fa8" opacity="0.9"/><rect x="84.8" y="19.9" width="1.3" height="1" fill="#2b7fa8" opacity="0.9"/><rect x="87.6" y="20.1" width="1.3" height="1" fill="#2b7fa8" opacity="0.9"/><rect x="90.8" y="21.6" width="1.3" height="1" fill="#2b7fa8" opacity="0.9"/><rect x="93.2" y="21.8" width="1.3" height="1" fill="#2b7fa8" opacity="0.9"/><rect x="96.5" y="21.6" width="1.3" height="1" fill="#2b7fa8" opacity="0.9"/><rect x="99.4" y="20.4" width="1.3" height="1" fill="#2b7fa8" opacity="0.9"/><rect x="102.1" y="19.9" width="1.3" height="1" fill="#2b7fa8" opacity="0.9"/><rect x="105.0" y="19.8" width="1.3" height="1" fill="#2b7fa8" opacity="0.9"/><rect x="108.6" y="19.3" width="1.3" height="1" fill="#2b7fa8" opacity="0.9"/><rect x="111.2" y="21.6" width="1.3" height="1" fill="#2b7fa8" opacity="0.9"/><rect x="114.6" y="20.8" width="1.3" height="1" fill="#2b7fa8" opacity="0.9"/><rect x="117.2" y="21.8" width="1.3" height="1" fill="#2b7fa8" opacity="0.9"/><rect x="120.3" y="19.3" width="1.3" height="1" fill="#2b7fa8" opacity="0.9"/><rect x="123.4" y="20.8" width="1.3" height="1" fill="#2b7fa8" opacity="0.9"/><rect x="126.6" y="19.4" width="1.3" height="1" fill="#2b7fa8" opacity="0.9"/><rect x="129.8" y="20.0" width="1.3" height="1" fill="#2b7fa8" opacity="0.9"/><rect x="133.0" y="20.1" width="1.3" height="1" fill="#2b7fa8" opacity="0.9"/><rect x="135.0" y="19.1" width="1.3" height="1" fill="#2b7fa8" opacity="0.9"/><rect x="138.4" y="21.1" width="1.3" height="1" fill="#2b7fa8" opacity="0.9"/><rect x="141.5" y="21.5" width="1.3" height="1" fill="#2b7fa8" opacity="0.9"/><rect x="144.9" y="21.6" width="1.3" height="1" fill="#2b7fa8" opacity="0.9"/><rect x="147.6" y="21.8" width="1.3" height="1" fill="#2b7fa8" opacity="0.9"/><rect x="150.7" y="19.3" width="1.3" height="1" fill="#2b7fa8" opacity="0.9"/><rect x="153.3" y="19.7" width="1.3" height="1" fill="#2b7fa8" opacity="0.9"/><rect x="156.1" y="21.8" width="1.3" height="1" fill="#2b7fa8" opacity="0.9"/><rect x="159.5" y="19.5" width="1.3" height="1" fill="#2b7fa8" opacity="0.9"/><rect x="162.8" y="20.1" width="1.3" height="1" fill="#2b7fa8" opacity="0.9"/><rect x="165.2" y="21.2" width="1.3" height="1" fill="#2b7fa8" opacity="0.9"/></svg>
<div class="t" style="left:440px;top:567.8px;font-size:7.4px;color:#f4ece8;max-width:165px;overflow:hidden">Violas</div>
<svg style="left:593px;top:567px" width="154.0" height="42"><rect x="0" y="0" width="154.0" height="42" fill="#58bde4"/><rect x="0" y="0" width="0.8" height="42" fill="#2b7fa8" opacity="0.5"/><polygon points="0,1 129,1 124,9 0,9" fill="#2b7fa8" opacity="0.6"/><line x1="0" y1="35.5" x2="154" y2="35.5" stroke="#2b7fa8" stroke-width="0.9" opacity="0.8"/><line x1="0" y1="41" x2="154" y2="41" stroke="#2b7fa8" stroke-width="1" opacity="0.7"/><line x1="0" y1="26" x2="154" y2="26" stroke="#2b7fa8" stroke-width="0.6" opacity="0.5"/><line x1="0" y1="31" x2="154" y2="31" stroke="#2b7fa8" stroke-width="0.6" opacity="0.5"/><polyline points="0,12.2 4,14.1 8,14.1 12,11.9 16,13.1 20,11.9 24,14.0 28,12.4 32,13.0 36,13.6 40,13.6 44,13.0 48,12.0 52,12.6 56,11.8 60,12.3 64,13.6 68,13.2 72,12.9 76,13.4 80,12.9 84,12.7 88,12.7 92,12.7 96,12.7 100,12.9 104,13.7 108,14.0 112,13.9 116,12.9 120,14.0 124,13.7 128,12.2 132,13.8 136,12.0 140,13.3 144,12.7 148,13.6 152,13.7" fill="none" stroke="#2b7fa8" stroke-width="0.7" opacity="0.5"/><rect x="1.0" y="21.8" width="1.3" height="1" fill="#2b7fa8" opacity="0.9"/><rect x="3.4" y="19.1" width="1.3" height="1" fill="#2b7fa8" opacity="0.9"/><rect x="6.1" y="21.9" width="1.3" height="1" fill="#2b7fa8" opacity="0.9"/><rect x="9.3" y="19.7" width="1.3" height="1" fill="#2b7fa8" opacity="0.9"/><rect x="12.1" y="20.1" width="1.3" height="1" fill="#2b7fa8" opacity="0.9"/><rect x="15.3" y="21.2" width="1.3" height="1" fill="#2b7fa8" opacity="0.9"/><rect x="18.2" y="20.4" width="1.3" height="1" fill="#2b7fa8" opacity="0.9"/><rect x="21.9" y="20.3" width="1.3" height="1" fill="#2b7fa8" opacity="0.9"/><rect x="24.1" y="20.3" width="1.3" height="1" fill="#2b7fa8" opacity="0.9"/><rect x="27.2" y="19.1" width="1.3" height="1" fill="#2b7fa8" opacity="0.9"/><rect x="30.6" y="19.9" width="1.3" height="1" fill="#2b7fa8" opacity="0.9"/><rect x="33.8" y="19.8" width="1.3" height="1" fill="#2b7fa8" opacity="0.9"/><rect x="36.1" y="20.4" width="1.3" height="1" fill="#2b7fa8" opacity="0.9"/><rect x="39.5" y="19.5" width="1.3" height="1" fill="#2b7fa8" opacity="0.9"/><rect x="42.5" y="20.9" width="1.3" height="1" fill="#2b7fa8" opacity="0.9"/><rect x="45.8" y="21.8" width="1.3" height="1" fill="#2b7fa8" opacity="0.9"/><rect x="48.6" y="21.5" width="1.3" height="1" fill="#2b7fa8" opacity="0.9"/><rect x="51.1" y="21.3" width="1.3" height="1" fill="#2b7fa8" opacity="0.9"/><rect x="55.0" y="20.3" width="1.3" height="1" fill="#2b7fa8" opacity="0.9"/><rect x="57.3" y="19.7" width="1.3" height="1" fill="#2b7fa8" opacity="0.9"/><rect x="60.2" y="20.2" width="1.3" height="1" fill="#2b7fa8" opacity="0.9"/><rect x="63.4" y="19.5" width="1.3" height="1" fill="#2b7fa8" opacity="0.9"/><rect x="66.8" y="21.9" width="1.3" height="1" fill="#2b7fa8" opacity="0.9"/><rect x="69.1" y="20.9" width="1.3" height="1" fill="#2b7fa8" opacity="0.9"/><rect x="72.4" y="20.5" width="1.3" height="1" fill="#2b7fa8" opacity="0.9"/><rect x="75.5" y="20.3" width="1.3" height="1" fill="#2b7fa8" opacity="0.9"/><rect x="78.8" y="21.8" width="1.3" height="1" fill="#2b7fa8" opacity="0.9"/><rect x="81.3" y="20.1" width="1.3" height="1" fill="#2b7fa8" opacity="0.9"/><rect x="84.0" y="20.2" width="1.3" height="1" fill="#2b7fa8" opacity="0.9"/><rect x="87.3" y="19.5" width="1.3" height="1" fill="#2b7fa8" opacity="0.9"/><rect x="90.8" y="20.6" width="1.3" height="1" fill="#2b7fa8" opacity="0.9"/><rect x="93.2" y="19.5" width="1.3" height="1" fill="#2b7fa8" opacity="0.9"/><rect x="96.6" y="21.5" width="1.3" height="1" fill="#2b7fa8" opacity="0.9"/><rect x="99.9" y="21.2" width="1.3" height="1" fill="#2b7fa8" opacity="0.9"/><rect x="102.8" y="19.5" width="1.3" height="1" fill="#2b7fa8" opacity="0.9"/><rect x="105.1" y="21.0" width="1.3" height="1" fill="#2b7fa8" opacity="0.9"/><rect x="108.6" y="19.6" width="1.3" height="1" fill="#2b7fa8" opacity="0.9"/><rect x="111.3" y="19.0" width="1.3" height="1" fill="#2b7fa8" opacity="0.9"/><rect x="114.7" y="20.6" width="1.3" height="1" fill="#2b7fa8" opacity="0.9"/><rect x="117.8" y="21.7" width="1.3" height="1" fill="#2b7fa8" opacity="0.9"/><rect x="120.5" y="20.0" width="1.3" height="1" fill="#2b7fa8" opacity="0.9"/><rect x="123.3" y="20.9" width="1.3" height="1" fill="#2b7fa8" opacity="0.9"/><rect x="126.9" y="19.3" width="1.3" height="1" fill="#2b7fa8" opacity="0.9"/><rect x="129.4" y="21.3" width="1.3" height="1" fill="#2b7fa8" opacity="0.9"/><rect x="132.1" y="21.0" width="1.3" height="1" fill="#2b7fa8" opacity="0.9"/><rect x="135.2" y="20.7" width="1.3" height="1" fill="#2b7fa8" opacity="0.9"/><rect x="139.0" y="19.1" width="1.3" height="1" fill="#2b7fa8" opacity="0.9"/><rect x="141.7" y="20.7" width="1.3" height="1" fill="#2b7fa8" opacity="0.9"/><rect x="144.9" y="20.1" width="1.3" height="1" fill="#2b7fa8" opacity="0.9"/><rect x="147.9" y="21.9" width="1.3" height="1" fill="#2b7fa8" opacity="0.9"/><rect x="150.1" y="20.1" width="1.3" height="1" fill="#2b7fa8" opacity="0.9"/></svg>
<div class="t" style="left:595px;top:567.8px;font-size:7.4px;color:#f4ece8;max-width:151px;overflow:hidden">Violas - Chasing Rhythms - 86 - c</div>
<svg style="left:748px;top:567px" width="153.0" height="42"><rect x="0" y="0" width="153.0" height="42" fill="#58bde4"/><rect x="0" y="0" width="0.8" height="42" fill="#2b7fa8" opacity="0.5"/><polygon points="0,1 129,1 124,9 0,9" fill="#2b7fa8" opacity="0.6"/><line x1="0" y1="35.5" x2="153" y2="35.5" stroke="#2b7fa8" stroke-width="0.9" opacity="0.8"/><line x1="0" y1="41" x2="153" y2="41" stroke="#2b7fa8" stroke-width="1" opacity="0.7"/><line x1="0" y1="26" x2="153" y2="26" stroke="#2b7fa8" stroke-width="0.6" opacity="0.5"/><line x1="0" y1="31" x2="153" y2="31" stroke="#2b7fa8" stroke-width="0.6" opacity="0.5"/><polyline points="0,12.4 4,13.8 8,14.0 12,13.7 16,13.9 20,13.2 24,14.0 28,12.5 32,12.1 36,13.6 40,12.9 44,11.9 48,13.7 52,12.1 56,12.4 60,12.0 64,13.3 68,12.2 72,12.5 76,13.1 80,14.1 84,11.8 88,14.0 92,13.6 96,12.4 100,13.8 104,13.3 108,12.9 112,12.4 116,12.9 120,12.6 124,12.0 128,12.2 132,12.5 136,12.9 140,13.2 144,13.6 148,12.1 152,12.1" fill="none" stroke="#2b7fa8" stroke-width="0.7" opacity="0.5"/><rect x="0.9" y="20.6" width="1.3" height="1" fill="#2b7fa8" opacity="0.9"/><rect x="3.2" y="19.7" width="1.3" height="1" fill="#2b7fa8" opacity="0.9"/><rect x="6.7" y="20.4" width="1.3" height="1" fill="#2b7fa8" opacity="0.9"/><rect x="9.4" y="21.8" width="1.3" height="1" fill="#2b7fa8" opacity="0.9"/><rect x="12.0" y="20.9" width="1.3" height="1" fill="#2b7fa8" opacity="0.9"/><rect x="15.7" y="20.8" width="1.3" height="1" fill="#2b7fa8" opacity="0.9"/><rect x="18.6" y="19.1" width="1.3" height="1" fill="#2b7fa8" opacity="0.9"/><rect x="22.0" y="19.2" width="1.3" height="1" fill="#2b7fa8" opacity="0.9"/><rect x="24.4" y="20.2" width="1.3" height="1" fill="#2b7fa8" opacity="0.9"/><rect x="27.8" y="21.1" width="1.3" height="1" fill="#2b7fa8" opacity="0.9"/><rect x="30.8" y="20.7" width="1.3" height="1" fill="#2b7fa8" opacity="0.9"/><rect x="34.0" y="20.0" width="1.3" height="1" fill="#2b7fa8" opacity="0.9"/><rect x="36.4" y="20.7" width="1.3" height="1" fill="#2b7fa8" opacity="0.9"/><rect x="39.3" y="19.4" width="1.3" height="1" fill="#2b7fa8" opacity="0.9"/><rect x="42.7" y="20.1" width="1.3" height="1" fill="#2b7fa8" opacity="0.9"/><rect x="45.9" y="21.0" width="1.3" height="1" fill="#2b7fa8" opacity="0.9"/><rect x="48.0" y="19.3" width="1.3" height="1" fill="#2b7fa8" opacity="0.9"/><rect x="51.2" y="20.0" width="1.3" height="1" fill="#2b7fa8" opacity="0.9"/><rect x="54.2" y="21.0" width="1.3" height="1" fill="#2b7fa8" opacity="0.9"/><rect x="57.2" y="20.3" width="1.3" height="1" fill="#2b7fa8" opacity="0.9"/><rect x="60.4" y="22.0" width="1.3" height="1" fill="#2b7fa8" opacity="0.9"/><rect x="63.5" y="19.1" width="1.3" height="1" fill="#2b7fa8" opacity="0.9"/><rect x="67.0" y="21.9" width="1.3" height="1" fill="#2b7fa8" opacity="0.9"/><rect x="69.0" y="21.6" width="1.3" height="1" fill="#2b7fa8" opacity="0.9"/><rect x="72.6" y="21.8" width="1.3" height="1" fill="#2b7fa8" opacity="0.9"/><rect x="75.6" y="20.9" width="1.3" height="1" fill="#2b7fa8" opacity="0.9"/><rect x="78.8" y="19.1" width="1.3" height="1" fill="#2b7fa8" opacity="0.9"/><rect x="81.1" y="19.4" width="1.3" height="1" fill="#2b7fa8" opacity="0.9"/><rect x="84.0" y="19.7" width="1.3" height="1" fill="#2b7fa8" opacity="0.9"/><rect x="87.0" y="19.3" width="1.3" height="1" fill="#2b7fa8" opacity="0.9"/><rect x="90.3" y="19.5" width="1.3" height="1" fill="#2b7fa8" opacity="0.9"/><rect x="93.1" y="21.9" width="1.3" height="1" fill="#2b7fa8" opacity="0.9"/><rect x="96.9" y="21.7" width="1.3" height="1" fill="#2b7fa8" opacity="0.9"/><rect x="99.1" y="20.8" width="1.3" height="1" fill="#2b7fa8" opacity="0.9"/><rect x="102.9" y="20.3" width="1.3" height="1" fill="#2b7fa8" opacity="0.9"/><rect x="105.5" y="21.7" width="1.3" height="1" fill="#2b7fa8" opacity="0.9"/><rect x="108.9" y="20.7" width="1.3" height="1" fill="#2b7fa8" opacity="0.9"/><rect x="111.3" y="21.2" width="1.3" height="1" fill="#2b7fa8" opacity="0.9"/><rect x="114.7" y="19.9" width="1.3" height="1" fill="#2b7fa8" opacity="0.9"/><rect x="117.5" y="21.1" width="1.3" height="1" fill="#2b7fa8" opacity="0.9"/><rect x="120.2" y="20.2" width="1.3" height="1" fill="#2b7fa8" opacity="0.9"/><rect x="123.5" y="20.1" width="1.3" height="1" fill="#2b7fa8" opacity="0.9"/><rect x="126.9" y="19.9" width="1.3" height="1" fill="#2b7fa8" opacity="0.9"/><rect x="129.5" y="21.5" width="1.3" height="1" fill="#2b7fa8" opacity="0.9"/><rect x="132.0" y="20.0" width="1.3" height="1" fill="#2b7fa8" opacity="0.9"/><rect x="135.2" y="20.6" width="1.3" height="1" fill="#2b7fa8" opacity="0.9"/><rect x="139.0" y="20.2" width="1.3" height="1" fill="#2b7fa8" opacity="0.9"/><rect x="141.9" y="19.5" width="1.3" height="1" fill="#2b7fa8" opacity="0.9"/><rect x="145.0" y="20.0" width="1.3" height="1" fill="#2b7fa8" opacity="0.9"/><rect x="147.3" y="19.8" width="1.3" height="1" fill="#2b7fa8" opacity="0.9"/><rect x="150.9" y="19.6" width="1.3" height="1" fill="#2b7fa8" opacity="0.9"/></svg>
<div class="t" style="left:750px;top:567.8px;font-size:7.4px;color:#f4ece8;max-width:150px;overflow:hidden">Violas - Chasing Rhythms - 86 - c</div>
<svg style="left:902px;top:567px" width="154.0" height="42"><rect x="0" y="0" width="154.0" height="42" fill="#58bde4"/><rect x="0" y="0" width="0.8" height="42" fill="#2b7fa8" opacity="0.5"/><polygon points="0,1 136,1 131,9 0,9" fill="#2b7fa8" opacity="0.6"/><line x1="0" y1="35.5" x2="154" y2="35.5" stroke="#2b7fa8" stroke-width="0.9" opacity="0.8"/><line x1="0" y1="41" x2="154" y2="41" stroke="#2b7fa8" stroke-width="1" opacity="0.7"/><line x1="0" y1="26" x2="154" y2="26" stroke="#2b7fa8" stroke-width="0.6" opacity="0.5"/><line x1="0" y1="31" x2="154" y2="31" stroke="#2b7fa8" stroke-width="0.6" opacity="0.5"/><polyline points="0,11.9 4,11.9 8,13.1 12,13.3 16,12.6 20,13.4 24,13.0 28,13.8 32,12.6 36,13.6 40,13.1 44,14.2 48,13.4 52,14.0 56,12.8 60,13.4 64,12.1 68,12.3 72,13.3 76,12.5 80,13.8 84,12.0 88,13.9 92,14.0 96,14.2 100,12.4 104,13.3 108,13.3 112,13.5 116,12.8 120,12.0 124,12.8 128,13.1 132,12.1 136,12.8 140,14.2 144,12.2 148,13.8 152,12.5" fill="none" stroke="#2b7fa8" stroke-width="0.7" opacity="0.5"/><rect x="0.6" y="19.3" width="1.3" height="1" fill="#2b7fa8" opacity="0.9"/><rect x="3.9" y="21.1" width="1.3" height="1" fill="#2b7fa8" opacity="0.9"/><rect x="6.3" y="20.1" width="1.3" height="1" fill="#2b7fa8" opacity="0.9"/><rect x="9.4" y="20.6" width="1.3" height="1" fill="#2b7fa8" opacity="0.9"/><rect x="12.6" y="20.9" width="1.3" height="1" fill="#2b7fa8" opacity="0.9"/><rect x="15.0" y="21.2" width="1.3" height="1" fill="#2b7fa8" opacity="0.9"/><rect x="19.0" y="20.1" width="1.3" height="1" fill="#2b7fa8" opacity="0.9"/><rect x="21.3" y="20.6" width="1.3" height="1" fill="#2b7fa8" opacity="0.9"/><rect x="24.8" y="20.3" width="1.3" height="1" fill="#2b7fa8" opacity="0.9"/><rect x="27.4" y="19.7" width="1.3" height="1" fill="#2b7fa8" opacity="0.9"/><rect x="30.8" y="20.0" width="1.3" height="1" fill="#2b7fa8" opacity="0.9"/><rect x="34.0" y="20.8" width="1.3" height="1" fill="#2b7fa8" opacity="0.9"/><rect x="36.2" y="20.0" width="1.3" height="1" fill="#2b7fa8" opacity="0.9"/><rect x="40.0" y="21.7" width="1.3" height="1" fill="#2b7fa8" opacity="0.9"/><rect x="43.0" y="19.1" width="1.3" height="1" fill="#2b7fa8" opacity="0.9"/><rect x="45.3" y="21.7" width="1.3" height="1" fill="#2b7fa8" opacity="0.9"/><rect x="48.3" y="20.6" width="1.3" height="1" fill="#2b7fa8" opacity="0.9"/><rect x="51.3" y="20.9" width="1.3" height="1" fill="#2b7fa8" opacity="0.9"/><rect x="54.4" y="21.5" width="1.3" height="1" fill="#2b7fa8" opacity="0.9"/><rect x="57.7" y="20.3" width="1.3" height="1" fill="#2b7fa8" opacity="0.9"/><rect x="60.5" y="19.1" width="1.3" height="1" fill="#2b7fa8" opacity="0.9"/><rect x="63.7" y="20.4" width="1.3" height="1" fill="#2b7fa8" opacity="0.9"/><rect x="66.0" y="19.2" width="1.3" height="1" fill="#2b7fa8" opacity="0.9"/><rect x="69.2" y="20.2" width="1.3" height="1" fill="#2b7fa8" opacity="0.9"/><rect x="72.5" y="20.9" width="1.3" height="1" fill="#2b7fa8" opacity="0.9"/><rect x="75.9" y="19.5" width="1.3" height="1" fill="#2b7fa8" opacity="0.9"/><rect x="78.2" y="20.3" width="1.3" height="1" fill="#2b7fa8" opacity="0.9"/><rect x="81.4" y="21.3" width="1.3" height="1" fill="#2b7fa8" opacity="0.9"/><rect x="84.9" y="20.8" width="1.3" height="1" fill="#2b7fa8" opacity="0.9"/><rect x="87.7" y="21.2" width="1.3" height="1" fill="#2b7fa8" opacity="0.9"/><rect x="90.1" y="20.1" width="1.3" height="1" fill="#2b7fa8" opacity="0.9"/><rect x="93.4" y="19.2" width="1.3" height="1" fill="#2b7fa8" opacity="0.9"/><rect x="96.3" y="19.5" width="1.3" height="1" fill="#2b7fa8" opacity="0.9"/><rect x="99.7" y="19.9" width="1.3" height="1" fill="#2b7fa8" opacity="0.9"/><rect x="102.3" y="21.8" width="1.3" height="1" fill="#2b7fa8" opacity="0.9"/><rect x="105.5" y="21.9" width="1.3" height="1" fill="#2b7fa8" opacity="0.9"/><rect x="108.6" y="20.6" width="1.3" height="1" fill="#2b7fa8" opacity="0.9"/><rect x="111.8" y="19.6" width="1.3" height="1" fill="#2b7fa8" opacity="0.9"/><rect x="114.9" y="20.2" width="1.3" height="1" fill="#2b7fa8" opacity="0.9"/><rect x="117.1" y="20.7" width="1.3" height="1" fill="#2b7fa8" opacity="0.9"/><rect x="120.1" y="20.7" width="1.3" height="1" fill="#2b7fa8" opacity="0.9"/><rect x="123.6" y="21.2" width="1.3" height="1" fill="#2b7fa8" opacity="0.9"/><rect x="126.7" y="19.0" width="1.3" height="1" fill="#2b7fa8" opacity="0.9"/><rect x="129.0" y="21.1" width="1.3" height="1" fill="#2b7fa8" opacity="0.9"/><rect x="132.6" y="21.8" width="1.3" height="1" fill="#2b7fa8" opacity="0.9"/><rect x="135.4" y="19.3" width="1.3" height="1" fill="#2b7fa8" opacity="0.9"/><rect x="138.0" y="19.1" width="1.3" height="1" fill="#2b7fa8" opacity="0.9"/><rect x="141.2" y="21.3" width="1.3" height="1" fill="#2b7fa8" opacity="0.9"/><rect x="144.6" y="21.6" width="1.3" height="1" fill="#2b7fa8" opacity="0.9"/><rect x="147.9" y="20.5" width="1.3" height="1" fill="#2b7fa8" opacity="0.9"/><rect x="150.1" y="19.6" width="1.3" height="1" fill="#2b7fa8" opacity="0.9"/></svg>
<div class="t" style="left:904px;top:567.8px;font-size:7.4px;color:#f4ece8;max-width:151px;overflow:hidden">Violas - Cmhasing Rhythms - 86 - Cm</div>
<div class="a" style="left:458px;top:84px;width:1px;height:516px;background:rgba(220,225,230,0.45);"></div>
<div class="a" style="left:1540px;top:84px;width:12px;height:516px;background:#1c1d20;"></div>
<div class="a" style="left:424px;top:600px;width:1128px;height:12px;background:#1f2023;"></div>
<svg style="left:429px;top:603px" width="6" height="7"><polygon points="5,0 5,6 0,3" fill="#7a7d82"/></svg>
<div class="a" style="left:500px;top:604px;width:222px;height:4px;background:#5c5f64;border-radius:2px"></div>
<svg style="left:1451px;top:603px" width="6" height="7"><polygon points="0,0 0,6 5,3" fill="#6a6d72"/></svg>
<svg style="left:1464px;top:601px" width="72" height="10"><polygon points="0,8 4,3 8,8" fill="#6a6d72"/><line x1="10" y1="6" x2="50" y2="6" stroke="#6a6d72"/><rect x="13" y="3" width="2" height="6" fill="#6a6d72"/><polygon points="58,8 63,1 68,8" fill="#6a6d72"/></svg>
<svg style="left:1542px;top:601px" width="8" height="9"><rect x="3" y="0" width="5" height="2" fill="#e6c43c"/><rect x="3" y="3" width="5" height="2" fill="#e6c43c"/><rect x="0" y="6" width="2" height="2" fill="#e6c43c"/></svg>
<div class="a" style="left:169px;top:612px;width:1384px;height:5px;background:#0c0c0d;"></div>
<div class="a" style="left:1553px;top:61px;width:277px;height:911px;background:#111214;"></div>
<div class="a" style="left:1555px;top:62px;width:273px;height:21px;background:#2b2d31;"></div>
<div class="a" style="left:1555px;top:62px;width:17px;height:21px;background:#383b40;"></div>
<svg style="left:1558px;top:67px" width="11" height="10"><polygon points="5.5,0 11,5 9.5,5 9.5,10 6.5,10 6.5,7 4.5,7 4.5,10 1.5,10 1.5,5 0,5" fill="#c9ccd0"/></svg>
<div class="a" style="left:1572px;top:62px;width:52px;height:21px;background:#3f4247;"></div>
<div class="t" style="left:1576px;top:68px;font-size:8.5px;color:#e6e7ea;">Instruments</div>
<div class="t" style="left:1628px;top:68px;font-size:8.5px;color:#c4c7cc;">Effects</div>
<div class="t" style="left:1663px;top:68px;font-size:8.5px;color:#c4c7cc;">Loops</div>
<div class="t" style="left:1696px;top:68px;font-size:8.5px;color:#c4c7cc;">Files</div>
<div class="t" style="left:1722px;top:68px;font-size:8.5px;color:#c4c7cc;">Cloud</div>
<div class="t" style="left:1753px;top:68px;font-size:8.5px;color:#c4c7cc;">Shop</div>
<div class="t" style="left:1782px;top:68px;font-size:8.5px;color:#c4c7cc;">Pool</div>
<svg style="left:1814px;top:66px" width="11" height="11"><circle cx="4.5" cy="4.5" r="3.5" stroke="#c9ccd0" stroke-width="1.3" fill="none"/><path d="M7 7 L10.5 10.5" stroke="#c9ccd0" stroke-width="1.5"/></svg>
<div class="a" style="left:1555px;top:83px;width:273px;height:15px;background:#45484d;"></div>
<div class="t" style="left:1559px;top:86px;font-size:8px;color:#a3a6ab;">Sort by:</div>
<div class="t" style="left:1604px;top:86px;font-size:8px;color:#7f8288;">Flat</div>
<div class="t" style="left:1627px;top:86px;font-size:8px;color:#7f8288;">Folder</div>
<div class="t" style="left:1659px;top:86px;font-size:8px;color:#e6e7ea;">Vendor</div>
<div class="t" style="left:1695px;top:86px;font-size:8px;color:#7f8288;">Type</div>
<svg style="left:1788px;top:85px" width="10" height="10"><path d="M1 2 Q3 0 5 2 L9 8 L8 9 L4 5 Q1 5 1 2" fill="#c9ccd0"/></svg>
<div class="a" style="left:1803px;top:85px;width:11px;height:9px;border:1.5px solid #d6d8dc;border-top-width:2.5px"></div>
<svg style="left:1819px;top:85px" width="10" height="10"><path d="M0 1H10M2 4H10M4 7H10M6 9.5H10" stroke="#d6d8dc" stroke-width="1.5"/></svg>
<div class="a" style="left:1555px;top:562px;width:273px;height:340px;background:#2a2c30;"></div>
<div class="a" style="left:1822px;top:570px;width:4px;height:203px;background:#45484d;border-radius:2px"></div>
<svg style="left:1819px;top:895px" width="7" height="5"><polygon points="0,0 7,0 3.5,4" fill="#5a5d62"/></svg>
<svg style="left:1589px;top:562px" width="77" height="30"><rect width="77" height="30" fill="#2d3033"/><rect width="77" height="30" fill="#1c1f23"/><rect x="0" y="0" width="4" height="30" fill="#d8d8d6"/><rect x="0.5" y="1" width="3" height="0.6" fill="#888"/><rect x="0.5" y="4" width="3" height="0.6" fill="#888"/><rect x="0.5" y="7" width="3" height="0.6" fill="#888"/><rect x="0.5" y="10" width="3" height="0.6" fill="#888"/><rect x="0.5" y="13" width="3" height="0.6" fill="#888"/><rect x="0.5" y="16" width="3" height="0.6" fill="#888"/><rect x="0.5" y="19" width="3" height="0.6" fill="#888"/><rect x="0.5" y="22" width="3" height="0.6" fill="#888"/><rect x="0.5" y="25" width="3" height="0.6" fill="#888"/><rect x="0.5" y="28" width="3" height="0.6" fill="#888"/><rect x="5.0" y="1.0" width="10.5" height="8.7" fill="#23282d" stroke="#3a4048" stroke-width="0.6"/><rect x="5.0" y="10.7" width="10.5" height="8.7" fill="#23282d" stroke="#3a4048" stroke-width="0.6"/><rect x="5.0" y="20.4" width="10.5" height="8.7" fill="#23282d" stroke="#8a6a3a" stroke-width="0.6"/><rect x="16.5" y="1.0" width="10.5" height="8.7" fill="#23282d" stroke="#3a4048" stroke-width="0.6"/><rect x="16.5" y="10.7" width="10.5" height="8.7" fill="#23282d" stroke="#3a4048" stroke-width="0.6"/><rect x="16.5" y="20.4" width="10.5" height="8.7" fill="#23282d" stroke="#3a4048" stroke-width="0.6"/><rect x="28.0" y="1.0" width="10.5" height="8.7" fill="#23282d" stroke="#3a4048" stroke-width="0.6"/><rect x="28.0" y="10.7" width="10.5" height="8.7" fill="#23282d" stroke="#3a4048" stroke-width="0.6"/><rect x="28.0" y="20.4" width="10.5" height="8.7" fill="#23282d" stroke="#3a4048" stroke-width="0.6"/><rect x="39.5" y="1.0" width="10.5" height="8.7" fill="#23282d" stroke="#3a4048" stroke-width="0.6"/><rect x="39.5" y="10.7" width="10.5" height="8.7" fill="#23282d" stroke="#3a4048" stroke-width="0.6"/><rect x="39.5" y="20.4" width="10.5" height="8.7" fill="#23282d" stroke="#8a6a3a" stroke-width="0.6"/><rect x="51" y="0" width="26" height="30" fill="#cfcfcd"/><rect x="51" y="14.5" width="26" height="1" fill="#9a9a98"/><g fill="#2a2a2a"><circle cx="55" cy="6" r="2.8"/><circle cx="61" cy="6" r="1.8"/><circle cx="61" cy="11" r="1.8"/><circle cx="56" cy="23" r="2.8"/><circle cx="62" cy="23" r="1.8"/><rect x="65" y="2" width="1" height="9"/><rect x="67" y="2" width="1" height="9"/><rect x="69" y="2" width="1" height="9"/><rect x="65" y="18" width="1" height="9"/><rect x="67" y="18" width="1" height="9"/><rect x="69" y="18" width="1" height="9"/><circle cx="73" cy="5" r="1.3"/><circle cx="73" cy="10" r="1.3"/><rect x="72" y="11" width="4" height="2"/></g><circle cx="55" cy="6" r="1.8" fill="#4a7ab8"/><circle cx="74" cy="25" r="1.2" fill="#3a6ab8"/></svg>
<svg style="left:1582px;top:601px" width="5" height="6"><polygon points="0,0 4,3 0,6" fill="#d0d3d7"/></svg>
<svg style="left:1589px;top:598px" width="12" height="12"><rect width="12" height="12" rx="1" fill="#e6e7ea"/><g fill="#2a2c30"><rect x="2.5" y="0" width="1.4" height="7"/><rect x="5.5" y="0" width="1.4" height="7"/><rect x="8.5" y="0" width="1.4" height="7"/></g></svg>
<div class="t" style="left:1605px;top:600px;font-size:8.5px;color:#d6d8dc;">Mai Tai</div>
<svg style="left:1589px;top:615px" width="89" height="45"><rect width="89" height="45" fill="#2d3033"/><rect width="89" height="45" fill="#2b2d30"/><rect x="0" y="0" width="29" height="45" fill="#3a3c3f"/><rect x="30" y="0" width="27" height="45" fill="#333538"/><rect x="58" y="0" width="25" height="45" fill="#3b4552"/><rect x="84" y="0" width="5" height="45" fill="#3a3c3f"/><rect x="0" y="1" width="29" height="2" fill="#55585c"/><rect x="0" y="17" width="29" height="2" fill="#55585c"/><rect x="31" y="1" width="14" height="3" fill="#1a1b1d"/><rect x="31" y="9" width="26" height="2" fill="#55585c"/><rect x="31" y="25" width="26" height="2" fill="#55585c"/><rect x="31" y="35" width="26" height="2" fill="#55585c"/><circle cx="5" cy="8" r="3.8" fill="#d6d6d6"/><circle cx="5" cy="25" r="3.8" fill="#d6d6d6"/><circle cx="40" cy="19" r="4" fill="#d6d6d6"/><rect x="0" y="34" width="12" height="10" fill="#8e8f90"/><circle cx="14" cy="6" r="1.7" fill="#17181a" stroke="#8a6a3a" stroke-width="0.4"/><circle cx="14" cy="12" r="1.7" fill="#17181a" stroke="#8a6a3a" stroke-width="0.4"/><circle cx="14" cy="23" r="1.7" fill="#17181a" stroke="#8a6a3a" stroke-width="0.4"/><circle cx="14" cy="29" r="1.7" fill="#17181a" stroke="#8a6a3a" stroke-width="0.4"/><circle cx="14" cy="39" r="1.7" fill="#17181a" stroke="#8a6a3a" stroke-width="0.4"/><circle cx="19" cy="6" r="1.7" fill="#17181a" stroke="#8a6a3a" stroke-width="0.4"/><circle cx="19" cy="12" r="1.7" fill="#17181a" stroke="#8a6a3a" stroke-width="0.4"/><circle cx="19" cy="23" r="1.7" fill="#17181a" stroke="#8a6a3a" stroke-width="0.4"/><circle cx="19" cy="29" r="1.7" fill="#17181a" stroke="#8a6a3a" stroke-width="0.4"/><circle cx="19" cy="39" r="1.7" fill="#17181a" stroke="#8a6a3a" stroke-width="0.4"/><circle cx="24" cy="6" r="1.7" fill="#17181a" stroke="#8a6a3a" stroke-width="0.4"/><circle cx="24" cy="12" r="1.7" fill="#17181a" stroke="#8a6a3a" stroke-width="0.4"/><circle cx="24" cy="23" r="1.7" fill="#17181a" stroke="#8a6a3a" stroke-width="0.4"/><circle cx="24" cy="29" r="1.7" fill="#17181a" stroke="#8a6a3a" stroke-width="0.4"/><circle cx="24" cy="39" r="1.7" fill="#17181a" stroke="#8a6a3a" stroke-width="0.4"/><circle cx="47" cy="15" r="1.7" fill="#17181a"/><circle cx="47" cy="20" r="1.7" fill="#17181a"/><circle cx="47" cy="30" r="1.7" fill="#17181a"/><circle cx="47" cy="40" r="1.7" fill="#17181a"/><circle cx="52" cy="15" r="1.7" fill="#17181a"/><circle cx="52" cy="20" r="1.7" fill="#17181a"/><circle cx="52" cy="30" r="1.7" fill="#17181a"/><circle cx="52" cy="40" r="1.7" fill="#17181a"/><path d="M59 1 L60 1 Q63 11 82 11 L82 13 L59 13 Z" fill="#6f8fb4"/><rect x="59" y="12" width="23" height="2.5" fill="#26282b"/><path d="M59 16 L60 16 Q63 26 82 26 L82 28 L59 28 Z" fill="#6f8fb4"/><rect x="59" y="27" width="23" height="2.5" fill="#26282b"/><path d="M59 31 L60 31 Q63 41 82 41 L82 43 L59 43 Z" fill="#6f8fb4"/><rect x="59" y="42" width="23" height="2.5" fill="#26282b"/><circle cx="86" cy="5" r="1.6" fill="#17181a"/><circle cx="86" cy="12" r="1.6" fill="#17181a"/><rect x="84.5" y="17" width="3.5" height="2" fill="#ddd"/><circle cx="86" cy="25" r="1.6" fill="#17181a"/></svg>
<svg style="left:1582px;top:670px" width="5" height="6"><polygon points="0,0 4,3 0,6" fill="#d0d3d7"/></svg>
<svg style="left:1589px;top:667px" width="12" height="12"><rect width="12" height="12" rx="1" fill="#e6e7ea"/><g fill="#2a2c30"><rect x="2.5" y="0" width="1.4" height="7"/><rect x="5.5" y="0" width="1.4" height="7"/><rect x="8.5" y="0" width="1.4" height="7"/></g></svg>
<div class="t" style="left:1605px;top:669px;font-size:8.5px;color:#d6d8dc;">Mojito</div>
<svg style="left:1589px;top:684px" width="70" height="23"><rect width="70" height="23" fill="#2d3033"/><rect width="70" height="23" fill="#d3d7d7"/><rect x="1" y="1" width="68" height="21" fill="none" stroke="#b5b9b9" stroke-width="0.6"/><circle cx="45" cy="8" r="5" fill="#f6f6f6" stroke="#555" stroke-width="1"/><circle cx="45" cy="8" r="6" fill="none" stroke="#8fd8b8" stroke-width="0.6"/><circle cx="5" cy="5" r="1.9" fill="#eeeeee" stroke="#555" stroke-width="0.8"/><circle cx="5" cy="11" r="1.9" fill="#eeeeee" stroke="#555" stroke-width="0.8"/><circle cx="10" cy="5" r="1.9" fill="#eeeeee" stroke="#555" stroke-width="0.8"/><circle cx="10" cy="11" r="1.9" fill="#eeeeee" stroke="#555" stroke-width="0.8"/><circle cx="15" cy="5" r="1.9" fill="#eeeeee" stroke="#555" stroke-width="0.8"/><circle cx="15" cy="11" r="1.9" fill="#eeeeee" stroke="#555" stroke-width="0.8"/><circle cx="21" cy="5" r="1.9" fill="#eeeeee" stroke="#555" stroke-width="0.8"/><circle cx="21" cy="11" r="1.9" fill="#eeeeee" stroke="#555" stroke-width="0.8"/><circle cx="27" cy="5" r="1.9" fill="#eeeeee" stroke="#555" stroke-width="0.8"/><circle cx="27" cy="11" r="1.9" fill="#eeeeee" stroke="#555" stroke-width="0.8"/><circle cx="33" cy="5" r="1.9" fill="#eeeeee" stroke="#555" stroke-width="0.8"/><circle cx="33" cy="11" r="1.9" fill="#eeeeee" stroke="#555" stroke-width="0.8"/><circle cx="56" cy="5" r="1.9" fill="#f0f0f0" stroke="#3a8a6a" stroke-width="1"/><circle cx="56" cy="12" r="1.9" fill="#f0f0f0" stroke="#3a8a6a" stroke-width="1"/><circle cx="63" cy="5" r="1.9" fill="#f0f0f0" stroke="#3a8a6a" stroke-width="1"/><circle cx="63" cy="12" r="1.9" fill="#f0f0f0" stroke="#3a8a6a" stroke-width="1"/><rect x="29" y="15" width="8" height="3" fill="#7fd9a6"/><g fill="#444"><circle cx="12" cy="18" r="1.4"/><circle cx="39" cy="19" r="1.6"/><circle cx="46" cy="19" r="1.6"/><circle cx="53" cy="19" r="1.6"/><rect x="21" y="15" width="1" height="7"/><rect x="24" y="15" width="1" height="7"/></g></svg>
<svg style="left:1582px;top:717px" width="5" height="6"><polygon points="0,0 4,3 0,6" fill="#d0d3d7"/></svg>
<svg style="left:1589px;top:714px" width="12" height="12"><rect width="12" height="12" rx="1" fill="#e6e7ea"/><g fill="#2a2c30"><rect x="2.5" y="0" width="1.4" height="7"/><rect x="5.5" y="0" width="1.4" height="7"/><rect x="8.5" y="0" width="1.4" height="7"/></g></svg>
<div class="t" style="left:1605px;top:716px;font-size:8.5px;color:#d6d8dc;">Presence</div>
<svg style="left:1589px;top:732px" width="89" height="37"><rect width="89" height="37" fill="#2d3033"/><rect width="89" height="37" fill="#2a2c2e"/><rect x="1" y="1" width="26" height="11" fill="#323437"/><rect x="1" y="13" width="26" height="11" fill="#323437"/><rect x="1" y="25" width="26" height="9" fill="#323437"/><rect x="6" y="2" width="2" height="1.5" fill="#ddd"/><rect x="6" y="14" width="2" height="1.5" fill="#ddd"/><circle cx="5" cy="29" r="2.2" fill="#151617"/><circle cx="11" cy="29" r="2.2" fill="#151617"/><circle cx="17" cy="29" r="2.2" fill="#151617"/><circle cx="23" cy="29" r="2.2" fill="#151617"/><rect x="29" y="1" width="26" height="16" fill="#323437"/><circle cx="34" cy="9" r="3.5" fill="#dcdcdc"/><circle cx="43" cy="5" r="1.6" fill="#151617"/><circle cx="43" cy="12" r="1.6" fill="#151617"/><circle cx="50" cy="5" r="1.6" fill="#151617"/><circle cx="50" cy="12" r="1.6" fill="#151617"/><rect x="29" y="18" width="26" height="18" fill="#c4c4c2"/><circle cx="33" cy="29" r="2.4" fill="none" stroke="#333" stroke-width="1"/><circle cx="39" cy="29" r="2.4" fill="none" stroke="#333" stroke-width="1"/><circle cx="45" cy="29" r="2.4" fill="none" stroke="#333" stroke-width="1"/><circle cx="51" cy="29" r="2.4" fill="none" stroke="#333" stroke-width="1"/><rect x="57" y="1" width="24" height="16" fill="#3c3f42"/><path d="M58 2 L59 2 Q61 13 80 14 L80 15 L58 15 Z" fill="#6f8fb4"/><rect x="57" y="19" width="24" height="16" fill="#3c3f42"/><rect x="58" y="20" width="6" height="12" fill="#6f8fb4"/><rect x="83" y="1" width="5" height="35" fill="#323437"/><rect x="83.5" y="15" width="4" height="2" fill="#ddd"/></svg>
<svg style="left:1582px;top:782px" width="5" height="6"><polygon points="0,0 4,3 0,6" fill="#d0d3d7"/></svg>
<svg style="left:1589px;top:779px" width="12" height="12"><rect width="12" height="12" rx="1" fill="#e6e7ea"/><g fill="#2a2c30"><rect x="2.5" y="0" width="1.4" height="7"/><rect x="5.5" y="0" width="1.4" height="7"/><rect x="8.5" y="0" width="1.4" height="7"/></g></svg>
<div class="t" style="left:1605px;top:781px;font-size:8.5px;color:#d6d8dc;">SampleOne</div>
<svg style="left:1589px;top:793px" width="90" height="46"><rect width="90" height="46" fill="#2d3033"/><rect width="90" height="46" fill="#141517"/><rect x="0" y="0" width="90" height="3" fill="#c8c8c8"/><rect x="0" y="3" width="90" height="2" fill="#25282b"/><rect x="39" y="5" width="19" height="20" fill="#050506"/><g transform="translate(0 2)"><rect x="1.0" y="12.0" width="1.1" height="2.0" fill="#4aa8e4"/><rect x="2.4" y="9.5" width="1.1" height="7.0" fill="#4aa8e4"/><rect x="3.8" y="9.0" width="1.1" height="8.0" fill="#4aa8e4"/><rect x="5.2" y="9.5" width="1.1" height="7.0" fill="#4aa8e4"/><rect x="6.6" y="10.0" width="1.1" height="6.0" fill="#4aa8e4"/><rect x="8.0" y="10.0" width="1.1" height="6.0" fill="#4aa8e4"/><rect x="9.4" y="10.5" width="1.1" height="5.0" fill="#4aa8e4"/><rect x="10.8" y="10.5" width="1.1" height="5.0" fill="#4aa8e4"/><rect x="12.2" y="10.8" width="1.1" height="4.4" fill="#4aa8e4"/><rect x="13.6" y="11.0" width="1.1" height="4.0" fill="#4aa8e4"/><rect x="15.0" y="11.0" width="1.1" height="4.0" fill="#4aa8e4"/><rect x="16.4" y="11.2" width="1.1" height="3.6" fill="#4aa8e4"/><rect x="17.8" y="11.2" width="1.1" height="3.6" fill="#4aa8e4"/><rect x="19.2" y="11.4" width="1.1" height="3.2" fill="#4aa8e4"/><rect x="20.6" y="11.4" width="1.1" height="3.2" fill="#4aa8e4"/><rect x="22.0" y="11.5" width="1.1" height="3.0" fill="#4aa8e4"/><rect x="23.4" y="11.5" width="1.1" height="3.0" fill="#4aa8e4"/><rect x="24.8" y="11.6" width="1.1" height="2.8" fill="#4aa8e4"/><rect x="26.2" y="11.6" width="1.1" height="2.8" fill="#4aa8e4"/><rect x="27.6" y="11.7" width="1.1" height="2.6" fill="#4aa8e4"/><rect x="29.0" y="11.7" width="1.1" height="2.6" fill="#4aa8e4"/><rect x="30.4" y="11.8" width="1.1" height="2.4" fill="#4aa8e4"/><rect x="31.8" y="10.5" width="1.1" height="5.0" fill="#4aa8e4"/><rect x="33.2" y="12.0" width="1.1" height="2.0" fill="#4aa8e4"/><rect x="34.6" y="12.0" width="1.1" height="2.0" fill="#4aa8e4"/><rect x="36.0" y="10.0" width="1.1" height="6.0" fill="#4aa8e4"/><rect x="37.4" y="12.0" width="1.1" height="2.0" fill="#4aa8e4"/><rect x="38.8" y="12.0" width="1.1" height="2.0" fill="#4aa8e4"/><rect x="40.2" y="10.0" width="1.1" height="6.0" fill="#4aa8e4"/><rect x="41.6" y="12.0" width="1.1" height="2.0" fill="#4aa8e4"/><rect x="43.0" y="12.0" width="1.1" height="2.0" fill="#4aa8e4"/><rect x="44.4" y="10.0" width="1.1" height="6.0" fill="#4aa8e4"/><rect x="45.8" y="12.0" width="1.1" height="2.0" fill="#4aa8e4"/><rect x="47.2" y="12.0" width="1.1" height="2.0" fill="#4aa8e4"/><rect x="48.6" y="10.0" width="1.1" height="6.0" fill="#4aa8e4"/><rect x="50.0" y="12.0" width="1.1" height="2.0" fill="#4aa8e4"/><rect x="51.4" y="12.0" width="1.1" height="2.0" fill="#4aa8e4"/><rect x="52.8" y="10.0" width="1.1" height="6.0" fill="#4aa8e4"/><rect x="54.2" y="12.0" width="1.1" height="2.0" fill="#4aa8e4"/><rect x="55.6" y="12.0" width="1.1" height="2.0" fill="#4aa8e4"/><rect x="57.0" y="10.0" width="1.1" height="6.0" fill="#4aa8e4"/><rect x="58.4" y="12.0" width="1.1" height="2.0" fill="#4aa8e4"/><rect x="59.8" y="12.0" width="1.1" height="2.0" fill="#4aa8e4"/><rect x="61.2" y="10.0" width="1.1" height="6.0" fill="#4aa8e4"/><rect x="62.6" y="12.0" width="1.1" height="2.0" fill="#4aa8e4"/><rect x="64.0" y="12.0" width="1.1" height="2.0" fill="#4aa8e4"/><rect x="65.4" y="10.0" width="1.1" height="6.0" fill="#4aa8e4"/><rect x="66.8" y="12.0" width="1.1" height="2.0" fill="#4aa8e4"/><rect x="68.2" y="12.0" width="1.1" height="2.0" fill="#4aa8e4"/><rect x="69.6" y="10.5" width="1.1" height="5.0" fill="#4aa8e4"/><rect x="71.0" y="12.5" width="1.1" height="1.0" fill="#4aa8e4"/><rect x="72.4" y="12.5" width="1.1" height="1.0" fill="#4aa8e4"/></g><rect x="64" y="5" width="25" height="20" fill="#1d2024"/><rect x="66" y="6.0" width="20" height="0.7" fill="#555a60"/><rect x="66" y="8.2" width="20" height="0.7" fill="#555a60"/><rect x="66" y="10.4" width="20" height="0.7" fill="#555a60"/><rect x="66" y="12.6" width="20" height="0.7" fill="#555a60"/><rect x="66" y="14.8" width="20" height="0.7" fill="#555a60"/><rect x="66" y="17.0" width="20" height="0.7" fill="#555a60"/><rect x="66" y="19.2" width="20" height="0.7" fill="#555a60"/><rect x="66" y="21.4" width="20" height="0.7" fill="#555a60"/><rect x="66" y="23.6" width="20" height="0.7" fill="#555a60"/><rect x="64" y="23" width="25" height="2" fill="#4a8fc8"/><rect x="0" y="25" width="90" height="2" fill="#25282b"/><rect x="0" y="27" width="90" height="19" fill="#c9c9c7"/><circle cx="4" cy="32" r="2.5" fill="#222"/><circle cx="9" cy="32" r="1.8" fill="#222"/><circle cx="29" cy="32" r="2.5" fill="#222"/><circle cx="34" cy="32" r="1.8" fill="#222"/><circle cx="57" cy="32" r="2.5" fill="#222"/><circle cx="62" cy="32" r="1.8" fill="#222"/><circle cx="84" cy="32" r="1.8" fill="#222"/><rect x="13" y="29" width="1" height="7" fill="#333"/><rect x="15" y="29" width="1" height="7" fill="#333"/><rect x="17" y="29" width="1" height="7" fill="#333"/><rect x="38" y="29" width="1" height="7" fill="#333"/><rect x="40" y="29" width="1" height="7" fill="#333"/><rect x="42" y="29" width="1" height="7" fill="#333"/><rect x="66" y="29" width="1" height="7" fill="#333"/><rect x="68" y="29" width="1" height="7" fill="#333"/><rect x="70" y="29" width="1" height="7" fill="#333"/><circle cx="36" cy="41" r="1.6" fill="#222"/><circle cx="40" cy="41" r="1.6" fill="#222"/><circle cx="44" cy="41" r="1.6" fill="#222"/><circle cx="62" cy="41" r="1.6" fill="#222"/><circle cx="66" cy="41" r="1.6" fill="#222"/><circle cx="80" cy="41" r="1.6" fill="#222"/><rect x="1" y="38" width="5" height="6" fill="#333"/><rect x="29" y="38" width="5" height="4" fill="#334"/><rect x="51" y="38" width="5" height="4" fill="#334"/><rect x="26" y="27" width="1" height="19" fill="#888"/><rect x="53" y="27" width="1" height="19" fill="#888"/></svg>
<svg style="left:1573px;top:849px" width="5" height="6"><polygon points="0,0 4,3 0,6" fill="#d0d3d7"/></svg>
<svg style="left:1580px;top:847px" width="12" height="10"><path d="M0 1 L4 1 L5 2.5 L12 2.5 L12 10 L0 10 Z" fill="#d6d8dc"/></svg>
<div class="t" style="left:1595px;top:848px;font-size:8.5px;color:#d6d8dc;">Reason Studios</div>
<svg style="left:1573px;top:864px" width="5" height="6"><polygon points="0,0 4,3 0,6" fill="#d0d3d7"/></svg>
<svg style="left:1580px;top:862px" width="12" height="10"><path d="M0 1 L4 1 L5 2.5 L12 2.5 L12 10 L0 10 Z" fill="#d6d8dc"/></svg>
<div class="t" style="left:1595px;top:863px;font-size:8.5px;color:#d6d8dc;">ReWire</div>
<svg style="left:1573px;top:879px" width="5" height="6"><polygon points="0,0 4,3 0,6" fill="#d0d3d7"/></svg>
<svg style="left:1580px;top:877px" width="12" height="10"><path d="M0 1 L4 1 L5 2.5 L12 2.5 L12 10 L0 10 Z" fill="#d6d8dc"/></svg>
<div class="t" style="left:1595px;top:878px;font-size:8.5px;color:#d6d8dc;">Roland Cloud</div>
<svg style="left:1573px;top:895px" width="5" height="6"><polygon points="0,0 4,3 0,6" fill="#d0d3d7"/></svg>
<svg style="left:1580px;top:893px" width="12" height="10"><path d="M0 1 L4 1 L5 2.5 L12 2.5 L12 10 L0 10 Z" fill="#d6d8dc"/></svg>
<div class="t" style="left:1595px;top:894px;font-size:8.5px;color:#d6d8dc;">ROLI</div>
<div class="a" style="left:1555px;top:902px;width:273px;height:70px;background:#393b40;"></div>
<svg style="left:1561px;top:911px" width="24" height="18"><path d="M0 2 Q0 0 2 0 L8 0 L10 3 L22 3 Q24 3 24 5 L24 16 Q24 18 22 18 L2 18 Q0 18 0 16 Z" fill="#e4e5e7"/><path d="M0 6 L24 6" stroke="#c8c9cc"/></svg>
<div class="t" style="left:1591px;top:908px;font-size:10.5px;color:#e6e7ea;">Loopmasters</div>
<div class="t" style="left:1591px;top:922px;font-size:7.5px;color:#c9ccd0;">/Instruments/Loopmasters</div>
<div class="a" style="left:1072px;top:99px;width:758px;height:464px;background:#3a3c40;"></div>
<div class="a" style="left:1073px;top:100px;width:757px;height:14px;background:#2e3034;"></div>
<div class="t" style="left:1076px;top:103px;font-size:8.5px;color:#c9ccd0;">Editor</div>
<svg style="left:1762px;top:101px" width="9" height="11"><path d="M2 1 L7 1 L6.5 5 L8 6.5 L1 6.5 L2.5 5 Z" fill="#4a9ee6"/><path d="M4.5 6.5 L4.5 10" stroke="#4a9ee6"/></svg>
<svg style="left:1781px;top:102px" width="10" height="10"><path d="M9 1 L3 7" stroke="#c8cbd0" stroke-width="1.6"/><polygon points="1,9 1,4 6,9" fill="#c8cbd0"/></svg>
<svg style="left:1798px;top:101px" width="11" height="11"><rect x="0.5" y="4" width="6.5" height="6.5" fill="none" stroke="#c8cbd0" stroke-width="1.3"/><rect x="4" y="0.5" width="6.5" height="6.5" fill="#c8cbd0"/></svg>
<svg style="left:1817px;top:102px" width="9" height="9"><path d="M1 1 L8 8 M8 1 L1 8" stroke="#d0d3d7" stroke-width="1.6"/></svg>
<div class="a" style="left:1073px;top:114px;width:757px;height:24px;background:#5e6269;"></div>
<div class="a" style="left:1073px;top:138px;width:757px;height:1.5px;background:#1b1c1f;"></div>
<div class="a" style="left:1119px;top:114px;width:22px;height:24px;background:#4a8fd1;"></div>
<svg style="left:1080px;top:119px" width="10" height="14"><rect x="1" y="1" width="7" height="11" fill="#e9ebee"/><g fill="#5e6269"><rect x="1" y="3" width="3" height="1.5"/><rect x="1" y="6" width="3" height="1.5"/><rect x="1" y="9" width="3" height="1.5"/></g></svg>
<svg style="left:1100px;top:119px" width="14" height="13"><path d="M1 1 L6 5 M13 1 L8 5" stroke="#e2e4e7" stroke-width="1"/><ellipse cx="7" cy="6.5" rx="5.5" ry="2" fill="none" stroke="#e2e4e7" stroke-width="1.2"/><path d="M1.5 6.5 L1.5 10 Q7 13 12.5 10 L12.5 6.5" fill="none" stroke="#e2e4e7" stroke-width="1.2"/></svg>
<svg style="left:1125px;top:117px" width="10" height="18"><path d="M5 16 Q7 17 6.5 14 L4.5 2 Q5 0 6.5 1.5 Q8 4 3 8 Q0 11 3 13 Q6 14 7 11 Q7 8 4 9" stroke="#e9ebee" stroke-width="1.1" fill="none"/></svg>
<div class="a" style="left:1184px;top:114px;width:23px;height:24px;background:#4a8fd1;"></div>
<svg style="left:1190px;top:118px" width="12" height="15"><path d="M1 1 L1 12 L4 9 L6.5 14 L8.5 13 L6 8 L10 8 Z" fill="#e9ebee"/></svg>
<svg style="left:1212px;top:119px" width="14" height="14"><path d="M2 12 L3 9 L11 1 L13 3 L5 11 Z" fill="#e2e4e7"/></svg>
<div class="a" style="left:1233px;top:114px;width:57px;height:24px;background:#54585f;"></div>
<div class="t" style="left:1241px;top:122px;font-size:9.5px;color:#e6e7ea;">Action</div>
<svg style="left:1272px;top:124px" width="8" height="5"><polygon points="0,0 7,0 3.5,4" fill="#e2e4e7"/></svg>
<div class="a" style="left:1290px;top:114px;width:3px;height:24px;background:#4b4e54;"></div>
<div class="a" style="left:1474px;top:114px;width:3px;height:24px;background:#4b4e54;"></div>
<div class="a" style="left:1502px;top:114px;width:3px;height:24px;background:#4b4e54;"></div>
<div class="a" style="left:1557px;top:114px;width:59px;height:24px;background:#54585f;"></div>
<div class="a" style="left:1616px;top:114px;width:24px;height:24px;background:#4a8fd1;"></div>
<svg style="left:1299px;top:118px" width="175" height="18"><ellipse cx="6" cy="13.5" rx="2.8" ry="1.9" fill="none" stroke="#e6e8eb" stroke-width="1.6"/><ellipse cx="30" cy="13" rx="2.8" ry="2" fill="none" stroke="#e6e8eb" stroke-width="1" transform="rotate(-20 30 13)"/><path d="M32.5 12 L32.5 2" stroke="#e6e8eb"/><ellipse cx="56" cy="13" rx="2.8" ry="2" fill="#e6e8eb" transform="rotate(-20 56 13)"/><path d="M58.5 12 L58.5 2" stroke="#e6e8eb"/><ellipse cx="82" cy="13" rx="2.8" ry="2" fill="#e6e8eb" transform="rotate(-20 82 13)"/><path d="M84.5 12 L84.5 2 Q88 5 88 8" stroke="#e6e8eb" fill="none"/><ellipse cx="108" cy="13" rx="2.8" ry="2" fill="#e6e8eb" transform="rotate(-20 108 13)"/><path d="M110.5 12 L110.5 2 Q114 4 114 6 M110.5 5 Q114 7 114 9" stroke="#e6e8eb" fill="none"/><ellipse cx="134" cy="13" rx="2.8" ry="2" fill="#e6e8eb" transform="rotate(-20 134 13)"/><path d="M136.5 12 L136.5 2 Q140 3 140 5 M136.5 5 Q140 6 140 8 M136.5 8 Q140 9 140 11" stroke="#e6e8eb" fill="none"/><ellipse cx="160" cy="13" rx="2.8" ry="2" fill="#e6e8eb" transform="rotate(-20 160 13)"/><path d="M162.5 12 L162.5 1 Q166 2 166 4 M162.5 3.5 Q166 4.5 166 6.5 M162.5 6 Q166 7 166 9 M162.5 8.5 Q166 9.5 166 11" stroke="#e6e8eb" fill="none"/></svg>
<svg style="left:1485px;top:118px" width="8" height="16"><path d="M3 1 L6 5 L3 8 L6 11 Q2 10 3 14" stroke="#e6e8eb" stroke-width="1.4" fill="none"/></svg>
<svg style="left:1513px;top:124px" width="40" height="6"><circle cx="4" cy="3" r="1.3" fill="#e6e8eb"/><circle cx="29" cy="3" r="1.3" fill="#e6e8eb"/><circle cx="34" cy="3" r="1.3" fill="#e6e8eb"/></svg>
<svg style="left:1564px;top:121px" width="20" height="9"><path d="M1 2 L5 2 L6 5 L9 5 L10.5 7.5 L12.5 5 L15.5 5 L17 2 L20 2" stroke="#e6e8eb" stroke-width="1.9" fill="none" stroke-dasharray="2.6 1.4"/></svg>
<div class="t" style="left:1591px;top:120px;font-size:12px;color:#aeb1b6;">«</div>
<svg style="left:1619px;top:118px" width="18" height="16"><path d="M1 6 L8 6 L8 3 L13 7.5 L8 12 L8 9 L1 9 Z" fill="#e9ebee"/><path d="M14.5 1 L14.5 15" stroke="#9aa3ad" stroke-width="1.5"/></svg>
<div class="a" style="left:1073px;top:139px;width:111px;height:423px;background:#26282b;"></div>
<div class="a" style="left:1073px;top:139px;width:111px;height:20px;background:#2f3135;"></div>
<svg style="left:1079px;top:145px" width="11" height="9"><g stroke="#c9ccd0" stroke-width="1"><path d="M0 0.5H10M0 2.5H10M0 4.5H10M0 6.5H10M0 8.5H10"/></g></svg>
<div class="a" style="left:1075px;top:161px;width:5px;height:14px;background:#3a3d42;"></div>
<div class="a" style="left:1075px;top:161px;width:5px;height:14px;background:#d4a040;"></div>
<div class="a" style="left:1080px;top:161px;width:96px;height:14px;background:#3f4247;"></div>
<svg style="left:1082px;top:165px" width="6" height="6"><circle cx="3" cy="3" r="2.2" fill="#e8e9ec"/></svg>
<div class="a" style="left:1092px;top:161px;width:5px;height:14px;background:#d08763;"></div>
<div class="t" style="left:1107px;top:164px;font-size:8.5px;color:#e6e7ea;">Flutes</div>
<div class="a" style="left:1075px;top:176px;width:5px;height:14px;background:#3a3d42;"></div>
<svg style="left:1082px;top:180px" width="6" height="6"><circle cx="3" cy="3" r="2.2" fill="#55585d"/></svg>
<div class="a" style="left:1092px;top:176px;width:5px;height:14px;background:#6b4636;"></div>
<div class="t" style="left:1107px;top:179px;font-size:8.5px;color:#5f6268;">Clarinets</div>
<div class="a" style="left:1075px;top:192px;width:5px;height:14px;background:#3a3d42;"></div>
<div class="a" style="left:1075px;top:192px;width:5px;height:14px;background:#d4a040;"></div>
<svg style="left:1082px;top:196px" width="6" height="6"><circle cx="3" cy="3" r="2.2" fill="#55585d"/></svg>
<div class="a" style="left:1092px;top:192px;width:5px;height:14px;background:#6b4636;"></div>
<div class="t" style="left:1107px;top:195px;font-size:8.5px;color:#5f6268;">Bassoons</div>
<div class="a" style="left:1075px;top:207px;width:5px;height:14px;background:#3a3d42;"></div>
<svg style="left:1082px;top:211px" width="6" height="6"><circle cx="3" cy="3" r="2.2" fill="#55585d"/></svg>
<div class="a" style="left:1092px;top:207px;width:5px;height:14px;background:#6d3a45;"></div>
<div class="t" style="left:1107px;top:210px;font-size:8.5px;color:#5f6268;">Trumpets</div>
<div class="a" style="left:1075px;top:223px;width:5px;height:14px;background:#3a3d42;"></div>
<div class="a" style="left:1075px;top:225.8px;width:5px;height:9.799999999999999px;background:#d4a040;"></div>
<svg style="left:1082px;top:227px" width="6" height="6"><circle cx="3" cy="3" r="2.2" fill="#55585d"/></svg>
<div class="a" style="left:1092px;top:223px;width:5px;height:14px;background:#6d3a45;"></div>
<div class="t" style="left:1107px;top:226px;font-size:8.5px;color:#5f6268;">Trombones</div>
<div class="a" style="left:1075px;top:238px;width:5px;height:14px;background:#3a3d42;"></div>
<div class="a" style="left:1075px;top:245.0px;width:5px;height:7.0px;background:#d4a040;"></div>
<svg style="left:1082px;top:242px" width="6" height="6"><circle cx="3" cy="3" r="2.2" fill="#55585d"/></svg>
<div class="a" style="left:1092px;top:238px;width:5px;height:14px;background:#6d3a45;"></div>
<div class="t" style="left:1107px;top:241px;font-size:8.5px;color:#5f6268;">Fr Horns</div>
<div class="a" style="left:1075px;top:254px;width:5px;height:14px;background:#3a3d42;"></div>
<svg style="left:1082px;top:258px" width="6" height="6"><circle cx="3" cy="3" r="2.2" fill="#55585d"/></svg>
<div class="a" style="left:1092px;top:254px;width:5px;height:14px;background:#2c5650;"></div>
<div class="t" style="left:1107px;top:257px;font-size:8.5px;color:#5f6268;">Timpani</div>
<div class="a" style="left:1075px;top:269px;width:5px;height:14px;background:#3a3d42;"></div>
<div class="a" style="left:1075px;top:273.2px;width:5px;height:9.799999999999999px;background:#d4a040;"></div>
<svg style="left:1082px;top:273px" width="6" height="6"><circle cx="3" cy="3" r="2.2" fill="#55585d"/></svg>
<div class="a" style="left:1092px;top:269px;width:5px;height:14px;background:#315a47;"></div>
<div class="t" style="left:1107px;top:272px;font-size:8.5px;color:#5f6268;">Glockenspiel</div>
<div class="a" style="left:1075px;top:285px;width:5px;height:14px;background:#3a3d42;"></div>
<svg style="left:1082px;top:289px" width="6" height="6"><circle cx="3" cy="3" r="2.2" fill="#55585d"/></svg>
<div class="a" style="left:1092px;top:285px;width:5px;height:14px;background:#315a47;"></div>
<div class="t" style="left:1107px;top:288px;font-size:8.5px;color:#5f6268;">Harp</div>
<div class="a" style="left:1075px;top:300px;width:5px;height:14px;background:#3a3d42;"></div>
<div class="a" style="left:1075px;top:300px;width:5px;height:14px;background:#d4a040;"></div>
<svg style="left:1082px;top:304px" width="6" height="6"><circle cx="3" cy="3" r="2.2" fill="#e8e9ec"/></svg>
<div class="a" style="left:1092px;top:300px;width:5px;height:14px;background:#4a9fdb;"></div>
<div class="t" style="left:1107px;top:303px;font-size:8.5px;color:#e6e7ea;">Violins</div>
<div class="a" style="left:1075px;top:316px;width:5px;height:14px;background:#3a3d42;"></div>
<div class="a" style="left:1075px;top:316px;width:5px;height:14px;background:#d4a040;"></div>
<svg style="left:1082px;top:320px" width="6" height="6"><circle cx="3" cy="3" r="2.2" fill="#e8e9ec"/></svg>
<div class="a" style="left:1092px;top:316px;width:5px;height:14px;background:#5cc2e9;"></div>
<div class="t" style="left:1107px;top:319px;font-size:8.5px;color:#e6e7ea;">Violas</div>
<div class="a" style="left:1075px;top:331px;width:5px;height:14px;background:#3a3d42;"></div>
<div class="a" style="left:1075px;top:339.4px;width:5px;height:4.200000000000001px;background:#d4a040;"></div>
<svg style="left:1082px;top:335px" width="6" height="6"><circle cx="3" cy="3" r="2.2" fill="#e8e9ec"/></svg>
<div class="a" style="left:1092px;top:331px;width:5px;height:14px;background:#5cc2e9;"></div>
<div class="t" style="left:1107px;top:334px;font-size:8.5px;color:#e6e7ea;">Cellos</div>
<div class="a" style="left:1075px;top:347px;width:5px;height:14px;background:#3a3d42;"></div>
<div class="a" style="left:1075px;top:347px;width:5px;height:14px;background:#d4a040;"></div>
<svg style="left:1082px;top:351px" width="6" height="6"><circle cx="3" cy="3" r="2.2" fill="#e8e9ec"/></svg>
<div class="a" style="left:1092px;top:347px;width:5px;height:14px;background:#5cc2e9;"></div>
<div class="t" style="left:1107px;top:350px;font-size:8.5px;color:#e6e7ea;">Basses</div>
<div class="a" style="left:1075px;top:362px;width:5px;height:14px;background:#3a3d42;"></div>
<svg style="left:1082px;top:366px" width="6" height="6"><circle cx="3" cy="3" r="2.2" fill="#55585d"/></svg>
<div class="a" style="left:1092px;top:362px;width:5px;height:14px;background:#2e5446;"></div>
<div class="t" style="left:1107px;top:365px;font-size:8.5px;color:#5f6268;">Cymbals</div>
<div class="a" style="left:1075px;top:377px;width:5px;height:14px;background:#3a3d42;"></div>
<svg style="left:1082px;top:381px" width="6" height="6"><circle cx="3" cy="3" r="2.2" fill="#55585d"/></svg>
<div class="a" style="left:1092px;top:377px;width:5px;height:14px;background:#2a4a8a;"></div>
<div class="t" style="left:1107px;top:380px;font-size:8.5px;color:#5f6268;">Piano</div>
<div class="a" style="left:1184px;top:139px;width:134px;height:423px;background:#26282b;"></div>
<div class="a" style="left:1184px;top:139px;width:134px;height:20px;background:#505359;"></div>
<div class="a" style="left:1184px;top:139px;width:9px;height:20px;background:#d08763;"></div>
<div class="t" style="left:1193px;top:145px;font-size:8.5px;color:#e6e7ea;width:116px;text-align:center;">Flutes</div>
<svg style="left:1307px;top:148px" width="7" height="5"><polygon points="0,0 6,0 3,4" fill="#a8abb0"/></svg>
<svg style="left:1188px;top:166px" width="9" height="7"><rect width="9" height="7" fill="#d0d3d7"/><g fill="#26282b"><rect x="1.5" y="0" width="1" height="4"/><rect x="4" y="0" width="1" height="4"/><rect x="6.5" y="0" width="1" height="4"/></g></svg>
<div class="t" style="left:1203px;top:165px;font-size:8px;color:#d6d8dc;">Instrument</div>
<div class="a" style="left:1284px;top:161px;width:16px;height:15px;background:#303236;"></div>
<div class="a" style="left:1301px;top:161px;width:17px;height:15px;background:#303236;"></div>
<div class="t" style="left:1284px;top:164px;font-size:9px;color:#9a9da2;width:16px;text-align:center;">M</div>
<div class="t" style="left:1301px;top:164px;font-size:9px;color:#9a9da2;width:17px;text-align:center;">S</div>
<div class="t" style="left:1188px;top:181px;font-size:8px;color:#d6d8dc;">Audition Notes</div>
<div class="a" style="left:1302px;top:177px;width:15px;height:15px;background:#303236;"></div>
<svg style="left:1304px;top:180px" width="10" height="9"><path d="M1.5 4.5 L4 7 L8.5 1.5" stroke="#eceef0" stroke-width="1.5" fill="none"/></svg>
<div class="t" style="left:1188px;top:197px;font-size:8px;color:#d6d8dc;">Default Velocity</div>
<div class="a" style="left:1288px;top:193px;width:29px;height:15px;background:#303236;"></div>
<div class="t" style="left:1288px;top:197px;font-size:8px;color:#d6d8dc;width:29px;text-align:center;">80%</div>
<div class="a" style="left:1184px;top:210px;width:134px;height:17px;background:#45484d;"></div>
<div class="t" style="left:1188px;top:214px;font-size:8.5px;color:#e6e7ea;">Musical Symbols</div>
<svg style="left:1184px;top:230px" width="134" height="125"><path d="M17 7 L17 20 M20 6 L20 19 M14.5 11 L22.5 10 M14.5 15 L22.5 14" stroke="#dfe1e4" stroke-width="1"/><text x="43" y="19" font-family="Liberation Serif" font-size="12" fill="#dfe1e4">♯/b</text><path d="M70 12 Q82 2 94 12" stroke="#dfe1e4" fill="none"/><path d="M72 12 L72 22 M92 12 L92 22" stroke="#dfe1e4"/><ellipse cx="74" cy="13" rx="2" ry="1.5" fill="none" stroke="#dfe1e4"/><ellipse cx="94" cy="13" rx="2" ry="1.5" fill="none" stroke="#dfe1e4"/><path d="M103 13 Q116 4 128 13" stroke="#dfe1e4" fill="none"/><g fill="#dfe1e4"><circle cx="106" cy="15" r="1.3"/><circle cx="112" cy="15" r="1.3"/><circle cx="118" cy="15" r="1.3"/><circle cx="124" cy="15" r="1.3"/></g><path d="M13 43 L22 47 L13 51" stroke="#dfe1e4" fill="none" stroke-width="1.2"/><text x="45" y="52" font-family="Liberation Serif" font-style="italic" font-weight="bold" font-size="11" fill="#dfe1e4">sf</text><text x="80" y="52" font-family="Liberation Serif" font-style="italic" font-weight="bold" font-size="12" fill="#dfe1e4">f</text><path d="M124 42 L108 47 L124 52" stroke="#dfe1e4" fill="none" stroke-width="1"/><text x="11" y="85" font-family="Liberation Serif" font-style="italic" font-size="13" fill="#dfe1e4">tr</text><path d="M51 74 L51 88 M47 78 L55 76 M47 81 L55 79 M47 84 L55 82" stroke="#dfe1e4" stroke-width="1.1"/><path d="M85 72 L82 76 L86 80 L82 84 L86 88" stroke="#dfe1e4" stroke-width="1.6" fill="none"/><path d="M108 86 L128 76" stroke="#dfe1e4" stroke-width="1"/><path d="M113 82 Q117 78 121 79" stroke="#dfe1e4" stroke-width="0.8" fill="none"/><text x="8" y="115" font-family="Liberation Serif" font-style="italic" font-size="6" fill="#dfe1e4">8va- - -</text></svg>
<div class="a" style="left:1183px;top:159px;width:1px;height:403px;background:#1f2023;"></div>
<div class="a" style="left:1318px;top:139px;width:502px;height:411px;background:#f1f2f1;"></div>
<div class="a" style="left:1820px;top:139px;width:9px;height:423px;background:#26282b;"></div>
<svg style="left:1821px;top:142px" width="7" height="6"><polygon points="0,5 3.5,0 7,5" fill="#6a6d72"/></svg>
<svg style="left:1821px;top:540px" width="7" height="6"><polygon points="0,0 3.5,5 7,0" fill="#6a6d72"/></svg>
<div class="a" style="left:1318px;top:550px;width:502px;height:12px;background:#26282b;"></div>
<svg style="left:1322px;top:552px" width="6" height="7"><polygon points="5,0 5,6 0,3" fill="#6a6d72"/></svg>
<div class="a" style="left:1389px;top:553px;width:7px;height:4px;background:#6a6d72;"></div>
<svg style="left:1734px;top:552px" width="6" height="7"><polygon points="0,0 0,6 5,3" fill="#6a6d72"/></svg>
<svg style="left:1746px;top:551px" width="72" height="10"><polygon points="0,8 4,3 8,8" fill="#6a6d72"/><line x1="10" y1="6" x2="50" y2="6" stroke="#6a6d72"/><rect x="26" y="3" width="2" height="6" fill="#6a6d72"/><polygon points="58,8 63,1 68,8" fill="#6a6d72"/></svg>
<svg style="left:0;top:0" width="1860" height="1042"><rect x="1388" y="139" width="1.6" height="411" fill="#b9bbba"/><rect x="1390" y="139" width="1" height="411" fill="#e0e2e1"/><rect x="1389" y="154" width="431" height="1.2" fill="#b5b7b6"/><rect x="1323" y="211.4" width="497" height="0.8" fill="#a3a5a4"/><rect x="1323" y="216.1" width="497" height="0.8" fill="#a3a5a4"/><rect x="1323" y="220.8" width="497" height="0.8" fill="#a3a5a4"/><rect x="1323" y="225.5" width="497" height="0.8" fill="#a3a5a4"/><rect x="1323" y="230.2" width="497" height="0.8" fill="#a3a5a4"/><g transform="translate(1326 211.4)"><path d="M8.5 27 L6.8 -4 Q7 -8 9.5 -5 Q11 -1 4 7 Q0 11 2.5 16 Q5 20 9.5 18 Q12.5 16 11 12.5 Q9 10 6 12 Q4.5 14 6.5 16" stroke="#111" stroke-width="1.7" fill="none"/><circle cx="6.5" cy="26.5" r="2" fill="#111"/></g><path d="M1342.5 212.8 L1342.5 223.3 Q1347.5 220.3 1345.9 218.20000000000002 Q1344.3 216.8 1342.5 219.3" stroke="#111" stroke-width="1.1" fill="none"/><path d="M1348 205.75 L1348 216.25 Q1353 213.25 1351.4 211.15 Q1349.8 209.75 1348 212.25" stroke="#111" stroke-width="1.1" fill="none"/><path d="M1353.5 215.15 L1353.5 225.65 Q1358.5 222.65 1356.9 220.55 Q1355.3 219.15 1353.5 221.65" stroke="#111" stroke-width="1.1" fill="none"/><text x="1362" y="220.6" font-family="Liberation Serif" font-weight="bold" font-size="12.5" fill="#111">4</text><text x="1362" y="230.0" font-family="Liberation Serif" font-weight="bold" font-size="12.5" fill="#111">4</text><rect x="1671" y="211.4" width="1" height="18.8" fill="#222"/><rect x="1323" y="270.9" width="497" height="0.8" fill="#a3a5a4"/><rect x="1323" y="275.6" width="497" height="0.8" fill="#a3a5a4"/><rect x="1323" y="280.3" width="497" height="0.8" fill="#a3a5a4"/><rect x="1323" y="285.0" width="497" height="0.8" fill="#a3a5a4"/><rect x="1323" y="289.7" width="497" height="0.8" fill="#a3a5a4"/><g transform="translate(1326 270.9)"><path d="M8.5 27 L6.8 -4 Q7 -8 9.5 -5 Q11 -1 4 7 Q0 11 2.5 16 Q5 20 9.5 18 Q12.5 16 11 12.5 Q9 10 6 12 Q4.5 14 6.5 16" stroke="#111" stroke-width="1.7" fill="none"/><circle cx="6.5" cy="26.5" r="2" fill="#111"/></g><path d="M1342.5 272.29999999999995 L1342.5 282.79999999999995 Q1347.5 279.79999999999995 1345.9 277.69999999999993 Q1344.3 276.29999999999995 1342.5 278.79999999999995" stroke="#111" stroke-width="1.1" fill="none"/><path d="M1348 265.25 L1348 275.75 Q1353 272.75 1351.4 270.65 Q1349.8 269.25 1348 271.75" stroke="#111" stroke-width="1.1" fill="none"/><path d="M1353.5 274.65 L1353.5 285.15 Q1358.5 282.15 1356.9 280.04999999999995 Q1355.3 278.65 1353.5 281.15" stroke="#111" stroke-width="1.1" fill="none"/><text x="1362" y="280.1" font-family="Liberation Serif" font-weight="bold" font-size="12.5" fill="#111">4</text><text x="1362" y="289.5" font-family="Liberation Serif" font-weight="bold" font-size="12.5" fill="#111">4</text><rect x="1671" y="270.9" width="1" height="18.8" fill="#222"/><rect x="1323" y="342.6" width="497" height="0.8" fill="#a3a5a4"/><rect x="1323" y="347.3" width="497" height="0.8" fill="#a3a5a4"/><rect x="1323" y="352.0" width="497" height="0.8" fill="#a3a5a4"/><rect x="1323" y="356.7" width="497" height="0.8" fill="#a3a5a4"/><rect x="1323" y="361.4" width="497" height="0.8" fill="#a3a5a4"/><g transform="translate(1325 342.6)"><rect x="0" y="-0.5" width="2.6" height="20" fill="#111"/><rect x="3.6" y="-0.5" width="1" height="20" fill="#111"/><path d="M5 9.4 L7 6 Q8 1 11 0.5 Q14 0.5 13.5 4 Q13 7 10 6.5 M5 9.4 L7 13 Q8 18 11 18.5 Q14 18.5 13.5 15 Q13 12 10 12.5" stroke="#111" stroke-width="1.5" fill="none"/></g><path d="M1342.5 346.35 L1342.5 356.85 Q1347.5 353.85 1345.9 351.75 Q1344.3 350.35 1342.5 352.85" stroke="#111" stroke-width="1.1" fill="none"/><path d="M1348 339.3 L1348 349.8 Q1353 346.8 1351.4 344.7 Q1349.8 343.3 1348 345.8" stroke="#111" stroke-width="1.1" fill="none"/><path d="M1353.5 348.70000000000005 L1353.5 359.20000000000005 Q1358.5 356.20000000000005 1356.9 354.1 Q1355.3 352.70000000000005 1353.5 355.20000000000005" stroke="#111" stroke-width="1.1" fill="none"/><text x="1362" y="351.8" font-family="Liberation Serif" font-weight="bold" font-size="12.5" fill="#111">4</text><text x="1362" y="361.2" font-family="Liberation Serif" font-weight="bold" font-size="12.5" fill="#111">4</text><rect x="1671" y="342.6" width="1" height="18.8" fill="#222"/><rect x="1323" y="417.9" width="497" height="0.8" fill="#a3a5a4"/><rect x="1323" y="422.6" width="497" height="0.8" fill="#a3a5a4"/><rect x="1323" y="427.3" width="497" height="0.8" fill="#a3a5a4"/><rect x="1323" y="432.0" width="497" height="0.8" fill="#a3a5a4"/><rect x="1323" y="436.7" width="497" height="0.8" fill="#a3a5a4"/><g transform="translate(1325 417.9)"><path d="M2 5 Q2.5 0.5 7.5 0.8 Q12 1.5 11 7.5 Q9.5 13 1.5 17.5" stroke="#111" stroke-width="1.6" fill="none"/><circle cx="3" cy="4.8" r="2" fill="#111"/><circle cx="14" cy="3.3" r="0.9" fill="#111"/><circle cx="14" cy="6.5" r="0.9" fill="#111"/></g><path d="M1342.5 424.0 L1342.5 434.5 Q1347.5 431.5 1345.9 429.4 Q1344.3 428.0 1342.5 430.5" stroke="#111" stroke-width="1.1" fill="none"/><path d="M1348 416.95 L1348 427.45 Q1353 424.45 1351.4 422.34999999999997 Q1349.8 420.95 1348 423.45" stroke="#111" stroke-width="1.1" fill="none"/><path d="M1353.5 426.34999999999997 L1353.5 436.84999999999997 Q1358.5 433.84999999999997 1356.9 431.74999999999994 Q1355.3 430.34999999999997 1353.5 432.84999999999997" stroke="#111" stroke-width="1.1" fill="none"/><text x="1362" y="427.1" font-family="Liberation Serif" font-weight="bold" font-size="12.5" fill="#111">4</text><text x="1362" y="436.5" font-family="Liberation Serif" font-weight="bold" font-size="12.5" fill="#111">4</text><rect x="1671" y="417.9" width="1" height="18.8" fill="#222"/><rect x="1323" y="469.3" width="497" height="0.8" fill="#a3a5a4"/><rect x="1323" y="474.0" width="497" height="0.8" fill="#a3a5a4"/><rect x="1323" y="478.7" width="497" height="0.8" fill="#a3a5a4"/><rect x="1323" y="483.4" width="497" height="0.8" fill="#a3a5a4"/><rect x="1323" y="488.1" width="497" height="0.8" fill="#a3a5a4"/><g transform="translate(1325 469.3)"><path d="M2 5 Q2.5 0.5 7.5 0.8 Q12 1.5 11 7.5 Q9.5 13 1.5 17.5" stroke="#111" stroke-width="1.6" fill="none"/><circle cx="3" cy="4.8" r="2" fill="#111"/><circle cx="14" cy="3.3" r="0.9" fill="#111"/><circle cx="14" cy="6.5" r="0.9" fill="#111"/></g><path d="M1342.5 475.40000000000003 L1342.5 485.90000000000003 Q1347.5 482.90000000000003 1345.9 480.8 Q1344.3 479.40000000000003 1342.5 481.90000000000003" stroke="#111" stroke-width="1.1" fill="none"/><path d="M1348 468.35 L1348 478.85 Q1353 475.85 1351.4 473.75 Q1349.8 472.35 1348 474.85" stroke="#111" stroke-width="1.1" fill="none"/><path d="M1353.5 477.75 L1353.5 488.25 Q1358.5 485.25 1356.9 483.15 Q1355.3 481.75 1353.5 484.25" stroke="#111" stroke-width="1.1" fill="none"/><text x="1362" y="478.5" font-family="Liberation Serif" font-weight="bold" font-size="12.5" fill="#111">4</text><text x="1362" y="487.9" font-family="Liberation Serif" font-weight="bold" font-size="12.5" fill="#111">4</text><rect x="1671" y="469.3" width="1" height="18.8" fill="#222"/><rect x="1322.5" y="211" width="1" height="277" fill="#777"/><ellipse cx="1399.9" cy="218" rx="2.9" ry="2.1" fill="#111" transform="rotate(-22 1399.9 218)"/><rect x="1397.0" y="218.0" width="0.9" height="22.8" fill="#111"/><ellipse cx="1415.0" cy="215.6" rx="2.9" ry="2.1" fill="#111" transform="rotate(-22 1415.0 215.6)"/><rect x="1412.1" y="215.6" width="0.9" height="24.2" fill="#111"/><ellipse cx="1431.1000000000001" cy="215.6" rx="2.9" ry="2.1" fill="#111" transform="rotate(-22 1431.1000000000001 215.6)"/><rect x="1428.2" y="215.6" width="0.9" height="23.1" fill="#111"/><ellipse cx="1444.6000000000001" cy="213.4" rx="2.9" ry="2.1" fill="#111" transform="rotate(-22 1444.6000000000001 213.4)"/><rect x="1441.7" y="213.4" width="0.9" height="24.4" fill="#111"/><ellipse cx="1455.3000000000002" cy="215.6" rx="2.9" ry="2.1" fill="#111" transform="rotate(-22 1455.3000000000002 215.6)"/><rect x="1452.4" y="215.6" width="0.9" height="21.4" fill="#111"/><ellipse cx="1470.4" cy="215.6" rx="2.9" ry="2.1" fill="#111" transform="rotate(-22 1470.4 215.6)"/><rect x="1467.5" y="215.6" width="0.9" height="20.4" fill="#111"/><polygon points="1397.4,238.6 1468.4,233.8 1468.4,235.70000000000002 1397.4,240.5" fill="#111"/><polygon points="1397.4,233.79999999999998 1468.4,229.0 1468.4,230.9 1397.4,235.7" fill="#111"/><polygon points="1397.4,229 1413.0,228.3 1413.0,230.20000000000002 1397.4,230.9" fill="#111"/><polygon points="1442.1000000000001,225.6 1453.3000000000002,225.0 1453.3000000000002,226.9 1442.1000000000001,227.5" fill="#111"/><path d="M1408.3000000000002 208.5 L1408.3000000000002 219.0 Q1413.3000000000002 216.0 1411.7000000000003 213.9 Q1410.1000000000001 212.5 1408.3000000000002 215.0" stroke="#111" stroke-width="1.1" fill="none"/><path d="M1422.9 211.5 L1422.9 218.5 L1425.4 217.5 M1422.9 215.5 L1425.4 214.5 L1425.4 221.5" stroke="#111" stroke-width="0.8" fill="none"/><path d="M1463.7 208.5 L1463.7 219.0 Q1468.7 216.0 1467.1000000000001 213.9 Q1465.5 212.5 1463.7 215.0" stroke="#111" stroke-width="1.1" fill="none"/><ellipse cx="1484" cy="218" rx="2.9" ry="2.1" fill="#111" transform="rotate(-22 1484 218)"/><rect x="1481.1" y="218.0" width="0.9" height="15.8" fill="#111"/><ellipse cx="1538" cy="218" rx="2.9" ry="2.1" fill="#111" transform="rotate(-22 1538 218)"/><rect x="1535.1" y="218.0" width="0.9" height="22.8" fill="#111"/><ellipse cx="1548.8" cy="215.6" rx="2.9" ry="2.1" fill="#111" transform="rotate(-22 1548.8 215.6)"/><rect x="1545.9" y="215.6" width="0.9" height="24.4" fill="#111"/><ellipse cx="1565" cy="215.6" rx="2.9" ry="2.1" fill="#111" transform="rotate(-22 1565 215.6)"/><rect x="1562.1" y="215.6" width="0.9" height="23.3" fill="#111"/><ellipse cx="1578.4" cy="213.4" rx="2.9" ry="2.1" fill="#111" transform="rotate(-22 1578.4 213.4)"/><rect x="1575.5" y="213.4" width="0.9" height="24.5" fill="#111"/><ellipse cx="1589.1" cy="215.6" rx="2.9" ry="2.1" fill="#111" transform="rotate(-22 1589.1 215.6)"/><rect x="1586.2" y="215.6" width="0.9" height="21.5" fill="#111"/><ellipse cx="1604.6" cy="215.6" rx="2.9" ry="2.1" fill="#111" transform="rotate(-22 1604.6 215.6)"/><rect x="1601.7" y="215.6" width="0.9" height="20.4" fill="#111"/><polygon points="1535.5,238.6 1602.6,233.8 1602.6,235.70000000000002 1535.5,240.5" fill="#111"/><polygon points="1535.5,233.79999999999998 1602.6,229.0 1602.6,230.9 1535.5,235.7" fill="#111"/><polygon points="1535.5,229 1546.8,228.3 1546.8,230.20000000000002 1535.5,230.9" fill="#111"/><polygon points="1575.9,225.6 1587.1,225.0 1587.1,226.9 1575.9,227.5" fill="#111"/><path d="M1557 211.5 L1557 218.5 L1559.5 217.5 M1557 215.5 L1559.5 214.5 L1559.5 221.5" stroke="#111" stroke-width="0.8" fill="none"/><path d="M1597.9 208.5 L1597.9 219.0 Q1602.9 216.0 1601.3000000000002 213.9 Q1599.7 212.5 1597.9 215.0" stroke="#111" stroke-width="1.1" fill="none"/><ellipse cx="1618" cy="218" rx="2.9" ry="2.1" fill="#111" transform="rotate(-22 1618 218)"/><rect x="1615.1" y="218.0" width="0.9" height="15.8" fill="#111"/><ellipse cx="1683.9" cy="218" rx="2.9" ry="2.1" fill="#111" transform="rotate(-22 1683.9 218)"/><rect x="1681.0" y="218.0" width="0.9" height="22.8" fill="#111"/><ellipse cx="1699.4" cy="215.6" rx="2.9" ry="2.1" fill="#111" transform="rotate(-22 1699.4 215.6)"/><rect x="1696.5" y="215.6" width="0.9" height="24.1" fill="#111"/><ellipse cx="1714.8000000000002" cy="215.6" rx="2.9" ry="2.1" fill="#111" transform="rotate(-22 1714.8000000000002 215.6)"/><rect x="1711.9" y="215.6" width="0.9" height="23.1" fill="#111"/><ellipse cx="1728.9" cy="213.4" rx="2.9" ry="2.1" fill="#111" transform="rotate(-22 1728.9 213.4)"/><rect x="1726.0" y="213.4" width="0.9" height="24.3" fill="#111"/><ellipse cx="1739.0" cy="215.6" rx="2.9" ry="2.1" fill="#111" transform="rotate(-22 1739.0 215.6)"/><rect x="1736.1" y="215.6" width="0.9" height="21.4" fill="#111"/><ellipse cx="1753.8000000000002" cy="215.6" rx="2.9" ry="2.1" fill="#111" transform="rotate(-22 1753.8000000000002 215.6)"/><rect x="1750.9" y="215.6" width="0.9" height="20.4" fill="#111"/><polygon points="1681.4,238.6 1751.8000000000002,233.8 1751.8000000000002,235.70000000000002 1681.4,240.5" fill="#111"/><polygon points="1681.4,233.79999999999998 1751.8000000000002,229.0 1751.8000000000002,230.9 1681.4,235.7" fill="#111"/><polygon points="1681.4,229 1697.4,228.3 1697.4,230.20000000000002 1681.4,230.9" fill="#111"/><polygon points="1726.4,225.6 1737.0,225.0 1737.0,226.9 1726.4,227.5" fill="#111"/><path d="M1692.6000000000001 208.5 L1692.6000000000001 219.0 Q1697.6000000000001 216.0 1696.0000000000002 213.9 Q1694.4 212.5 1692.6000000000001 215.0" stroke="#111" stroke-width="1.1" fill="none"/><path d="M1707.0 211.5 L1707.0 218.5 L1709.5 217.5 M1707.0 215.5 L1709.5 214.5 L1709.5 221.5" stroke="#111" stroke-width="0.8" fill="none"/><path d="M1747.7 208.5 L1747.7 219.0 Q1752.7 216.0 1751.1000000000001 213.9 Q1749.5 212.5 1747.7 215.0" stroke="#111" stroke-width="1.1" fill="none"/><ellipse cx="1767.9" cy="218" rx="2.9" ry="2.1" fill="#111" transform="rotate(-22 1767.9 218)"/><rect x="1765.0" y="218.0" width="0.9" height="15.8" fill="#111"/><text x="1396" y="252.5" font-family="Liberation Serif" font-weight="bold" font-style="italic" font-size="9.5" fill="#111">8va</text><line x1="1414" y1="250" x2="1820" y2="250" stroke="#aaa" stroke-width="0.8" stroke-dasharray="2.5 2"/><path d="M1397.4 259 L1403.4 261 L1397.4 263" stroke="#111" stroke-width="0.8" fill="none"/><ellipse cx="1400.4" cy="268.8" rx="2.9" ry="2.1" fill="#111" transform="rotate(-22 1400.4 268.8)"/><rect x="1397.5" y="268.8" width="0.9" height="28.9" fill="#111"/><ellipse cx="1431.6000000000001" cy="284.6" rx="2.9" ry="2.1" fill="#111" transform="rotate(-22 1431.6000000000001 284.6)"/><rect x="1428.7" y="284.6" width="0.9" height="16.7" fill="#111"/><ellipse cx="1444.8000000000002" cy="272.8" rx="2.9" ry="2.1" fill="#111" transform="rotate(-22 1444.8000000000002 272.8)"/><rect x="1441.9" y="272.8" width="0.9" height="30.1" fill="#111"/><ellipse cx="1470.9" cy="284.6" rx="2.9" ry="2.1" fill="#111" transform="rotate(-22 1470.9 284.6)"/><rect x="1468.0" y="284.6" width="0.9" height="21.3" fill="#111"/><polygon points="1397.9,295.5 1468.9,303.7 1468.9,305.59999999999997 1397.9,297.4" fill="#111"/><polygon points="1397.9,291.3 1468.9,299.5 1468.9,301.4 1397.9,293.2" fill="#111"/><ellipse cx="1483.6" cy="268.8" rx="2.9" ry="2.1" fill="#111" transform="rotate(-22 1483.6 268.8)"/><rect x="1480.7" y="268.8" width="0.9" height="31.7" fill="#111"/><ellipse cx="1497.5" cy="284.6" rx="2.9" ry="2.1" fill="#111" transform="rotate(-22 1497.5 284.6)"/><rect x="1494.6" y="284.6" width="0.9" height="18.6" fill="#111"/><ellipse cx="1511.3999999999999" cy="272.8" rx="2.9" ry="2.1" fill="#111" transform="rotate(-22 1511.3999999999999 272.8)"/><rect x="1508.5" y="272.8" width="0.9" height="33.1" fill="#111"/><ellipse cx="1525.1999999999998" cy="284.6" rx="2.9" ry="2.1" fill="#111" transform="rotate(-22 1525.1999999999998 284.6)"/><rect x="1522.3" y="284.6" width="0.9" height="24.0" fill="#111"/><polygon points="1481.1,298.3 1523.1999999999998,306.4 1523.1999999999998,308.29999999999995 1481.1,300.2" fill="#111"/><polygon points="1481.1,294.1 1523.1999999999998,302.2 1523.1999999999998,304.09999999999997 1481.1,296.0" fill="#111"/><path d="M1535 259 L1541 261 L1535 263" stroke="#111" stroke-width="0.8" fill="none"/><ellipse cx="1538" cy="268.8" rx="2.9" ry="2.1" fill="#111" transform="rotate(-22 1538 268.8)"/><rect x="1535.1" y="268.8" width="0.9" height="28.9" fill="#111"/><ellipse cx="1565.2" cy="284.6" rx="2.9" ry="2.1" fill="#111" transform="rotate(-22 1565.2 284.6)"/><rect x="1562.3" y="284.6" width="0.9" height="16.5" fill="#111"/><ellipse cx="1578.4" cy="272.8" rx="2.9" ry="2.1" fill="#111" transform="rotate(-22 1578.4 272.8)"/><rect x="1575.5" y="272.8" width="0.9" height="29.9" fill="#111"/><ellipse cx="1604.5" cy="284.6" rx="2.9" ry="2.1" fill="#111" transform="rotate(-22 1604.5 284.6)"/><rect x="1601.6" y="284.6" width="0.9" height="21.3" fill="#111"/><polygon points="1535.5,295.5 1602.5,303.7 1602.5,305.59999999999997 1535.5,297.4" fill="#111"/><polygon points="1535.5,291.3 1602.5,299.5 1602.5,301.4 1535.5,293.2" fill="#111"/><path d="M1680.6 259 L1686.6 261 L1680.6 263" stroke="#111" stroke-width="0.8" fill="none"/><ellipse cx="1683.6" cy="268.8" rx="2.9" ry="2.1" fill="#111" transform="rotate(-22 1683.6 268.8)"/><rect x="1680.7" y="268.8" width="0.9" height="28.9" fill="#111"/><ellipse cx="1714.8" cy="284.6" rx="2.9" ry="2.1" fill="#111" transform="rotate(-22 1714.8 284.6)"/><rect x="1711.9" y="284.6" width="0.9" height="16.7" fill="#111"/><ellipse cx="1728.6999999999998" cy="272.8" rx="2.9" ry="2.1" fill="#111" transform="rotate(-22 1728.6999999999998 272.8)"/><rect x="1725.8" y="272.8" width="0.9" height="30.2" fill="#111"/><ellipse cx="1754.0" cy="284.6" rx="2.9" ry="2.1" fill="#111" transform="rotate(-22 1754.0 284.6)"/><rect x="1751.1" y="284.6" width="0.9" height="21.3" fill="#111"/><polygon points="1681.1,295.5 1752.0,303.7 1752.0,305.59999999999997 1681.1,297.4" fill="#111"/><polygon points="1681.1,291.3 1752.0,299.5 1752.0,301.4 1681.1,293.2" fill="#111"/><ellipse cx="1768" cy="268.8" rx="2.9" ry="2.1" fill="#111" transform="rotate(-22 1768 268.8)"/><rect x="1765.1" y="268.8" width="0.9" height="31.7" fill="#111"/><ellipse cx="1781.8" cy="284.6" rx="2.9" ry="2.1" fill="#111" transform="rotate(-22 1781.8 284.6)"/><rect x="1778.9" y="284.6" width="0.9" height="18.6" fill="#111"/><ellipse cx="1795.7" cy="272.8" rx="2.9" ry="2.1" fill="#111" transform="rotate(-22 1795.7 272.8)"/><rect x="1792.8" y="272.8" width="0.9" height="33.2" fill="#111"/><ellipse cx="1808.9" cy="284.6" rx="2.9" ry="2.1" fill="#111" transform="rotate(-22 1808.9 284.6)"/><rect x="1806.0" y="284.6" width="0.9" height="24.0" fill="#111"/><polygon points="1765.5,298.3 1806.9,306.4 1806.9,308.29999999999995 1765.5,300.2" fill="#111"/><polygon points="1765.5,294.1 1806.9,302.2 1806.9,304.09999999999997 1765.5,296.0" fill="#111"/><ellipse cx="1617.7" cy="273" rx="2.9" ry="2.1" fill="#111" transform="rotate(-22 1617.7 273)"/><rect x="1619.8" y="257.3" width="0.9" height="15.7" fill="#111"/><ellipse cx="1631.6" cy="284.6" rx="2.9" ry="2.1" fill="#111" transform="rotate(-22 1631.6 284.6)"/><rect x="1633.7" y="260.1" width="0.9" height="24.5" fill="#111"/><ellipse cx="1645" cy="291.5" rx="2.9" ry="2.1" fill="#111" transform="rotate(-22 1645 291.5)"/><rect x="1647.1" y="262.8" width="0.9" height="28.7" fill="#111"/><ellipse cx="1658.1" cy="301.2" rx="2.9" ry="2.1" fill="#111" transform="rotate(-22 1658.1 301.2)"/><rect x="1660.2" y="265.4" width="0.9" height="35.8" fill="#111"/><polygon points="1619.7,257.3 1661.1,265.4 1661.1,267.29999999999995 1619.7,259.2" fill="#111"/><polygon points="1619.7,261.5 1661.1,269.59999999999997 1661.1,271.49999999999994 1619.7,263.4" fill="#111"/><rect x="1653" y="301.5" width="10" height="0.8" fill="#777"/><path d="M1618.5 282.5 Q1632 303 1656 307.5" stroke="#111" stroke-width="0.9" fill="none"/><text x="1389" y="317" font-family="Liberation Serif" font-weight="bold" font-style="italic" font-size="11" fill="#111">mf</text><text x="1677" y="312" font-family="Liberation Serif" font-weight="bold" font-style="italic" font-size="11" fill="#111">f</text><path d="M1673 308.6 L1615.5 311.6 L1673 314.6" stroke="#333" stroke-width="0.7" fill="none"/><ellipse cx="1399" cy="336" rx="2.9" ry="2.1" fill="#111" transform="rotate(-22 1399 336)"/><rect x="1396.1" y="336.0" width="0.9" height="16.2" fill="#111"/><ellipse cx="1444" cy="336" rx="2.9" ry="2.1" fill="#111" transform="rotate(-22 1444 336)"/><rect x="1441.1" y="336.0" width="0.9" height="16.2" fill="#111"/><polygon points="1396.5,350.0 1442.0,350.0 1442.0,351.9 1396.5,351.9" fill="#111"/><path d="M1396 326 L1402 328 L1396 330" stroke="#111" stroke-width="0.8" fill="none"/><rect x="1395" y="337.8" width="8" height="0.8" fill="#999"/><rect x="1440" y="337.8" width="8" height="0.8" fill="#999"/><ellipse cx="1483.0" cy="336" rx="2.9" ry="2.1" fill="#111" transform="rotate(-22 1483.0 336)"/><rect x="1480.1" y="336.0" width="0.9" height="16.2" fill="#111"/><ellipse cx="1496.5" cy="336" rx="2.9" ry="2.1" fill="#111" transform="rotate(-22 1496.5 336)"/><rect x="1493.6" y="336.0" width="0.9" height="16.2" fill="#111"/><ellipse cx="1510.0" cy="336" rx="2.9" ry="2.1" fill="#111" transform="rotate(-22 1510.0 336)"/><rect x="1507.1" y="336.0" width="0.9" height="16.2" fill="#111"/><ellipse cx="1523.5" cy="334" rx="2.9" ry="2.1" fill="#111" transform="rotate(-22 1523.5 334)"/><rect x="1520.6" y="334.0" width="0.9" height="18.2" fill="#111"/><polygon points="1480.5,350.0 1521.5,350.0 1521.5,351.9 1480.5,351.9" fill="#111"/><polygon points="1480.5,345.8 1521.5,345.8 1521.5,347.7 1480.5,347.7" fill="#111"/><rect x="1479.0" y="337.8" width="8" height="0.8" fill="#999"/><rect x="1492.5" y="337.8" width="8" height="0.8" fill="#999"/><rect x="1506.0" y="337.8" width="8" height="0.8" fill="#999"/><rect x="1519.5" y="337.8" width="8" height="0.8" fill="#999"/><ellipse cx="1538" cy="336" rx="2.9" ry="2.1" fill="#111" transform="rotate(-22 1538 336)"/><rect x="1535.1" y="336.0" width="0.9" height="16.2" fill="#111"/><ellipse cx="1583" cy="336" rx="2.9" ry="2.1" fill="#111" transform="rotate(-22 1583 336)"/><rect x="1580.1" y="336.0" width="0.9" height="16.2" fill="#111"/><polygon points="1535.5,350.0 1581.0,350.0 1581.0,351.9 1535.5,351.9" fill="#111"/><path d="M1535 326 L1541 328 L1535 330" stroke="#111" stroke-width="0.8" fill="none"/><rect x="1534" y="337.8" width="8" height="0.8" fill="#999"/><rect x="1579" y="337.8" width="8" height="0.8" fill="#999"/><ellipse cx="1618.0" cy="336" rx="2.9" ry="2.1" fill="#111" transform="rotate(-22 1618.0 336)"/><rect x="1615.1" y="336.0" width="0.9" height="16.2" fill="#111"/><ellipse cx="1631.5" cy="336" rx="2.9" ry="2.1" fill="#111" transform="rotate(-22 1631.5 336)"/><rect x="1628.6" y="336.0" width="0.9" height="16.2" fill="#111"/><ellipse cx="1645.0" cy="336" rx="2.9" ry="2.1" fill="#111" transform="rotate(-22 1645.0 336)"/><rect x="1642.1" y="336.0" width="0.9" height="16.2" fill="#111"/><ellipse cx="1658.5" cy="334" rx="2.9" ry="2.1" fill="#111" transform="rotate(-22 1658.5 334)"/><rect x="1655.6" y="334.0" width="0.9" height="18.2" fill="#111"/><polygon points="1615.5,350.0 1656.5,350.0 1656.5,351.9 1615.5,351.9" fill="#111"/><polygon points="1615.5,345.8 1656.5,345.8 1656.5,347.7 1615.5,347.7" fill="#111"/><rect x="1614.0" y="337.8" width="8" height="0.8" fill="#999"/><rect x="1627.5" y="337.8" width="8" height="0.8" fill="#999"/><rect x="1641.0" y="337.8" width="8" height="0.8" fill="#999"/><rect x="1654.5" y="337.8" width="8" height="0.8" fill="#999"/><ellipse cx="1683" cy="336" rx="2.9" ry="2.1" fill="#111" transform="rotate(-22 1683 336)"/><rect x="1680.1" y="336.0" width="0.9" height="16.2" fill="#111"/><ellipse cx="1728" cy="336" rx="2.9" ry="2.1" fill="#111" transform="rotate(-22 1728 336)"/><rect x="1725.1" y="336.0" width="0.9" height="16.2" fill="#111"/><polygon points="1680.5,350.0 1726.0,350.0 1726.0,351.9 1680.5,351.9" fill="#111"/><path d="M1680 326 L1686 328 L1680 330" stroke="#111" stroke-width="0.8" fill="none"/><rect x="1679" y="337.8" width="8" height="0.8" fill="#999"/><rect x="1724" y="337.8" width="8" height="0.8" fill="#999"/><ellipse cx="1768.0" cy="336" rx="2.9" ry="2.1" fill="#111" transform="rotate(-22 1768.0 336)"/><rect x="1765.1" y="336.0" width="0.9" height="16.2" fill="#111"/><ellipse cx="1781.5" cy="336" rx="2.9" ry="2.1" fill="#111" transform="rotate(-22 1781.5 336)"/><rect x="1778.6" y="336.0" width="0.9" height="16.2" fill="#111"/><ellipse cx="1795.0" cy="336" rx="2.9" ry="2.1" fill="#111" transform="rotate(-22 1795.0 336)"/><rect x="1792.1" y="336.0" width="0.9" height="16.2" fill="#111"/><ellipse cx="1808.5" cy="334" rx="2.9" ry="2.1" fill="#111" transform="rotate(-22 1808.5 334)"/><rect x="1805.6" y="334.0" width="0.9" height="18.2" fill="#111"/><polygon points="1765.5,350.0 1806.5,350.0 1806.5,351.9 1765.5,351.9" fill="#111"/><polygon points="1765.5,345.8 1806.5,345.8 1806.5,347.7 1765.5,347.7" fill="#111"/><rect x="1764.0" y="337.8" width="8" height="0.8" fill="#999"/><rect x="1777.5" y="337.8" width="8" height="0.8" fill="#999"/><rect x="1791.0" y="337.8" width="8" height="0.8" fill="#999"/><rect x="1804.5" y="337.8" width="8" height="0.8" fill="#999"/><text x="1389" y="375" font-family="Liberation Serif" font-weight="bold" font-style="italic" font-size="11" fill="#111">mf</text><text x="1677" y="375" font-family="Liberation Serif" font-weight="bold" font-style="italic" font-size="11" fill="#111">f</text><path d="M1673 367.0 L1615.5 369.5 L1673 372.0" stroke="#333" stroke-width="0.7" fill="none"/><path d="M1397.5 423 Q1399 425 1401.5 422.5 L1399 431" stroke="#111" stroke-width="1" fill="none"/><circle cx="1397.7" cy="423" r="1.2" fill="#111"/><ellipse cx="1444" cy="419" rx="2.9" ry="2.1" fill="#111" transform="rotate(-22 1444 419)"/><rect x="1441.1" y="419.0" width="0.9" height="14.0" fill="#111"/><ellipse cx="1511" cy="422" rx="2.9" ry="2.1" fill="#111" transform="rotate(-22 1511 422)"/><rect x="1513.1" y="410.0" width="0.9" height="12.0" fill="#111"/><circle cx="1511" cy="417" r="0.9" fill="#111"/><path d="M1513.5 422 Q1518.5 427 1515.5 431" stroke="#111" stroke-width="1" fill="none"/><path d="M1446 412 Q1477.5 402 1509 413" stroke="#111" stroke-width="0.8" fill="none"/><path d="M1536.5 423 Q1538 425 1540.5 422.5 L1538 431" stroke="#111" stroke-width="1" fill="none"/><circle cx="1536.7" cy="423" r="1.2" fill="#111"/><ellipse cx="1578" cy="412" rx="2.9" ry="2.1" fill="#111" transform="rotate(-22 1578 412)"/><rect x="1575.1" y="412.0" width="0.9" height="14.0" fill="#111"/><ellipse cx="1644" cy="422" rx="2.9" ry="2.1" fill="#111" transform="rotate(-22 1644 422)"/><rect x="1646.1" y="410.0" width="0.9" height="12.0" fill="#111"/><circle cx="1644" cy="417" r="0.9" fill="#111"/><path d="M1646.5 422 Q1651.5 427 1648.5 431" stroke="#111" stroke-width="1" fill="none"/><path d="M1580 405 Q1611.0 397 1642 413" stroke="#111" stroke-width="0.8" fill="none"/><path d="M1682.5 423 Q1684 425 1686.5 422.5 L1684 431" stroke="#111" stroke-width="1" fill="none"/><circle cx="1682.7" cy="423" r="1.2" fill="#111"/><ellipse cx="1728" cy="409" rx="2.9" ry="2.1" fill="#111" transform="rotate(-22 1728 409)"/><rect x="1725.1" y="409.0" width="0.9" height="14.0" fill="#111"/><ellipse cx="1796" cy="420" rx="2.9" ry="2.1" fill="#111" transform="rotate(-22 1796 420)"/><rect x="1798.1" y="408.0" width="0.9" height="12.0" fill="#111"/><circle cx="1796" cy="415" r="0.9" fill="#111"/><path d="M1798.5 420 Q1803.5 425 1800.5 429" stroke="#111" stroke-width="1" fill="none"/><path d="M1730 402 Q1762.0 394 1794 411" stroke="#111" stroke-width="0.8" fill="none"/><path d="M1638 413 L1638 420 L1640.5 419 M1638 417 L1640.5 416 L1640.5 423" stroke="#111" stroke-width="0.8" fill="none"/><text x="1436" y="448" font-family="Liberation Serif" font-weight="bold" font-style="italic" font-size="11" fill="#111">mf</text><path d="M1513 442.4 L1460 444 L1513 445.6" stroke="#333" stroke-width="0.7" fill="none"/><path d="M1656 441.8 L1576 443 L1656 444.2" stroke="#333" stroke-width="0.7" fill="none"/><text x="1724" y="448" font-family="Liberation Serif" font-weight="bold" font-style="italic" font-size="11" fill="#111">f</text><ellipse cx="1399" cy="478" rx="2.9" ry="2.1" fill="#111" transform="rotate(-22 1399 478)"/><rect x="1401.1" y="461.0" width="0.9" height="17.0" fill="#111"/><path d="M1482 471 L1485 475 L1482 478 L1485 482 Q1481 480 1483 484" stroke="#111" stroke-width="1.2" fill="none"/><circle cx="1487" cy="477" r="0.8" fill="#111"/><ellipse cx="1577" cy="487" rx="2.9" ry="2.1" fill="#111" transform="rotate(-22 1577 487)"/><rect x="1579.1" y="472.0" width="0.9" height="15.0" fill="#111"/><path d="M1579.5 472 Q1584.5 477 1581.5 481" stroke="#111" stroke-width="1" fill="none"/><ellipse cx="1618" cy="478" rx="2.9" ry="2.1" fill="#111" transform="rotate(-22 1618 478)"/><rect x="1620.1" y="464.0" width="0.9" height="14.0" fill="#111"/><ellipse cx="1646" cy="490" rx="2.9" ry="2.1" fill="#111" transform="rotate(-22 1646 490)"/><rect x="1648.1" y="469.0" width="0.9" height="21.0" fill="#111"/><polygon points="1620.0,464.0 1649.0,469.0 1649.0,470.9 1620.0,465.9" fill="#111"/><ellipse cx="1683" cy="478" rx="2.9" ry="2.1" fill="#111" transform="rotate(-22 1683 478)"/><rect x="1685.1" y="461.0" width="0.9" height="17.0" fill="#111"/><path d="M1765 471 L1768 475 L1765 478 L1768 482 Q1764 480 1766 484" stroke="#111" stroke-width="1.2" fill="none"/><circle cx="1770" cy="477" r="0.8" fill="#111"/><text x="1389" y="501" font-family="Liberation Serif" font-weight="bold" font-style="italic" font-size="11" fill="#111">mf</text><path d="M1673 495.8 L1576 498 L1673 500.2" stroke="#333" stroke-width="0.7" fill="none"/><text x="1677" y="501" font-family="Liberation Serif" font-weight="bold" font-style="italic" font-size="11" fill="#111">f</text><rect x="1614" y="200" width="12" height="298" fill="rgba(90,150,230,0.06)"/><rect x="1614.5" y="200" width="1" height="298" fill="#7eb0e6"/><rect x="1614.5" y="200" width="11" height="1" fill="#7eb0e6"/><ellipse cx="1344" cy="183.5" rx="2.4" ry="1.8" fill="#111" transform="rotate(-22 1344 183.5)"/><rect x="1345.8" y="176" width="0.8" height="7" fill="#111"/><text x="1350" y="186" font-family="Liberation Serif" font-style="italic" font-weight="bold" font-size="7.5" fill="#222">= 86</text></svg>
<div class="t" style="left:1518px;top:144px;font-size:8px;color:#2b2b2b;">13</div>
<div class="t" style="left:1341px;top:193px;font-size:8px;color:#333;">Flutes</div>
<div class="t" style="left:1341px;top:253px;font-size:8px;color:#333;">Violins</div>
<div class="t" style="left:1341px;top:325px;font-size:8px;color:#333;">Violas</div>
<div class="t" style="left:1341px;top:400px;font-size:8px;color:#333;">Cellos</div>
<div class="t" style="left:1341px;top:452px;font-size:8px;color:#333;">Basses</div>
<div class="a" style="left:170px;top:617px;width:1380px;height:355px;background:#1c1d20;"></div>
<div class="a" style="left:170px;top:617px;width:1380px;height:24px;background:#5e6269;"></div>
<div class="a" style="left:170px;top:641px;width:1380px;height:2px;background:#121315;"></div>
<div class="a" style="left:170px;top:617px;width:22px;height:24px;background:#4a8fd1;"></div>
<svg style="left:176px;top:622px" width="10" height="14"><rect x="1" y="1" width="7" height="11" fill="#e9ebee"/><g fill="#4a8fd1"><rect x="1" y="3" width="3" height="1.5"/><rect x="1" y="6" width="3" height="1.5"/><rect x="1" y="9" width="3" height="1.5"/></g></svg>
<svg style="left:197px;top:622px" width="14" height="13"><path d="M1 1 L6 5 M13 1 L8 5" stroke="#e2e4e7" stroke-width="1"/><ellipse cx="7" cy="6.5" rx="5.5" ry="2" fill="none" stroke="#e2e4e7" stroke-width="1.2"/><path d="M1.5 6.5 L1.5 10 Q7 13 12.5 10 L12.5 6.5" fill="none" stroke="#e2e4e7" stroke-width="1.2"/></svg>
<svg style="left:221px;top:620px" width="10" height="18"><path d="M5 16 Q7 17 6.5 14 L4.5 2 Q5 0 6.5 1.5 Q8 4 3 8 Q0 11 3 13 Q6 14 7 11 Q7 8 4 9" stroke="#e2e4e7" stroke-width="1.1" fill="none"/></svg>
<div class="a" style="left:281px;top:617px;width:22px;height:24px;background:#4a8fd1;"></div>
<svg style="left:286px;top:621px" width="12" height="15"><path d="M1 1 L1 12 L4 9 L6.5 14 L8.5 13 L6 8 L10 8 Z" fill="#e9ebee"/></svg>
<svg style="left:307px;top:622px" width="14" height="14"><path d="M2 12 L3 9 L11 1 L13 3 L5 11 Z" fill="#e2e4e7"/></svg>
<svg style="left:330px;top:621px" width="15" height="16"><path d="M1 14 L12 2" stroke="#e2e4e7" stroke-width="2.2"/><polygon points="10,13 14,13 14,9" fill="#9a9ea4"/></svg>
<svg style="left:352px;top:622px" width="14" height="14"><path d="M1 9 L7 2 Q9 0 11 2 L12 3 Q14 5 12 7 L6 13 L3 13 Z" fill="#e2e4e7"/><path d="M4 7 L8 11" stroke="#5e6269" stroke-width="1.2"/></svg>
<svg style="left:373px;top:621px" width="16" height="16"><path d="M2 6 L5 6 L9 2 L9 14 L5 10 L2 10 Z" fill="#e2e4e7"/><path d="M1 1 L15 15" stroke="#e2e4e7" stroke-width="1.3"/></svg>
<svg style="left:397px;top:622px" width="16" height="14"><path d="M1 5 L4 5 L8 1 L8 13 L4 9 L1 9 Z" fill="#e2e4e7"/><path d="M10 4 Q12 7 10 10 M12 2 Q15 7 12 12" stroke="#e2e4e7" stroke-width="1.2" fill="none"/></svg>
<div class="a" style="left:426px;top:617px;width:1px;height:24px;background:#4e5157;"></div>
<svg style="left:441px;top:625px" width="20" height="9"><path d="M1 2 L5 2 L6 5 L9 5 L10.5 7.5 L12.5 5 L15.5 5 L17 2 L20 2" stroke="#e2e4e7" stroke-width="1.9" fill="none" stroke-dasharray="2.6 1.4"/></svg>
<svg style="left:467px;top:622px" width="14" height="14"><circle cx="6.5" cy="6.5" r="5" stroke="#e2e4e7" stroke-width="1.6" fill="none"/><path d="M8 8 L12 12" stroke="#e2e4e7" stroke-width="1.6"/></svg>
<svg style="left:489px;top:620px" width="17" height="19"><path d="M5 1 L11 1 L11 6 L5 6 Z" stroke="#e2e4e7" fill="none"/><path d="M1 9 L16 9" stroke="#e2e4e7" stroke-width="1.5"/><path d="M3 12 Q8 7 13 12" stroke="#e2e4e7" stroke-width="1.5" fill="none"/><path d="M5 13 L11 13 L8 17 Z" fill="#e2e4e7"/></svg>
<div class="a" style="left:522px;top:617px;width:57px;height:24px;background:#54585f;"></div>
<div class="t" style="left:530px;top:625px;font-size:9.5px;color:#e6e7ea;">Action</div>
<svg style="left:562px;top:627px" width="8" height="5"><polygon points="0,0 7,0 3.5,4" fill="#e2e4e7"/></svg>
<div class="a" style="left:579px;top:617px;width:3px;height:24px;background:#4b4e54;"></div>
<div class="t" style="left:589px;top:619px;font-size:8px;color:#dcdee2;">Note Color</div>
<div class="a" style="left:585px;top:629px;width:56px;height:10px;background:#666a71;"></div>
<div class="t" style="left:588px;top:630px;font-size:8px;color:#e8e9ec;">Pitch</div>
<svg style="left:633px;top:633px" width="7" height="5"><polygon points="0,0 6,0 3,4" fill="#b5b8bd"/></svg>
<svg style="left:651px;top:622px" width="12" height="14"><path d="M3 2 L10 2 M1 6 L11 6 M4 10 L11 10" stroke="#e2e4e7" stroke-width="1.2"/><path d="M1 12 Q4 9 7 12 Q10 14 11 12" stroke="#e2e4e7" fill="none"/></svg>
<div class="a" style="left:668px;top:617px;width:22px;height:24px;background:#4a8fd1;"></div>
<div class="t" style="left:668px;top:625px;font-size:8.5px;color:#e9ebee;width:22px;text-align:center;">AQ</div>
<div class="a" style="left:690px;top:617px;width:252px;height:24px;background:#54585f;"></div>
<div class="t" style="left:697px;top:619px;font-size:8px;color:#dcdee2;">Quantize</div>
<div class="t" style="left:757px;top:619px;font-size:8px;color:#dcdee2;">Timebase</div>
<div class="t" style="left:815px;top:619px;font-size:8px;color:#dcdee2;">Snap</div>
<div class="a" style="left:694px;top:629px;width:52px;height:10px;background:#666a71;"></div>
<div class="t" style="left:697px;top:630px;font-size:8px;color:#e8e9ec;">1/16</div>
<svg style="left:736px;top:633px" width="7" height="5"><polygon points="0,0 6,0 3,4" fill="#b5b8bd"/></svg>
<div class="a" style="left:753px;top:629px;width:57px;height:10px;background:#666a71;"></div>
<div class="t" style="left:756px;top:630px;font-size:8px;color:#e8e9ec;">Bars</div>
<svg style="left:800px;top:633px" width="7" height="5"><polygon points="0,0 6,0 3,4" fill="#b5b8bd"/></svg>
<div class="a" style="left:813px;top:629px;width:59px;height:10px;background:#666a71;"></div>
<div class="t" style="left:816px;top:630px;font-size:8px;color:#e8e9ec;">Quantize</div>
<svg style="left:862px;top:633px" width="7" height="5"><polygon points="0,0 6,0 3,4" fill="#b5b8bd"/></svg>
<div class="a" style="left:879px;top:619px;width:1px;height:20px;background:#8a8d92;"></div>
<svg style="left:884px;top:625px" width="12" height="8"><rect x="1" y="2" width="10" height="4" rx="2" fill="#e9ebee"/><rect x="3" y="3" width="6" height="2" fill="#54585f"/></svg>
<div class="a" style="left:898px;top:617px;width:22px;height:24px;background:#4a8fd1;"></div>
<svg style="left:901px;top:621px" width="18" height="16"><path d="M1 6 L8 6 L8 3 L13 7.5 L8 12 L8 9 L1 9 Z" fill="#e9ebee"/><path d="M14.5 1 L14.5 15" stroke="#9aa3ad" stroke-width="1.5"/></svg>
<svg style="left:924px;top:621px" width="14" height="16"><path d="M1 8 L13 8" stroke="#e2e4e7" stroke-width="1.2"/><polygon points="4,2 10,2 7,5" fill="#e2e4e7"/><polygon points="4,14 10,14 7,11" fill="#e2e4e7"/></svg>
<svg style="left:1519px;top:620px" width="10" height="10"><path d="M1 9 L7 3" stroke="#d0d3d7" stroke-width="1.6"/><polygon points="9,1 9,6 4,1" fill="#d0d3d7"/></svg>
<svg style="left:1535px;top:621px" width="9" height="9"><path d="M1 1 L8 8 M8 1 L1 8" stroke="#d6d8dc" stroke-width="1.6"/></svg>
<div class="a" style="left:170px;top:643px;width:110px;height:329px;background:#26282b;"></div>
<div class="a" style="left:170px;top:643px;width:110px;height:21px;background:#2f3135;"></div>
<svg style="left:175px;top:649px" width="11" height="9"><g stroke="#c9ccd0" stroke-width="1"><path d="M0 0.5H10M0 2.5H10M0 4.5H10M0 6.5H10M0 8.5H10"/></g></svg>
<div class="a" style="left:172px;top:665px;width:5px;height:14px;background:#3a3d42;"></div>
<div class="a" style="left:172px;top:665px;width:5px;height:14px;background:#d4a040;"></div>
<div class="a" style="left:177px;top:665px;width:100px;height:14px;background:#3f4247;"></div>
<svg style="left:178px;top:669px" width="6" height="6"><circle cx="3" cy="3" r="2.2" fill="#e8e9ec"/></svg>
<div class="a" style="left:188px;top:665px;width:5px;height:14px;background:#d08763;"></div>
<div class="t" style="left:203px;top:668px;font-size:8.5px;color:#e6e7ea;">Flutes</div>
<svg style="left:262px;top:667px" width="10" height="10"><path d="M1 9 L2 6.5 L7.5 1 L9 2.5 L3.5 8 Z" fill="#6aaee8"/></svg>
<div class="a" style="left:172px;top:680px;width:5px;height:14px;background:#3a3d42;"></div>
<svg style="left:178px;top:684px" width="6" height="6"><circle cx="3" cy="3" r="2.2" fill="#55585d"/></svg>
<div class="a" style="left:188px;top:680px;width:5px;height:14px;background:#6b4636;"></div>
<div class="t" style="left:203px;top:683px;font-size:8.5px;color:#5f6268;">Clarinets</div>
<svg style="left:262px;top:682px" width="10" height="10"><path d="M1 9 L2 6.5 L7.5 1 L9 2.5 L3.5 8 Z" fill="#d6d8dc"/></svg>
<div class="a" style="left:172px;top:696px;width:5px;height:14px;background:#3a3d42;"></div>
<div class="a" style="left:172px;top:696px;width:5px;height:14px;background:#d4a040;"></div>
<svg style="left:178px;top:700px" width="6" height="6"><circle cx="3" cy="3" r="2.2" fill="#55585d"/></svg>
<div class="a" style="left:188px;top:696px;width:5px;height:14px;background:#6b4636;"></div>
<div class="t" style="left:203px;top:699px;font-size:8.5px;color:#5f6268;">Bassoons</div>
<svg style="left:262px;top:698px" width="10" height="10"><path d="M1 9 L2 6.5 L7.5 1 L9 2.5 L3.5 8 Z" fill="#d6d8dc"/></svg>
<div class="a" style="left:172px;top:711px;width:5px;height:14px;background:#3a3d42;"></div>
<svg style="left:178px;top:715px" width="6" height="6"><circle cx="3" cy="3" r="2.2" fill="#55585d"/></svg>
<div class="a" style="left:188px;top:711px;width:5px;height:14px;background:#6d3a45;"></div>
<div class="t" style="left:203px;top:714px;font-size:8.5px;color:#5f6268;">Trumpets</div>
<svg style="left:262px;top:713px" width="10" height="10"><path d="M1 9 L2 6.5 L7.5 1 L9 2.5 L3.5 8 Z" fill="#d6d8dc"/></svg>
<div class="a" style="left:172px;top:727px;width:5px;height:14px;background:#3a3d42;"></div>
<div class="a" style="left:172px;top:728.4px;width:5px;height:12.6px;background:#d4a040;"></div>
<svg style="left:178px;top:731px" width="6" height="6"><circle cx="3" cy="3" r="2.2" fill="#55585d"/></svg>
<div class="a" style="left:188px;top:727px;width:5px;height:14px;background:#6d3a45;"></div>
<div class="t" style="left:203px;top:730px;font-size:8.5px;color:#5f6268;">Trombones</div>
<svg style="left:262px;top:729px" width="10" height="10"><path d="M1 9 L2 6.5 L7.5 1 L9 2.5 L3.5 8 Z" fill="#d6d8dc"/></svg>
<div class="a" style="left:172px;top:742px;width:5px;height:14px;background:#3a3d42;"></div>
<div class="a" style="left:172px;top:749.0px;width:5px;height:5.6000000000000005px;background:#d4a040;"></div>
<svg style="left:178px;top:746px" width="6" height="6"><circle cx="3" cy="3" r="2.2" fill="#55585d"/></svg>
<div class="a" style="left:188px;top:742px;width:5px;height:14px;background:#6d3a45;"></div>
<div class="t" style="left:203px;top:745px;font-size:8.5px;color:#5f6268;">Fr Horns</div>
<svg style="left:262px;top:744px" width="10" height="10"><path d="M1 9 L2 6.5 L7.5 1 L9 2.5 L3.5 8 Z" fill="#d6d8dc"/></svg>
<div class="a" style="left:172px;top:758px;width:5px;height:14px;background:#3a3d42;"></div>
<svg style="left:178px;top:762px" width="6" height="6"><circle cx="3" cy="3" r="2.2" fill="#55585d"/></svg>
<div class="a" style="left:188px;top:758px;width:5px;height:14px;background:#2c5650;"></div>
<div class="t" style="left:203px;top:761px;font-size:8.5px;color:#5f6268;">Timpani</div>
<svg style="left:262px;top:760px" width="10" height="10"><path d="M1 9 L2 6.5 L7.5 1 L9 2.5 L3.5 8 Z" fill="#d6d8dc"/></svg>
<div class="a" style="left:172px;top:773px;width:5px;height:14px;background:#3a3d42;"></div>
<div class="a" style="left:172px;top:775.8px;width:5px;height:11.200000000000001px;background:#d4a040;"></div>
<svg style="left:178px;top:777px" width="6" height="6"><circle cx="3" cy="3" r="2.2" fill="#55585d"/></svg>
<div class="a" style="left:188px;top:773px;width:5px;height:14px;background:#315a47;"></div>
<div class="t" style="left:203px;top:776px;font-size:8.5px;color:#5f6268;">Glockenspiel</div>
<svg style="left:262px;top:775px" width="10" height="10"><path d="M1 9 L2 6.5 L7.5 1 L9 2.5 L3.5 8 Z" fill="#d6d8dc"/></svg>
<div class="a" style="left:172px;top:789px;width:5px;height:14px;background:#3a3d42;"></div>
<svg style="left:178px;top:793px" width="6" height="6"><circle cx="3" cy="3" r="2.2" fill="#55585d"/></svg>
<div class="a" style="left:188px;top:789px;width:5px;height:14px;background:#315a47;"></div>
<div class="t" style="left:203px;top:792px;font-size:8.5px;color:#5f6268;">Harp</div>
<svg style="left:262px;top:791px" width="10" height="10"><path d="M1 9 L2 6.5 L7.5 1 L9 2.5 L3.5 8 Z" fill="#d6d8dc"/></svg>
<div class="a" style="left:172px;top:804px;width:5px;height:14px;background:#3a3d42;"></div>
<div class="a" style="left:172px;top:804px;width:5px;height:14px;background:#d4a040;"></div>
<svg style="left:178px;top:808px" width="6" height="6"><circle cx="3" cy="3" r="2.2" fill="#55585d"/></svg>
<div class="a" style="left:188px;top:804px;width:5px;height:14px;background:#2f6a8f;"></div>
<div class="t" style="left:203px;top:807px;font-size:8.5px;color:#5f6268;">Violins</div>
<svg style="left:262px;top:806px" width="10" height="10"><path d="M1 9 L2 6.5 L7.5 1 L9 2.5 L3.5 8 Z" fill="#d6d8dc"/></svg>
<div class="a" style="left:172px;top:820px;width:5px;height:14px;background:#3a3d42;"></div>
<div class="a" style="left:172px;top:820px;width:5px;height:14px;background:#d4a040;"></div>
<svg style="left:178px;top:824px" width="6" height="6"><circle cx="3" cy="3" r="2.2" fill="#55585d"/></svg>
<div class="a" style="left:188px;top:820px;width:5px;height:14px;background:#2f7a9a;"></div>
<div class="t" style="left:203px;top:823px;font-size:8.5px;color:#5f6268;">Violas</div>
<svg style="left:262px;top:822px" width="10" height="10"><path d="M1 9 L2 6.5 L7.5 1 L9 2.5 L3.5 8 Z" fill="#d6d8dc"/></svg>
<div class="a" style="left:172px;top:835px;width:5px;height:14px;background:#3a3d42;"></div>
<div class="a" style="left:172px;top:842.0px;width:5px;height:4.200000000000001px;background:#d4a040;"></div>
<svg style="left:178px;top:839px" width="6" height="6"><circle cx="3" cy="3" r="2.2" fill="#55585d"/></svg>
<div class="a" style="left:188px;top:835px;width:5px;height:14px;background:#2f7a9a;"></div>
<div class="t" style="left:203px;top:838px;font-size:8.5px;color:#5f6268;">Cellos</div>
<svg style="left:262px;top:837px" width="10" height="10"><path d="M1 9 L2 6.5 L7.5 1 L9 2.5 L3.5 8 Z" fill="#d6d8dc"/></svg>
<div class="a" style="left:172px;top:851px;width:5px;height:14px;background:#3a3d42;"></div>
<div class="a" style="left:172px;top:851px;width:5px;height:14px;background:#d4a040;"></div>
<svg style="left:178px;top:855px" width="6" height="6"><circle cx="3" cy="3" r="2.2" fill="#55585d"/></svg>
<div class="a" style="left:188px;top:851px;width:5px;height:14px;background:#2f7a9a;"></div>
<div class="t" style="left:203px;top:854px;font-size:8.5px;color:#5f6268;">Basses</div>
<svg style="left:262px;top:853px" width="10" height="10"><path d="M1 9 L2 6.5 L7.5 1 L9 2.5 L3.5 8 Z" fill="#d6d8dc"/></svg>
<div class="a" style="left:172px;top:866px;width:5px;height:14px;background:#3a3d42;"></div>
<svg style="left:178px;top:870px" width="6" height="6"><circle cx="3" cy="3" r="2.2" fill="#55585d"/></svg>
<div class="a" style="left:188px;top:866px;width:5px;height:14px;background:#2e5446;"></div>
<div class="t" style="left:203px;top:869px;font-size:8.5px;color:#5f6268;">Cymbals</div>
<svg style="left:262px;top:868px" width="10" height="10"><path d="M1 9 L2 6.5 L7.5 1 L9 2.5 L3.5 8 Z" fill="#d6d8dc"/></svg>
<div class="a" style="left:172px;top:881px;width:5px;height:14px;background:#3a3d42;"></div>
<svg style="left:178px;top:885px" width="6" height="6"><circle cx="3" cy="3" r="2.2" fill="#55585d"/></svg>
<div class="a" style="left:188px;top:881px;width:5px;height:14px;background:#2a4a8a;"></div>
<div class="t" style="left:203px;top:884px;font-size:8.5px;color:#5f6268;">Piano</div>
<svg style="left:262px;top:883px" width="10" height="10"><path d="M1 9 L2 6.5 L7.5 1 L9 2.5 L3.5 8 Z" fill="#d6d8dc"/></svg>
<div class="a" style="left:281px;top:643px;width:133px;height:329px;background:#26282b;"></div>
<div class="a" style="left:281px;top:643px;width:133px;height:21px;background:#505359;"></div>
<div class="a" style="left:281px;top:643px;width:9px;height:21px;background:#d08763;"></div>
<div class="t" style="left:290px;top:649px;font-size:8.5px;color:#e6e7ea;width:114px;text-align:center;">Flutes</div>
<svg style="left:403px;top:652px" width="7" height="5"><polygon points="0,0 6,0 3,4" fill="#a8abb0"/></svg>
<svg style="left:284px;top:668px" width="9" height="7"><rect width="9" height="7" fill="#d0d3d7"/><g fill="#26282b"><rect x="1.5" y="0" width="1" height="4"/><rect x="4" y="0" width="1" height="4"/><rect x="6.5" y="0" width="1" height="4"/></g></svg>
<div class="t" style="left:298px;top:668px;font-size:8px;color:#d6d8dc;">Instrument</div>
<div class="a" style="left:381px;top:665px;width:16px;height:15px;background:#303236;"></div>
<div class="a" style="left:398px;top:665px;width:16px;height:15px;background:#303236;"></div>
<div class="t" style="left:381px;top:668px;font-size:9px;color:#9a9da2;width:16px;text-align:center;">M</div>
<div class="t" style="left:398px;top:668px;font-size:9px;color:#9a9da2;width:16px;text-align:center;">S</div>
<div class="t" style="left:284px;top:684px;font-size:8px;color:#d6d8dc;">Audition Notes</div>
<div class="a" style="left:399px;top:681px;width:15px;height:15px;background:#303236;"></div>
<svg style="left:401px;top:684px" width="10" height="9"><path d="M1.5 4.5 L4 7 L8.5 1.5" stroke="#eceef0" stroke-width="1.5" fill="none"/></svg>
<div class="t" style="left:284px;top:700px;font-size:8px;color:#d6d8dc;">Default Velocity</div>
<div class="a" style="left:382px;top:697px;width:32px;height:15px;background:#303236;"></div>
<div class="t" style="left:382px;top:701px;font-size:8px;color:#d6d8dc;width:32px;text-align:center;">100%</div>
<div class="t" style="left:284px;top:716px;font-size:8px;color:#d6d8dc;">Scale</div>
<svg style="left:345px;top:713px" width="52" height="12"><rect x="0.0" y="0" width="6.4" height="12" fill="#55585d"/><rect x="7.4" y="0" width="6.4" height="12" fill="#55585d"/><rect x="14.8" y="0" width="6.4" height="12" fill="#55585d"/><rect x="22.2" y="0" width="6.4" height="12" fill="#55585d"/><rect x="29.6" y="0" width="6.4" height="12" fill="#55585d"/><rect x="37.0" y="0" width="6.4" height="12" fill="#55585d"/><rect x="44.4" y="0" width="6.4" height="12" fill="#55585d"/><rect x="4.5" y="0" width="4" height="7" fill="#2b2d31"/><rect x="11.9" y="0" width="4" height="7" fill="#2b2d31"/><rect x="26.7" y="0" width="4" height="7" fill="#2b2d31"/><rect x="34.1" y="0" width="4" height="7" fill="#2b2d31"/><rect x="41.5" y="0" width="4" height="7" fill="#2b2d31"/></svg>
<div class="a" style="left:399px;top:713px;width:15px;height:15px;background:#303236;"></div>
<div class="a" style="left:281px;top:729px;width:34px;height:15px;background:#35383d;"></div>
<div class="t" style="left:289px;top:733px;font-size:8px;color:#d6d8dc;">C</div>
<svg style="left:305px;top:735px" width="6" height="4"><polygon points="0,0 6,0 3,4" fill="#a8abb0"/></svg>
<div class="a" style="left:316px;top:729px;width:98px;height:15px;background:#35383d;"></div>
<div class="t" style="left:316px;top:733px;font-size:8px;color:#d6d8dc;width:88px;text-align:center;">Chromatic</div>
<svg style="left:404px;top:735px" width="6" height="4"><polygon points="0,0 6,0 3,4" fill="#a8abb0"/></svg>
<div class="t" style="left:284px;top:749px;font-size:8px;color:#d6d8dc;">Length</div>
<div class="a" style="left:399px;top:745px;width:15px;height:15px;background:#4a8fd1;"></div>
<svg style="left:401px;top:747px" width="11" height="11"><circle cx="5" cy="5" r="3.5" stroke="#e9ebee" stroke-width="1.3" fill="none"/><path d="M6.5 6.5 L9.5 9.5" stroke="#e9ebee" stroke-width="1.3"/></svg>
<div class="a" style="left:281px;top:761px;width:34px;height:15px;background:#35383d;"></div>
<div class="t" style="left:285px;top:765px;font-size:8px;color:#d6d8dc;">1/16</div>
<svg style="left:305px;top:767px" width="6" height="4"><polygon points="0,0 6,0 3,4" fill="#a8abb0"/></svg>
<div class="a" style="left:316px;top:761px;width:82px;height:15px;background:#35383d;"></div>
<div class="t" style="left:316px;top:765px;font-size:8px;color:#d6d8dc;width:78px;text-align:center;">Straight</div>
<svg style="left:387px;top:767px" width="6" height="4"><polygon points="0,0 6,0 3,4" fill="#a8abb0"/></svg>
<div class="a" style="left:399px;top:761px;width:15px;height:15px;background:#35383d;"></div>
<svg style="left:405px;top:767px" width="3" height="3"><circle cx="1.5" cy="1.5" r="1.2" fill="#d6d8dc"/></svg>
<div class="a" style="left:343px;top:786px;width:71px;height:15px;background:#35383d;"></div>
<div class="t" style="left:284px;top:790px;font-size:8px;color:#d6d8dc;">Start</div>
<div class="t" style="left:343px;top:790px;font-size:8px;color:#d6d8dc;width:71px;text-align:center;letter-spacing:-0.2px">00017.01.01.64</div>
<div class="a" style="left:343px;top:802px;width:71px;height:15px;background:#35383d;"></div>
<div class="t" style="left:284px;top:806px;font-size:8px;color:#d6d8dc;">End</div>
<div class="t" style="left:343px;top:806px;font-size:8px;color:#d6d8dc;width:71px;text-align:center;letter-spacing:-0.2px">00017.01.02.64</div>
<div class="a" style="left:343px;top:818px;width:71px;height:15px;background:#35383d;"></div>
<div class="t" style="left:284px;top:822px;font-size:8px;color:#d6d8dc;">Length</div>
<div class="t" style="left:343px;top:822px;font-size:8px;color:#d6d8dc;width:71px;text-align:center;letter-spacing:-0.2px">00000.00.01.00</div>
<div class="a" style="left:343px;top:834px;width:71px;height:15px;background:#35383d;"></div>
<div class="t" style="left:284px;top:838px;font-size:8px;color:#d6d8dc;">Pitch</div>
<div class="t" style="left:343px;top:838px;font-size:8px;color:#d6d8dc;width:63px;text-align:center;letter-spacing:-0.2px">Legato</div>
<svg style="left:404px;top:840px" width="6" height="4"><polygon points="0,0 6,0 3,4" fill="#a8abb0"/></svg>
<div class="a" style="left:343px;top:850px;width:71px;height:15px;background:#35383d;"></div>
<div class="t" style="left:284px;top:854px;font-size:8px;color:#d6d8dc;">Velocity</div>
<div class="t" style="left:343px;top:854px;font-size:8px;color:#d6d8dc;width:71px;text-align:center;letter-spacing:-0.2px">80%</div>
<div class="t" style="left:284px;top:870px;font-size:8px;color:#d6d8dc;">Mute</div>
<div class="a" style="left:399px;top:866px;width:15px;height:15px;background:#2e3034;border:1px solid #3c3f44"></div>
<div class="t" style="left:284px;top:886px;font-size:8px;color:#d6d8dc;">Input Chord</div>
<div class="a" style="left:280px;top:664px;width:1px;height:308px;background:#1f2023;"></div>
<div class="a" style="left:415px;top:664px;width:2px;height:241px;background:#4aa3e6;"></div>
<svg style="left:417px;top:664px;overflow:hidden" width="60" height="241"><rect width="60" height="241" fill="#ececec"/><rect x="0" y="-2.3" width="38" height="5" fill="#1a1b1d"/><rect x="30" y="-1.6" width="7" height="3" fill="#4a4c50"/><rect x="0" y="14.6" width="38" height="5" fill="#1a1b1d"/><rect x="30" y="15.2" width="7" height="3" fill="#4a4c50"/><rect x="0" y="25.8" width="38" height="5" fill="#1a1b1d"/><rect x="30" y="26.5" width="7" height="3" fill="#4a4c50"/><rect x="0" y="37.0" width="38" height="5" fill="#1a1b1d"/><rect x="30" y="37.8" width="7" height="3" fill="#4a4c50"/><rect x="0" y="53.9" width="38" height="5" fill="#1a1b1d"/><rect x="30" y="54.6" width="7" height="3" fill="#4a4c50"/><rect x="0" y="65.2" width="38" height="5" fill="#1a1b1d"/><rect x="30" y="65.9" width="7" height="3" fill="#4a4c50"/><rect x="0" y="82.0" width="38" height="5" fill="#1a1b1d"/><rect x="30" y="82.8" width="7" height="3" fill="#4a4c50"/><rect x="0" y="93.3" width="38" height="5" fill="#1a1b1d"/><rect x="30" y="94.0" width="7" height="3" fill="#4a4c50"/><rect x="0" y="104.5" width="38" height="5" fill="#1a1b1d"/><rect x="30" y="105.2" width="7" height="3" fill="#4a4c50"/><rect x="0" y="121.4" width="38" height="5" fill="#1a1b1d"/><rect x="30" y="122.1" width="7" height="3" fill="#4a4c50"/><rect x="0" y="132.7" width="38" height="5" fill="#1a1b1d"/><rect x="30" y="133.4" width="7" height="3" fill="#4a4c50"/><rect x="0" y="149.6" width="38" height="5" fill="#1a1b1d"/><rect x="30" y="150.2" width="7" height="3" fill="#4a4c50"/><rect x="0" y="160.8" width="38" height="5" fill="#1a1b1d"/><rect x="30" y="161.5" width="7" height="3" fill="#4a4c50"/><rect x="0" y="172.1" width="38" height="5" fill="#1a1b1d"/><rect x="30" y="172.8" width="7" height="3" fill="#4a4c50"/><rect x="0" y="188.9" width="38" height="5" fill="#1a1b1d"/><rect x="30" y="189.6" width="7" height="3" fill="#4a4c50"/><rect x="0" y="200.2" width="38" height="5" fill="#1a1b1d"/><rect x="30" y="200.9" width="7" height="3" fill="#4a4c50"/><rect x="0" y="217.1" width="38" height="5" fill="#1a1b1d"/><rect x="30" y="217.8" width="7" height="3" fill="#4a4c50"/><rect x="0" y="228.3" width="38" height="5" fill="#1a1b1d"/><rect x="30" y="229.0" width="7" height="3" fill="#4a4c50"/><rect x="0" y="239.6" width="38" height="5" fill="#1a1b1d"/><rect x="30" y="240.2" width="7" height="3" fill="#4a4c50"/><rect x="0" y="8.6" width="60" height="0.7" fill="#b5b5b5"/><rect x="0" y="-1.0" width="60" height="0.7" fill="#b5b5b5"/><rect x="0" y="-10.7" width="60" height="0.7" fill="#b5b5b5"/><rect x="0" y="-20.3" width="60" height="0.7" fill="#b5b5b5"/><rect x="0" y="-29.9" width="60" height="0.7" fill="#b5b5b5"/><rect x="0" y="-39.6" width="60" height="0.7" fill="#b5b5b5"/><rect x="0" y="-49.2" width="60" height="0.7" fill="#b5b5b5"/><rect x="0" y="76.1" width="60" height="0.7" fill="#b5b5b5"/><rect x="0" y="66.5" width="60" height="0.7" fill="#b5b5b5"/><rect x="0" y="56.8" width="60" height="0.7" fill="#b5b5b5"/><rect x="0" y="47.2" width="60" height="0.7" fill="#b5b5b5"/><rect x="0" y="37.6" width="60" height="0.7" fill="#b5b5b5"/><rect x="0" y="27.9" width="60" height="0.7" fill="#b5b5b5"/><rect x="0" y="18.3" width="60" height="0.7" fill="#b5b5b5"/><rect x="0" y="143.6" width="60" height="0.7" fill="#b5b5b5"/><rect x="0" y="134.0" width="60" height="0.7" fill="#b5b5b5"/><rect x="0" y="124.3" width="60" height="0.7" fill="#b5b5b5"/><rect x="0" y="114.7" width="60" height="0.7" fill="#b5b5b5"/><rect x="0" y="105.1" width="60" height="0.7" fill="#b5b5b5"/><rect x="0" y="95.4" width="60" height="0.7" fill="#b5b5b5"/><rect x="0" y="85.8" width="60" height="0.7" fill="#b5b5b5"/><rect x="0" y="211.1" width="60" height="0.7" fill="#b5b5b5"/><rect x="0" y="201.5" width="60" height="0.7" fill="#b5b5b5"/><rect x="0" y="191.8" width="60" height="0.7" fill="#b5b5b5"/><rect x="0" y="182.2" width="60" height="0.7" fill="#b5b5b5"/><rect x="0" y="172.6" width="60" height="0.7" fill="#b5b5b5"/><rect x="0" y="162.9" width="60" height="0.7" fill="#b5b5b5"/><rect x="0" y="153.3" width="60" height="0.7" fill="#b5b5b5"/><rect x="0" y="278.6" width="60" height="0.7" fill="#b5b5b5"/><rect x="0" y="269.0" width="60" height="0.7" fill="#b5b5b5"/><rect x="0" y="259.3" width="60" height="0.7" fill="#b5b5b5"/><rect x="0" y="249.7" width="60" height="0.7" fill="#b5b5b5"/><rect x="0" y="240.1" width="60" height="0.7" fill="#b5b5b5"/><rect x="0" y="230.4" width="60" height="0.7" fill="#b5b5b5"/><rect x="0" y="220.8" width="60" height="0.7" fill="#b5b5b5"/><rect x="59" y="0" width="1" height="241" fill="#9a9a9a"/></svg>
<div class="t" style="left:460px;top:666px;font-size:5.5px;color:#333;font-weight:bold">C 6</div>
<div class="t" style="left:460px;top:735px;font-size:5.5px;color:#333;font-weight:bold">C 5</div>
<div class="t" style="left:460px;top:803px;font-size:5.5px;color:#333;font-weight:bold">C 4</div>
<div class="t" style="left:460px;top:870px;font-size:5.5px;color:#333;font-weight:bold">C 3</div>
<div class="a" style="left:477px;top:643px;width:11px;height:262px;background:#1c1d20;"></div>
<div class="a" style="left:477px;top:643px;width:1073px;height:4px;background:#1c1d20;"></div>
<div class="a" style="left:477px;top:643px;width:7px;height:21px;background:#26282b;"></div>
<div class="a" style="left:484px;top:643px;width:1054px;height:4px;background:#5eaee8;"></div>
<div class="a" style="left:484px;top:647px;width:1054px;height:17px;background:#3b4048;"></div>
<svg style="left:484px;top:647px" width="8" height="9"><polygon points="0,0 7,0 0,8" fill="#5eaee8"/></svg>
<div class="a" style="left:1538px;top:643px;width:12px;height:21px;background:#2a2c30;"></div>
<div class="a" style="left:488.6px;top:657px;width:1px;height:7px;background:#c0c4ca;"></div>
<div class="t" style="left:490.1px;top:649px;font-size:8.5px;color:#e2e5e9;">13</div>
<div class="a" style="left:504.49375000000003px;top:662px;width:1px;height:2px;background:#8a9098;"></div>
<div class="a" style="left:520.3875px;top:662px;width:1px;height:2px;background:#8a9098;"></div>
<div class="a" style="left:536.28125px;top:662px;width:1px;height:2px;background:#8a9098;"></div>
<div class="a" style="left:552.1750000000001px;top:660px;width:1px;height:4px;background:#a8adb4;"></div>
<div class="t" style="left:553.6750000000001px;top:649.5px;font-size:7.5px;color:#c9cdd2;">13.2</div>
<div class="a" style="left:568.06875px;top:662px;width:1px;height:2px;background:#8a9098;"></div>
<div class="a" style="left:583.9625000000001px;top:662px;width:1px;height:2px;background:#8a9098;"></div>
<div class="a" style="left:599.85625px;top:662px;width:1px;height:2px;background:#8a9098;"></div>
<div class="a" style="left:615.75px;top:660px;width:1px;height:4px;background:#a8adb4;"></div>
<div class="t" style="left:617.25px;top:649.5px;font-size:7.5px;color:#c9cdd2;">13.3</div>
<div class="a" style="left:631.64375px;top:662px;width:1px;height:2px;background:#8a9098;"></div>
<div class="a" style="left:647.5375px;top:662px;width:1px;height:2px;background:#8a9098;"></div>
<div class="a" style="left:663.43125px;top:662px;width:1px;height:2px;background:#8a9098;"></div>
<div class="a" style="left:679.325px;top:660px;width:1px;height:4px;background:#a8adb4;"></div>
<div class="t" style="left:680.825px;top:649.5px;font-size:7.5px;color:#c9cdd2;">13.4</div>
<div class="a" style="left:695.21875px;top:662px;width:1px;height:2px;background:#8a9098;"></div>
<div class="a" style="left:711.1125000000001px;top:662px;width:1px;height:2px;background:#8a9098;"></div>
<div class="a" style="left:727.00625px;top:662px;width:1px;height:2px;background:#8a9098;"></div>
<div class="a" style="left:742.9000000000001px;top:657px;width:1px;height:7px;background:#c0c4ca;"></div>
<div class="t" style="left:744.4000000000001px;top:649px;font-size:8.5px;color:#e2e5e9;">14</div>
<div class="a" style="left:758.79375px;top:662px;width:1px;height:2px;background:#8a9098;"></div>
<div class="a" style="left:774.6875000000001px;top:662px;width:1px;height:2px;background:#8a9098;"></div>
<div class="a" style="left:790.5812500000001px;top:662px;width:1px;height:2px;background:#8a9098;"></div>
<div class="a" style="left:806.4750000000001px;top:660px;width:1px;height:4px;background:#a8adb4;"></div>
<div class="t" style="left:807.9750000000001px;top:649.5px;font-size:7.5px;color:#c9cdd2;">14.2</div>
<div class="a" style="left:822.3687500000001px;top:662px;width:1px;height:2px;background:#8a9098;"></div>
<div class="a" style="left:838.2625000000002px;top:662px;width:1px;height:2px;background:#8a9098;"></div>
<div class="a" style="left:854.1562500000001px;top:662px;width:1px;height:2px;background:#8a9098;"></div>
<div class="a" style="left:870.0500000000001px;top:660px;width:1px;height:4px;background:#a8adb4;"></div>
<div class="t" style="left:871.5500000000001px;top:649.5px;font-size:7.5px;color:#c9cdd2;">14.3</div>
<div class="a" style="left:885.94375px;top:662px;width:1px;height:2px;background:#8a9098;"></div>
<div class="a" style="left:901.8375000000001px;top:662px;width:1px;height:2px;background:#8a9098;"></div>
<div class="a" style="left:917.73125px;top:662px;width:1px;height:2px;background:#8a9098;"></div>
<div class="a" style="left:933.6250000000001px;top:660px;width:1px;height:4px;background:#a8adb4;"></div>
<div class="t" style="left:935.1250000000001px;top:649.5px;font-size:7.5px;color:#c9cdd2;">14.4</div>
<div class="a" style="left:949.5187500000001px;top:662px;width:1px;height:2px;background:#8a9098;"></div>
<div class="a" style="left:965.4125000000001px;top:662px;width:1px;height:2px;background:#8a9098;"></div>
<div class="a" style="left:981.3062500000001px;top:662px;width:1px;height:2px;background:#8a9098;"></div>
<div class="a" style="left:997.2px;top:657px;width:1px;height:7px;background:#c0c4ca;"></div>
<div class="t" style="left:998.7px;top:649px;font-size:8.5px;color:#e2e5e9;">15</div>
<div class="a" style="left:1013.09375px;top:662px;width:1px;height:2px;background:#8a9098;"></div>
<div class="a" style="left:1028.9875px;top:662px;width:1px;height:2px;background:#8a9098;"></div>
<div class="a" style="left:1044.8812500000001px;top:662px;width:1px;height:2px;background:#8a9098;"></div>
<div class="a" style="left:1060.775px;top:660px;width:1px;height:4px;background:#a8adb4;"></div>
<div class="t" style="left:1062.275px;top:649.5px;font-size:7.5px;color:#c9cdd2;">15.2</div>
<div class="a" style="left:1076.66875px;top:662px;width:1px;height:2px;background:#8a9098;"></div>
<div class="a" style="left:1092.5625px;top:662px;width:1px;height:2px;background:#8a9098;"></div>
<div class="a" style="left:1108.4562500000002px;top:662px;width:1px;height:2px;background:#8a9098;"></div>
<div class="a" style="left:1124.3500000000001px;top:660px;width:1px;height:4px;background:#a8adb4;"></div>
<div class="t" style="left:1125.8500000000001px;top:649.5px;font-size:7.5px;color:#c9cdd2;">15.3</div>
<div class="a" style="left:1140.24375px;top:662px;width:1px;height:2px;background:#8a9098;"></div>
<div class="a" style="left:1156.1375px;top:662px;width:1px;height:2px;background:#8a9098;"></div>
<div class="a" style="left:1172.0312500000002px;top:662px;width:1px;height:2px;background:#8a9098;"></div>
<div class="a" style="left:1187.9250000000002px;top:660px;width:1px;height:4px;background:#a8adb4;"></div>
<div class="t" style="left:1189.4250000000002px;top:649.5px;font-size:7.5px;color:#c9cdd2;">15.4</div>
<div class="a" style="left:1203.8187500000001px;top:662px;width:1px;height:2px;background:#8a9098;"></div>
<div class="a" style="left:1219.7125px;top:662px;width:1px;height:2px;background:#8a9098;"></div>
<div class="a" style="left:1235.6062500000003px;top:662px;width:1px;height:2px;background:#8a9098;"></div>
<div class="a" style="left:1251.5px;top:657px;width:1px;height:7px;background:#c0c4ca;"></div>
<div class="t" style="left:1253.0px;top:649px;font-size:8.5px;color:#e2e5e9;">16</div>
<div class="a" style="left:1267.39375px;top:662px;width:1px;height:2px;background:#8a9098;"></div>
<div class="a" style="left:1283.2875px;top:662px;width:1px;height:2px;background:#8a9098;"></div>
<div class="a" style="left:1299.18125px;top:662px;width:1px;height:2px;background:#8a9098;"></div>
<div class="a" style="left:1315.075px;top:660px;width:1px;height:4px;background:#a8adb4;"></div>
<div class="t" style="left:1316.575px;top:649.5px;font-size:7.5px;color:#c9cdd2;">16.2</div>
<div class="a" style="left:1330.96875px;top:662px;width:1px;height:2px;background:#8a9098;"></div>
<div class="a" style="left:1346.8625px;top:662px;width:1px;height:2px;background:#8a9098;"></div>
<div class="a" style="left:1362.7562500000001px;top:662px;width:1px;height:2px;background:#8a9098;"></div>
<div class="a" style="left:1378.65px;top:660px;width:1px;height:4px;background:#a8adb4;"></div>
<div class="t" style="left:1380.15px;top:649.5px;font-size:7.5px;color:#c9cdd2;">16.3</div>
<div class="a" style="left:1394.54375px;top:662px;width:1px;height:2px;background:#8a9098;"></div>
<div class="a" style="left:1410.4375px;top:662px;width:1px;height:2px;background:#8a9098;"></div>
<div class="a" style="left:1426.3312500000002px;top:662px;width:1px;height:2px;background:#8a9098;"></div>
<div class="a" style="left:1442.225px;top:660px;width:1px;height:4px;background:#a8adb4;"></div>
<div class="t" style="left:1443.725px;top:649.5px;font-size:7.5px;color:#c9cdd2;">16.4</div>
<div class="a" style="left:1458.1187499999999px;top:662px;width:1px;height:2px;background:#8a9098;"></div>
<div class="a" style="left:1474.0124999999998px;top:662px;width:1px;height:2px;background:#8a9098;"></div>
<div class="a" style="left:1489.90625px;top:662px;width:1px;height:2px;background:#8a9098;"></div>
<div class="a" style="left:1505.8000000000002px;top:657px;width:1px;height:7px;background:#c0c4ca;"></div>
<div class="t" style="left:1507.3000000000002px;top:649px;font-size:8.5px;color:#e2e5e9;">17</div>
<div class="a" style="left:1521.6937500000001px;top:662px;width:1px;height:2px;background:#8a9098;"></div>
<div class="a" style="left:1537.5875px;top:662px;width:1px;height:2px;background:#8a9098;"></div>
<div class="a" style="left:477px;top:664px;width:1073px;height:1.5px;background:#141517;"></div>
<svg style="left:488px;top:664px;overflow:hidden" width="1052" height="241"><rect width="1052" height="241" fill="#27292c"/><rect x="0" y="-2.6" width="1052" height="5.62" fill="#202225"/><rect x="0" y="-2.6" width="1052" height="0.5" fill="#1a1b1e"/><rect x="0" y="3.0" width="1052" height="0.5" fill="#1a1b1e"/><rect x="0" y="8.6" width="1052" height="0.5" fill="#1a1b1e"/><rect x="0" y="14.2" width="1052" height="5.62" fill="#202225"/><rect x="0" y="14.2" width="1052" height="0.5" fill="#1a1b1e"/><rect x="0" y="19.9" width="1052" height="0.5" fill="#1a1b1e"/><rect x="0" y="25.5" width="1052" height="5.62" fill="#202225"/><rect x="0" y="25.5" width="1052" height="0.5" fill="#1a1b1e"/><rect x="0" y="31.1" width="1052" height="0.5" fill="#1a1b1e"/><rect x="0" y="36.8" width="1052" height="5.62" fill="#202225"/><rect x="0" y="36.8" width="1052" height="0.5" fill="#1a1b1e"/><rect x="0" y="42.4" width="1052" height="0.5" fill="#1a1b1e"/><rect x="0" y="48.0" width="1052" height="0.5" fill="#1a1b1e"/><rect x="0" y="53.6" width="1052" height="5.62" fill="#202225"/><rect x="0" y="53.6" width="1052" height="0.5" fill="#1a1b1e"/><rect x="0" y="59.2" width="1052" height="0.5" fill="#1a1b1e"/><rect x="0" y="64.9" width="1052" height="5.62" fill="#202225"/><rect x="0" y="64.9" width="1052" height="0.5" fill="#1a1b1e"/><rect x="0" y="70.5" width="1052" height="0.5" fill="#1a1b1e"/><rect x="0" y="76.1" width="1052" height="0.5" fill="#1a1b1e"/><rect x="0" y="81.8" width="1052" height="5.62" fill="#202225"/><rect x="0" y="81.8" width="1052" height="0.5" fill="#1a1b1e"/><rect x="0" y="87.4" width="1052" height="0.5" fill="#1a1b1e"/><rect x="0" y="93.0" width="1052" height="5.62" fill="#202225"/><rect x="0" y="93.0" width="1052" height="0.5" fill="#1a1b1e"/><rect x="0" y="98.6" width="1052" height="0.5" fill="#1a1b1e"/><rect x="0" y="104.2" width="1052" height="5.62" fill="#202225"/><rect x="0" y="104.2" width="1052" height="0.5" fill="#1a1b1e"/><rect x="0" y="109.9" width="1052" height="0.5" fill="#1a1b1e"/><rect x="0" y="115.5" width="1052" height="0.5" fill="#1a1b1e"/><rect x="0" y="121.1" width="1052" height="5.62" fill="#202225"/><rect x="0" y="121.1" width="1052" height="0.5" fill="#1a1b1e"/><rect x="0" y="126.8" width="1052" height="0.5" fill="#1a1b1e"/><rect x="0" y="132.4" width="1052" height="5.62" fill="#202225"/><rect x="0" y="132.4" width="1052" height="0.5" fill="#1a1b1e"/><rect x="0" y="138.0" width="1052" height="0.5" fill="#1a1b1e"/><rect x="0" y="143.6" width="1052" height="0.5" fill="#1a1b1e"/><rect x="0" y="149.2" width="1052" height="5.62" fill="#202225"/><rect x="0" y="149.2" width="1052" height="0.5" fill="#1a1b1e"/><rect x="0" y="154.9" width="1052" height="0.5" fill="#1a1b1e"/><rect x="0" y="160.5" width="1052" height="5.62" fill="#202225"/><rect x="0" y="160.5" width="1052" height="0.5" fill="#1a1b1e"/><rect x="0" y="166.1" width="1052" height="0.5" fill="#1a1b1e"/><rect x="0" y="171.8" width="1052" height="5.62" fill="#202225"/><rect x="0" y="171.8" width="1052" height="0.5" fill="#1a1b1e"/><rect x="0" y="177.4" width="1052" height="0.5" fill="#1a1b1e"/><rect x="0" y="183.0" width="1052" height="0.5" fill="#1a1b1e"/><rect x="0" y="188.6" width="1052" height="5.62" fill="#202225"/><rect x="0" y="188.6" width="1052" height="0.5" fill="#1a1b1e"/><rect x="0" y="194.2" width="1052" height="0.5" fill="#1a1b1e"/><rect x="0" y="199.9" width="1052" height="5.62" fill="#202225"/><rect x="0" y="199.9" width="1052" height="0.5" fill="#1a1b1e"/><rect x="0" y="205.5" width="1052" height="0.5" fill="#1a1b1e"/><rect x="0" y="211.1" width="1052" height="0.5" fill="#1a1b1e"/><rect x="0" y="216.8" width="1052" height="5.62" fill="#202225"/><rect x="0" y="216.8" width="1052" height="0.5" fill="#1a1b1e"/><rect x="0" y="222.4" width="1052" height="0.5" fill="#1a1b1e"/><rect x="0" y="228.0" width="1052" height="5.62" fill="#202225"/><rect x="0" y="228.0" width="1052" height="0.5" fill="#1a1b1e"/><rect x="0" y="233.6" width="1052" height="0.5" fill="#1a1b1e"/><rect x="0" y="239.2" width="1052" height="5.62" fill="#202225"/><rect x="0" y="239.2" width="1052" height="0.5" fill="#1a1b1e"/><rect x="0" y="244.9" width="1052" height="0.5" fill="#1a1b1e"/><rect x="0.6" y="0" width="1" height="241" fill="#4a4d52"/><rect x="16.5" y="0" width="0.6" height="241" fill="#2e3034"/><rect x="32.4" y="0" width="0.6" height="241" fill="#2e3034"/><rect x="48.3" y="0" width="0.6" height="241" fill="#2e3034"/><rect x="64.2" y="0" width="1" height="241" fill="#393b40"/><rect x="80.1" y="0" width="0.6" height="241" fill="#2e3034"/><rect x="96.0" y="0" width="0.6" height="241" fill="#2e3034"/><rect x="111.9" y="0" width="0.6" height="241" fill="#2e3034"/><rect x="127.8" y="0" width="1" height="241" fill="#393b40"/><rect x="143.6" y="0" width="0.6" height="241" fill="#2e3034"/><rect x="159.5" y="0" width="0.6" height="241" fill="#2e3034"/><rect x="175.4" y="0" width="0.6" height="241" fill="#2e3034"/><rect x="191.3" y="0" width="1" height="241" fill="#393b40"/><rect x="207.2" y="0" width="0.6" height="241" fill="#2e3034"/><rect x="223.1" y="0" width="0.6" height="241" fill="#2e3034"/><rect x="239.0" y="0" width="0.6" height="241" fill="#2e3034"/><rect x="254.9" y="0" width="1" height="241" fill="#4a4d52"/><rect x="270.8" y="0" width="0.6" height="241" fill="#2e3034"/><rect x="286.7" y="0" width="0.6" height="241" fill="#2e3034"/><rect x="302.6" y="0" width="0.6" height="241" fill="#2e3034"/><rect x="318.5" y="0" width="1" height="241" fill="#393b40"/><rect x="334.4" y="0" width="0.6" height="241" fill="#2e3034"/><rect x="350.3" y="0" width="0.6" height="241" fill="#2e3034"/><rect x="366.2" y="0" width="0.6" height="241" fill="#2e3034"/><rect x="382.1" y="0" width="1" height="241" fill="#393b40"/><rect x="397.9" y="0" width="0.6" height="241" fill="#2e3034"/><rect x="413.8" y="0" width="0.6" height="241" fill="#2e3034"/><rect x="429.7" y="0" width="0.6" height="241" fill="#2e3034"/><rect x="445.6" y="0" width="1" height="241" fill="#393b40"/><rect x="461.5" y="0" width="0.6" height="241" fill="#2e3034"/><rect x="477.4" y="0" width="0.6" height="241" fill="#2e3034"/><rect x="493.3" y="0" width="0.6" height="241" fill="#2e3034"/><rect x="509.2" y="0" width="1" height="241" fill="#4a4d52"/><rect x="525.1" y="0" width="0.6" height="241" fill="#2e3034"/><rect x="541.0" y="0" width="0.6" height="241" fill="#2e3034"/><rect x="556.9" y="0" width="0.6" height="241" fill="#2e3034"/><rect x="572.8" y="0" width="1" height="241" fill="#393b40"/><rect x="588.7" y="0" width="0.6" height="241" fill="#2e3034"/><rect x="604.6" y="0" width="0.6" height="241" fill="#2e3034"/><rect x="620.5" y="0" width="0.6" height="241" fill="#2e3034"/><rect x="636.4" y="0" width="1" height="241" fill="#393b40"/><rect x="652.2" y="0" width="0.6" height="241" fill="#2e3034"/><rect x="668.1" y="0" width="0.6" height="241" fill="#2e3034"/><rect x="684.0" y="0" width="0.6" height="241" fill="#2e3034"/><rect x="699.9" y="0" width="1" height="241" fill="#393b40"/><rect x="715.8" y="0" width="0.6" height="241" fill="#2e3034"/><rect x="731.7" y="0" width="0.6" height="241" fill="#2e3034"/><rect x="747.6" y="0" width="0.6" height="241" fill="#2e3034"/><rect x="763.5" y="0" width="1" height="241" fill="#4a4d52"/><rect x="779.4" y="0" width="0.6" height="241" fill="#2e3034"/><rect x="795.3" y="0" width="0.6" height="241" fill="#2e3034"/><rect x="811.2" y="0" width="0.6" height="241" fill="#2e3034"/><rect x="827.1" y="0" width="1" height="241" fill="#393b40"/><rect x="843.0" y="0" width="0.6" height="241" fill="#2e3034"/><rect x="858.9" y="0" width="0.6" height="241" fill="#2e3034"/><rect x="874.8" y="0" width="0.6" height="241" fill="#2e3034"/><rect x="890.7" y="0" width="1" height="241" fill="#393b40"/><rect x="906.5" y="0" width="0.6" height="241" fill="#2e3034"/><rect x="922.4" y="0" width="0.6" height="241" fill="#2e3034"/><rect x="938.3" y="0" width="0.6" height="241" fill="#2e3034"/><rect x="954.2" y="0" width="1" height="241" fill="#393b40"/><rect x="970.1" y="0" width="0.6" height="241" fill="#2e3034"/><rect x="986.0" y="0" width="0.6" height="241" fill="#2e3034"/><rect x="1001.9" y="0" width="0.6" height="241" fill="#2e3034"/><rect x="1017.8" y="0" width="1" height="241" fill="#4a4d52"/><rect x="1033.7" y="0" width="0.6" height="241" fill="#2e3034"/><rect x="1049.6" y="0" width="0.6" height="241" fill="#2e3034"/><rect x="0.6" y="138.3" width="11.9" height="5.03" fill="#d9625f" stroke="rgba(0,0,0,0.25)" stroke-width="0.5"/><rect x="12.0" y="132.7" width="12.0" height="5.03" fill="#e58a8f" stroke="rgba(0,0,0,0.25)" stroke-width="0.5"/><rect x="17.0" y="127.0" width="16.0" height="5.03" fill="#e6c96a" stroke="rgba(0,0,0,0.25)" stroke-width="0.5"/><rect x="29.0" y="121.4" width="15.0" height="5.03" fill="#e8e28a" stroke="rgba(0,0,0,0.25)" stroke-width="0.5"/><rect x="44.0" y="127.0" width="13.0" height="5.03" fill="#e6c96a" stroke="rgba(0,0,0,0.25)" stroke-width="0.5"/><rect x="55.0" y="132.7" width="12.0" height="5.03" fill="#e58a8f" stroke="rgba(0,0,0,0.25)" stroke-width="0.5"/><rect x="65.0" y="138.3" width="35.0" height="5.03" fill="#d9625f" stroke="rgba(0,0,0,0.25)" stroke-width="0.5"/><rect x="129.0" y="138.3" width="12.0" height="5.03" fill="#d9625f" stroke="rgba(0,0,0,0.25)" stroke-width="0.5"/><rect x="134.0" y="132.7" width="12.0" height="5.03" fill="#e58a8f" stroke="rgba(0,0,0,0.25)" stroke-width="0.5"/><rect x="146.0" y="127.0" width="11.0" height="5.03" fill="#e6c96a" stroke="rgba(0,0,0,0.25)" stroke-width="0.5"/><rect x="157.0" y="121.4" width="10.0" height="5.03" fill="#e8e28a" stroke="rgba(0,0,0,0.25)" stroke-width="0.5"/><rect x="167.0" y="127.0" width="6.0" height="5.03" fill="#e6c96a" stroke="rgba(0,0,0,0.25)" stroke-width="0.5"/><rect x="174.0" y="132.7" width="11.0" height="5.03" fill="#e58a8f" stroke="rgba(0,0,0,0.25)" stroke-width="0.5"/><rect x="192.0" y="138.3" width="38.0" height="5.03" fill="#d9625f" stroke="rgba(0,0,0,0.25)" stroke-width="0.5"/><rect x="254.0" y="138.3" width="9.0" height="5.03" fill="#d9625f" stroke="rgba(0,0,0,0.25)" stroke-width="0.5"/><rect x="260.0" y="132.7" width="14.0" height="5.03" fill="#e58a8f" stroke="rgba(0,0,0,0.25)" stroke-width="0.5"/><rect x="272.0" y="127.0" width="15.0" height="5.03" fill="#e6c96a" stroke="rgba(0,0,0,0.25)" stroke-width="0.5"/><rect x="285.0" y="121.4" width="13.0" height="5.03" fill="#e8e28a" stroke="rgba(0,0,0,0.25)" stroke-width="0.5"/><rect x="294.0" y="127.0" width="10.0" height="5.03" fill="#e6c96a" stroke="rgba(0,0,0,0.25)" stroke-width="0.5"/><rect x="308.0" y="132.7" width="7.0" height="5.03" fill="#e58a8f" stroke="rgba(0,0,0,0.25)" stroke-width="0.5"/><rect x="315.0" y="138.3" width="43.0" height="5.03" fill="#d9625f" stroke="rgba(0,0,0,0.25)" stroke-width="0.5"/><rect x="381.0" y="138.3" width="11.0" height="5.03" fill="#a85048" stroke="rgba(0,0,0,0.25)" stroke-width="0.5"/><rect x="392.0" y="127.0" width="11.0" height="5.03" fill="#c8a860" stroke="rgba(0,0,0,0.25)" stroke-width="0.5"/><rect x="403.0" y="121.4" width="11.0" height="5.03" fill="#b8c078" stroke="rgba(0,0,0,0.25)" stroke-width="0.5"/><rect x="413.0" y="110.2" width="11.0" height="5.03" fill="#d9a050" stroke="rgba(0,0,0,0.25)" stroke-width="0.5"/><rect x="424.0" y="104.5" width="11.0" height="5.03" fill="#e0a090" stroke="rgba(0,0,0,0.25)" stroke-width="0.5"/><rect x="444.0" y="98.9" width="11.0" height="5.03" fill="#6aa6d9" stroke="rgba(0,0,0,0.25)" stroke-width="0.5"/><rect x="449.0" y="93.3" width="11.0" height="5.03" fill="#8fd0d0" stroke="rgba(0,0,0,0.25)" stroke-width="0.5"/><rect x="460.0" y="98.9" width="11.0" height="5.03" fill="#6aa6d9" stroke="rgba(0,0,0,0.25)" stroke-width="0.5"/><rect x="471.0" y="104.5" width="11.0" height="5.03" fill="#e0a090" stroke="rgba(0,0,0,0.25)" stroke-width="0.5"/><rect x="482.0" y="110.2" width="11.0" height="5.03" fill="#d9a050" stroke="rgba(0,0,0,0.25)" stroke-width="0.5"/><rect x="487.0" y="121.4" width="11.0" height="5.03" fill="#b8c078" stroke="rgba(0,0,0,0.25)" stroke-width="0.5"/><rect x="513.0" y="121.4" width="11.0" height="5.03" fill="#e8e88a" stroke="rgba(0,0,0,0.25)" stroke-width="0.5"/><rect x="522.0" y="115.8" width="11.0" height="5.03" fill="#5cd05c" stroke="rgba(0,0,0,0.25)" stroke-width="0.5"/><rect x="532.0" y="110.2" width="11.0" height="5.03" fill="#e0a050" stroke="rgba(0,0,0,0.25)" stroke-width="0.5"/><rect x="542.0" y="104.5" width="13.0" height="5.03" fill="#e8b0a0" stroke="rgba(0,0,0,0.25)" stroke-width="0.5"/><rect x="553.0" y="110.2" width="12.0" height="5.03" fill="#e0a050" stroke="rgba(0,0,0,0.25)" stroke-width="0.5"/><rect x="563.0" y="115.8" width="15.0" height="5.03" fill="#5cd05c" stroke="rgba(0,0,0,0.25)" stroke-width="0.5"/><rect x="577.0" y="121.4" width="35.0" height="5.03" fill="#e8e88a" stroke="rgba(0,0,0,0.25)" stroke-width="0.5"/><rect x="640.0" y="121.4" width="11.0" height="5.03" fill="#e8e88a" stroke="rgba(0,0,0,0.25)" stroke-width="0.5"/><rect x="646.0" y="115.8" width="12.0" height="5.03" fill="#5cd05c" stroke="rgba(0,0,0,0.25)" stroke-width="0.5"/><rect x="656.0" y="110.2" width="14.0" height="5.03" fill="#e0a050" stroke="rgba(0,0,0,0.25)" stroke-width="0.5"/><rect x="670.0" y="104.5" width="12.0" height="5.03" fill="#e8b0a0" stroke="rgba(0,0,0,0.25)" stroke-width="0.5"/><rect x="680.0" y="110.2" width="9.0" height="5.03" fill="#e0a050" stroke="rgba(0,0,0,0.25)" stroke-width="0.5"/><rect x="688.0" y="115.8" width="14.0" height="5.03" fill="#5cd05c" stroke="rgba(0,0,0,0.25)" stroke-width="0.5"/><rect x="702.0" y="121.4" width="40.0" height="5.03" fill="#e8e88a" stroke="rgba(0,0,0,0.25)" stroke-width="0.5"/><rect x="765.0" y="121.4" width="10.0" height="5.03" fill="#e8e88a" stroke="rgba(0,0,0,0.25)" stroke-width="0.5"/><rect x="772.0" y="115.8" width="12.0" height="5.03" fill="#5cd05c" stroke="rgba(0,0,0,0.25)" stroke-width="0.5"/><rect x="784.0" y="110.2" width="15.0" height="5.03" fill="#e0a050" stroke="rgba(0,0,0,0.25)" stroke-width="0.5"/><rect x="797.0" y="104.5" width="12.0" height="5.03" fill="#e8b0a0" stroke="rgba(0,0,0,0.25)" stroke-width="0.5"/><rect x="809.0" y="110.2" width="6.0" height="5.03" fill="#e0a050" stroke="rgba(0,0,0,0.25)" stroke-width="0.5"/><rect x="815.0" y="115.8" width="12.0" height="5.03" fill="#5cd05c" stroke="rgba(0,0,0,0.25)" stroke-width="0.5"/><rect x="828.0" y="121.4" width="42.0" height="5.03" fill="#e8e88a" stroke="rgba(0,0,0,0.25)" stroke-width="0.5"/><rect x="892.0" y="121.4" width="12.0" height="5.03" fill="#a8a868" stroke="rgba(0,0,0,0.25)" stroke-width="0.5"/><rect x="903.0" y="110.2" width="11.0" height="5.03" fill="#d9a050" stroke="rgba(0,0,0,0.25)" stroke-width="0.5"/><rect x="914.0" y="104.5" width="11.0" height="5.03" fill="#e0a090" stroke="rgba(0,0,0,0.25)" stroke-width="0.5"/><rect x="925.0" y="93.3" width="11.0" height="5.03" fill="#8fd0d0" stroke="rgba(0,0,0,0.25)" stroke-width="0.5"/><rect x="936.0" y="87.7" width="11.0" height="5.03" fill="#c04a80" stroke="rgba(0,0,0,0.25)" stroke-width="0.5"/><rect x="947.0" y="82.0" width="10.0" height="5.03" fill="#c8a0d8" stroke="rgba(0,0,0,0.25)" stroke-width="0.5"/><rect x="957.0" y="76.4" width="10.0" height="5.03" fill="#f0c8d8" stroke="rgba(0,0,0,0.25)" stroke-width="0.5"/><rect x="967.0" y="82.0" width="11.0" height="5.03" fill="#c8a0d8" stroke="rgba(0,0,0,0.25)" stroke-width="0.5"/><rect x="978.0" y="87.7" width="10.0" height="5.03" fill="#c04a80" stroke="rgba(0,0,0,0.25)" stroke-width="0.5"/><rect x="989.0" y="93.3" width="10.0" height="5.03" fill="#8fd0d0" stroke="rgba(0,0,0,0.25)" stroke-width="0.5"/><rect x="999.0" y="104.5" width="11.0" height="5.03" fill="#e0a090" stroke="rgba(0,0,0,0.25)" stroke-width="0.5"/><rect x="1020.0" y="110.2" width="11.0" height="5.03" fill="#e0a050" stroke="rgba(0,0,0,0.25)" stroke-width="0.5"/><rect x="1027.0" y="104.5" width="11.0" height="5.03" fill="#e8b0a0" stroke="rgba(0,0,0,0.25)" stroke-width="0.5"/><rect x="1037.0" y="98.9" width="11.0" height="5.03" fill="#6aa6d9" stroke="rgba(0,0,0,0.25)" stroke-width="0.5"/><rect x="1049.0" y="93.3" width="3.0" height="5.03" fill="#8fd0d0" stroke="rgba(0,0,0,0.25)" stroke-width="0.5"/></svg>
<div class="a" style="left:1538px;top:664px;width:12px;height:241px;background:#1f2023;"></div>
<svg style="left:1541px;top:668px" width="6" height="5"><polygon points="0,5 3,0 6,5" fill="#6a6d72"/></svg>
<div class="a" style="left:1543px;top:730px;width:3px;height:70px;background:#5a5d62;border-radius:1.5px"></div>
<svg style="left:1541px;top:897px" width="6" height="5"><polygon points="0,0 3,5 6,0" fill="#6a6d72"/></svg>
<div class="a" style="left:680px;top:664px;width:1px;height:296px;background:rgba(210,214,220,0.7);"></div>
<div class="a" style="left:415px;top:905px;width:1135px;height:13px;background:#2b2d31;"></div>
<div class="t" style="left:461px;top:908px;font-size:8px;color:#c9ccd0;">...</div>
<div class="t" style="left:481px;top:908px;font-size:7.5px;color:#c4c7cc;">Velocity</div>
<div class="t" style="left:524px;top:908px;font-size:7.5px;color:#c4c7cc;">Note Controller</div>
<div class="a" style="left:582px;top:906.5px;width:60px;height:11.5px;background:#4a8fd1;"></div>
<div class="t" style="left:590px;top:908px;font-size:7.5px;color:#e6e7ea;">Key Switches</div>
<div class="t" style="left:651px;top:908px;font-size:7.5px;color:#c4c7cc;">Modulation</div>
<div class="t" style="left:705px;top:908px;font-size:7.5px;color:#c4c7cc;">Pitch Bend</div>
<div class="t" style="left:757px;top:908px;font-size:7.5px;color:#c4c7cc;">After Touch</div>
<div class="t" style="left:812px;top:908px;font-size:7.5px;color:#c4c7cc;">Program Change</div>
<div class="t" style="left:884px;top:908px;font-size:7.5px;color:#c4c7cc;">Reset All</div>
<div class="t" style="left:930px;top:908px;font-size:7.5px;color:#c4c7cc;">Sustain</div>
<div class="t" style="left:971px;top:908px;font-size:7.5px;color:#c4c7cc;">Effect Depth 1</div>
<div class="t" style="left:1035px;top:908px;font-size:7.5px;color:#c4c7cc;">Control 10</div>
<div class="t" style="left:1087px;top:908px;font-size:7.5px;color:#c4c7cc;">Master Gain</div>
<svg style="left:1541px;top:909px" width="6" height="6"><path d="M0.5 0.5 L5.5 5.5 M5.5 0.5 L0.5 5.5" stroke="#c0c3c8" stroke-width="1.2"/></svg>
<div class="a" style="left:415px;top:918px;width:62px;height:42px;background:#1c1d20;border:1px solid #34363a"></div>
<div class="a" style="left:488px;top:918px;width:1050px;height:42px;background:#232528;"></div>
<div class="a" style="left:488px;top:918px;width:1px;height:42px;background:#3a3c40;"></div>
<div class="a" style="left:488.6px;top:918px;width:1px;height:42px;background:#45484c;"></div>
<div class="a" style="left:504.49375000000003px;top:918px;width:1px;height:42px;background:#2a2c30;"></div>
<div class="a" style="left:520.3875px;top:918px;width:1px;height:42px;background:#2a2c30;"></div>
<div class="a" style="left:536.28125px;top:918px;width:1px;height:42px;background:#2a2c30;"></div>
<div class="a" style="left:552.1750000000001px;top:918px;width:1px;height:42px;background:#34363a;"></div>
<div class="a" style="left:568.06875px;top:918px;width:1px;height:42px;background:#2a2c30;"></div>
<div class="a" style="left:583.9625000000001px;top:918px;width:1px;height:42px;background:#2a2c30;"></div>
<div class="a" style="left:599.85625px;top:918px;width:1px;height:42px;background:#2a2c30;"></div>
<div class="a" style="left:615.75px;top:918px;width:1px;height:42px;background:#34363a;"></div>
<div class="a" style="left:631.6437500000001px;top:918px;width:1px;height:42px;background:#2a2c30;"></div>
<div class="a" style="left:647.5375px;top:918px;width:1px;height:42px;background:#2a2c30;"></div>
<div class="a" style="left:663.4312500000001px;top:918px;width:1px;height:42px;background:#2a2c30;"></div>
<div class="a" style="left:679.325px;top:918px;width:1px;height:42px;background:#34363a;"></div>
<div class="a" style="left:695.21875px;top:918px;width:1px;height:42px;background:#2a2c30;"></div>
<div class="a" style="left:711.1125000000001px;top:918px;width:1px;height:42px;background:#2a2c30;"></div>
<div class="a" style="left:727.00625px;top:918px;width:1px;height:42px;background:#2a2c30;"></div>
<div class="a" style="left:742.9000000000001px;top:918px;width:1px;height:42px;background:#45484c;"></div>
<div class="a" style="left:758.79375px;top:918px;width:1px;height:42px;background:#2a2c30;"></div>
<div class="a" style="left:774.6875000000001px;top:918px;width:1px;height:42px;background:#2a2c30;"></div>
<div class="a" style="left:790.5812500000001px;top:918px;width:1px;height:42px;background:#2a2c30;"></div>
<div class="a" style="left:806.4750000000001px;top:918px;width:1px;height:42px;background:#34363a;"></div>
<div class="a" style="left:822.3687500000001px;top:918px;width:1px;height:42px;background:#2a2c30;"></div>
<div class="a" style="left:838.2625px;top:918px;width:1px;height:42px;background:#2a2c30;"></div>
<div class="a" style="left:854.1562500000001px;top:918px;width:1px;height:42px;background:#2a2c30;"></div>
<div class="a" style="left:870.0500000000001px;top:918px;width:1px;height:42px;background:#34363a;"></div>
<div class="a" style="left:885.9437500000001px;top:918px;width:1px;height:42px;background:#2a2c30;"></div>
<div class="a" style="left:901.8375000000001px;top:918px;width:1px;height:42px;background:#2a2c30;"></div>
<div class="a" style="left:917.73125px;top:918px;width:1px;height:42px;background:#2a2c30;"></div>
<div class="a" style="left:933.6250000000001px;top:918px;width:1px;height:42px;background:#34363a;"></div>
<div class="a" style="left:949.5187500000001px;top:918px;width:1px;height:42px;background:#2a2c30;"></div>
<div class="a" style="left:965.4125000000001px;top:918px;width:1px;height:42px;background:#2a2c30;"></div>
<div class="a" style="left:981.3062500000001px;top:918px;width:1px;height:42px;background:#2a2c30;"></div>
<div class="a" style="left:997.2px;top:918px;width:1px;height:42px;background:#45484c;"></div>
<div class="a" style="left:1013.09375px;top:918px;width:1px;height:42px;background:#2a2c30;"></div>
<div class="a" style="left:1028.9875px;top:918px;width:1px;height:42px;background:#2a2c30;"></div>
<div class="a" style="left:1044.8812500000001px;top:918px;width:1px;height:42px;background:#2a2c30;"></div>
<div class="a" style="left:1060.775px;top:918px;width:1px;height:42px;background:#34363a;"></div>
<div class="a" style="left:1076.66875px;top:918px;width:1px;height:42px;background:#2a2c30;"></div>
<div class="a" style="left:1092.5625px;top:918px;width:1px;height:42px;background:#2a2c30;"></div>
<div class="a" style="left:1108.45625px;top:918px;width:1px;height:42px;background:#2a2c30;"></div>
<div class="a" style="left:1124.3500000000001px;top:918px;width:1px;height:42px;background:#34363a;"></div>
<div class="a" style="left:1140.24375px;top:918px;width:1px;height:42px;background:#2a2c30;"></div>
<div class="a" style="left:1156.1375px;top:918px;width:1px;height:42px;background:#2a2c30;"></div>
<div class="a" style="left:1172.03125px;top:918px;width:1px;height:42px;background:#2a2c30;"></div>
<div class="a" style="left:1187.9250000000002px;top:918px;width:1px;height:42px;background:#34363a;"></div>
<div class="a" style="left:1203.8187500000001px;top:918px;width:1px;height:42px;background:#2a2c30;"></div>
<div class="a" style="left:1219.7125px;top:918px;width:1px;height:42px;background:#2a2c30;"></div>
<div class="a" style="left:1235.60625px;top:918px;width:1px;height:42px;background:#2a2c30;"></div>
<div class="a" style="left:1251.5px;top:918px;width:1px;height:42px;background:#45484c;"></div>
<div class="a" style="left:1267.39375px;top:918px;width:1px;height:42px;background:#2a2c30;"></div>
<div class="a" style="left:1283.2875px;top:918px;width:1px;height:42px;background:#2a2c30;"></div>
<div class="a" style="left:1299.18125px;top:918px;width:1px;height:42px;background:#2a2c30;"></div>
<div class="a" style="left:1315.075px;top:918px;width:1px;height:42px;background:#34363a;"></div>
<div class="a" style="left:1330.96875px;top:918px;width:1px;height:42px;background:#2a2c30;"></div>
<div class="a" style="left:1346.8625px;top:918px;width:1px;height:42px;background:#2a2c30;"></div>
<div class="a" style="left:1362.75625px;top:918px;width:1px;height:42px;background:#2a2c30;"></div>
<div class="a" style="left:1378.65px;top:918px;width:1px;height:42px;background:#34363a;"></div>
<div class="a" style="left:1394.54375px;top:918px;width:1px;height:42px;background:#2a2c30;"></div>
<div class="a" style="left:1410.4375px;top:918px;width:1px;height:42px;background:#2a2c30;"></div>
<div class="a" style="left:1426.33125px;top:918px;width:1px;height:42px;background:#2a2c30;"></div>
<div class="a" style="left:1442.225px;top:918px;width:1px;height:42px;background:#34363a;"></div>
<div class="a" style="left:1458.11875px;top:918px;width:1px;height:42px;background:#2a2c30;"></div>
<div class="a" style="left:1474.0125px;top:918px;width:1px;height:42px;background:#2a2c30;"></div>
<div class="a" style="left:1489.90625px;top:918px;width:1px;height:42px;background:#2a2c30;"></div>
<div class="a" style="left:1505.8000000000002px;top:918px;width:1px;height:42px;background:#45484c;"></div>
<div class="a" style="left:1521.6937500000001px;top:918px;width:1px;height:42px;background:#2a2c30;"></div>
<div class="a" style="left:1537.5875px;top:918px;width:1px;height:42px;background:#2a2c30;"></div>
<div class="a" style="left:505px;top:932px;width:115px;height:14px;background:#cc8590;border-left:1px solid rgba(0,0,0,0.25)"></div>
<div class="t" style="left:508px;top:935px;font-size:8.5px;color:#4a3a36;max-width:112px;overflow:hidden">Legato</div>
<div class="a" style="left:620px;top:932px;width:124px;height:14px;background:#e0c45a;border-left:1px solid rgba(0,0,0,0.25)"></div>
<div class="t" style="left:623px;top:935px;font-size:8.5px;color:#4a3a36;max-width:121px;overflow:hidden">Staccato</div>
<div class="a" style="left:745px;top:932px;width:59px;height:14px;background:#cc8590;border-left:1px solid rgba(0,0,0,0.25)"></div>
<div class="t" style="left:748px;top:935px;font-size:8.5px;color:#4a3a36;max-width:56px;overflow:hidden">Legato</div>
<div class="a" style="left:804px;top:932px;width:69px;height:14px;background:#e0a890;border-left:1px solid rgba(0,0,0,0.25)"></div>
<div class="t" style="left:807px;top:935px;font-size:8.5px;color:#4a3a36;max-width:66px;overflow:hidden">Trill WS</div>
<div class="a" style="left:873px;top:932px;width:123px;height:14px;background:#cc8590;border-left:1px solid rgba(0,0,0,0.25)"></div>
<div class="t" style="left:876px;top:935px;font-size:8.5px;color:#4a3a36;max-width:120px;overflow:hidden">Legato</div>
<div class="a" style="left:997px;top:932px;width:72px;height:14px;background:#e0c45a;border-left:1px solid rgba(0,0,0,0.25)"></div>
<div class="t" style="left:1000px;top:935px;font-size:8.5px;color:#4a3a36;max-width:69px;overflow:hidden">Staccato</div>
<div class="a" style="left:1070px;top:932px;width:62px;height:14px;background:#5cc05c;border-left:1px solid rgba(0,0,0,0.25)"></div>
<div class="t" style="left:1073px;top:935px;font-size:8.5px;color:#f4f4f4;max-width:59px;overflow:hidden">Fluttertongue</div>
<div class="a" style="left:1133px;top:932px;width:59px;height:14px;background:#cc8590;border-left:1px solid rgba(0,0,0,0.25)"></div>
<div class="t" style="left:1136px;top:935px;font-size:8.5px;color:#4a3a36;max-width:56px;overflow:hidden">Legato</div>
<div class="a" style="left:1193px;top:932px;width:64px;height:14px;background:#e0c45a;border-left:1px solid rgba(0,0,0,0.25)"></div>
<div class="t" style="left:1196px;top:935px;font-size:8.5px;color:#4a3a36;max-width:61px;overflow:hidden">Staccato</div>
<div class="a" style="left:1258px;top:932px;width:60px;height:14px;background:#cc8590;border-left:1px solid rgba(0,0,0,0.25)"></div>
<div class="t" style="left:1261px;top:935px;font-size:8.5px;color:#4a3a36;max-width:57px;overflow:hidden">Legato</div>
<div class="a" style="left:1319px;top:932px;width:71px;height:14px;background:#c8c890;border-left:1px solid rgba(0,0,0,0.25)"></div>
<div class="t" style="left:1322px;top:935px;font-size:8.5px;color:#4a3a36;max-width:68px;overflow:hidden">Staccato Repetit</div>
<div class="a" style="left:1391px;top:932px;width:124px;height:14px;background:#e0c45a;border-left:1px solid rgba(0,0,0,0.25)"></div>
<div class="t" style="left:1394px;top:935px;font-size:8.5px;color:#4a3a36;max-width:121px;overflow:hidden">Staccato</div>
<div class="a" style="left:1516px;top:932px;width:33px;height:14px;background:#ecc6cc;border-left:1px solid rgba(0,0,0,0.25)"></div>
<div class="t" style="left:1519px;top:935px;font-size:8.5px;color:#4a3a36;max-width:30px;overflow:hidden">Legato</div>
<div class="a" style="left:415px;top:960px;width:1135px;height:12px;background:#1f2023;"></div>
<svg style="left:417px;top:962px" width="60" height="8"><path d="M1 7 L3 3 L5 5 L9 1" stroke="#c0c3c8" fill="none" stroke-width="1.2"/><path d="M18 4 L24 4 M21 1 L21 7" stroke="#c0c3c8" stroke-width="1.2"/><path d="M32 4 L38 4" stroke="#c0c3c8" stroke-width="1.2"/><polygon points="51,1 51,7 47,4" fill="#6a6d72"/></svg>
<div class="a" style="left:536px;top:964px;width:20px;height:3px;background:#5a5d62;border-radius:1.5px"></div>
<svg style="left:1439px;top:962px" width="6" height="7"><polygon points="0,0 0,6 5,3" fill="#6a6d72"/></svg>
<svg style="left:1451px;top:961px" width="72" height="10"><polygon points="0,8 4,3 8,8" fill="#6a6d72"/><line x1="10" y1="6" x2="50" y2="6" stroke="#6a6d72"/><rect x="22" y="3" width="2" height="6" fill="#6a6d72"/><polygon points="58,8 63,1 68,8" fill="#6a6d72"/></svg>
<svg style="left:1528px;top:962px" width="8" height="8"><path d="M4 1 L8 1 M4 3 L8 3 M0 6 L2 6" stroke="#5a5d62"/></svg>
<div class="a" style="left:30px;top:972px;width:1800px;height:3px;background:#121314;"></div>
<div class="a" style="left:30px;top:975px;width:1800px;height:31px;background:#5e6269;"></div>
<div class="a" style="left:30px;top:975px;width:1800px;height:1px;background:#6c7076;"></div>
<div class="a" style="left:30px;top:1006px;width:1800px;height:3px;background:#3d3f43;"></div>
<div class="a" style="left:32px;top:1009px;width:1796px;height:1px;background:#85888d;"></div>
<svg style="left:0;top:0" width="1860" height="1042"><polygon points="355,975 1385,975 1376,1006 361,1006" fill="#141517"/></svg>
<svg style="left:376px;top:980px" width="22" height="12"><polygon points="0,3 3,6 0,9" fill="#777"/><circle cx="10" cy="6" r="5" fill="none" stroke="#888" stroke-width="1"/><g fill="#888"><circle cx="7.5" cy="5" r="0.8"/><circle cx="10" cy="3.5" r="0.8"/><circle cx="12.5" cy="5" r="0.8"/><circle cx="8.5" cy="7.8" r="0.8"/><circle cx="11.5" cy="7.8" r="0.8"/></g><polygon points="17,3 21,6 17,9" fill="#e8823a"/></svg>
<div class="t" style="left:378px;top:994px;font-size:7px;color:#9ea2a8;">MIDI</div>
<div class="a" style="left:403px;top:981px;width:45px;height:4px;background:#3a3d42;"></div>
<div class="a" style="left:403px;top:981px;width:12px;height:4px;background:#5eaee8;"></div>
<div class="a" style="left:403px;top:987px;width:45px;height:3px;background:#3a3d42;"></div>
<div class="t" style="left:404px;top:994px;font-size:7px;color:#9ea2a8;">Performance</div>
<svg style="left:459px;top:981px" width="18" height="18"><circle cx="9" cy="9" r="7" fill="none" stroke="#b8bbc0" stroke-width="1.4" stroke-dasharray="1.5 2.2"/></svg>
<div class="t" style="left:486px;top:981px;font-size:8.5px;color:#e8e9ec;">44.1 kHz</div>
<div class="t" style="left:486px;top:993px;font-size:7.5px;color:#e8e9ec;">0.0 ms</div>
<div class="t" style="left:534px;top:981px;font-size:8.5px;color:#e8e9ec;">1:04 days</div>
<div class="t" style="left:534px;top:993px;font-size:7px;color:#9ea2a8;">Record Max</div>
<div class="t" style="left:595px;top:981px;font-size:8.5px;color:#e8e9ec;">00:00:35.567</div>
<div class="t" style="left:605px;top:993px;font-size:7px;color:#9ea2a8;">Seconds</div>
<div class="t" style="left:670px;top:979px;font-size:13px;color:#f2f3f5;font-weight:bold">00013.03.04.92</div>
<div class="t" style="left:706px;top:993px;font-size:7px;color:#9ea2a8;">Bars</div>
<svg style="left:776px;top:982px" width="200" height="18"><polygon points="3,8 9,4 9,12" fill="#d8dadd"/><polygon points="21,8 27,4 27,12" fill="#d8dadd"/><polygon points="27,8 33,4 33,12" fill="#d8dadd"/><polygon points="42,4 48,8 42,12" fill="#d8dadd"/><polygon points="48,4 54,8 48,12" fill="#d8dadd"/><polygon points="60,4 66,8 60,12" fill="#d8dadd"/><rect x="77" y="4" width="1.5" height="8" fill="#d8dadd"/><polygon points="79,8 86,4 86,12" fill="#d8dadd"/><rect x="100" y="1" width="14" height="14" fill="#c8c9cc"/><polygon points="127,1 140,8 127,15" fill="#5ccc3c"/><circle cx="157" cy="8" r="7" fill="#d8d9dc"/><path d="M182 13 Q174 13 174 8 Q174 3 182 3 L190 3 Q196 3 196 8 Q196 13 190 13 L187 13 M184 10 L187 13 L184 16" stroke="#5eaee8" stroke-width="1.8" fill="none"/></svg>
<div class="t" style="left:987px;top:981px;font-size:8px;color:#5eaee8;">L</div>
<div class="t" style="left:987px;top:993px;font-size:8px;color:#5eaee8;">R</div>
<div class="t" style="left:999px;top:980px;font-size:9px;color:#e8e9ec;">00012.04.04.78</div>
<div class="t" style="left:999px;top:992px;font-size:9px;color:#e8e9ec;">00151.01.01.00</div>
<div class="t" style="left:1081px;top:981px;font-size:9px;color:#e8e9ec;">Off</div>
<div class="t" style="left:1079px;top:994px;font-size:7px;color:#9ea2a8;">Sync</div>
<svg style="left:1105px;top:980px" width="48" height="20"><path d="M1 4 L5 4 L7 6 L12 6" stroke="#9ea2a8" fill="none"/><path d="M20 1 L20 8 M22 4.5 L30 4.5 M22 2 L22 7" stroke="#9ea2a8"/><circle cx="6" cy="15" r="2.8" fill="none" stroke="#9ea2a8" stroke-width="1.3" stroke-dasharray="1.2 0.8"/><path d="M20 12 L20 18 M29 12 L29 18 M20 15 L29 15" stroke="#9ea2a8"/><circle cx="44" cy="5" r="3.5" fill="#9ea2a8"/></svg>
<svg style="left:1157px;top:980px" width="30" height="12"><path d="M2 2 Q4 0 6 2 L10 8 L9 9 L5 5 Q2 5 2 2" fill="#9ea2a8"/><polygon points="18,10 23,1 28,10" fill="#9ea2a8"/></svg>
<div class="t" style="left:1145px;top:994px;font-size:7px;color:#9ea2a8;">Metronome</div>
<div class="t" style="left:1197px;top:981px;font-size:9px;color:#e8e9ec;">4 / 4</div>
<div class="t" style="left:1197px;top:994px;font-size:7px;color:#9ea2a8;">Timing</div>
<div class="t" style="left:1232px;top:981px;font-size:9px;color:#e8e9ec;">Cm</div>
<div class="t" style="left:1234px;top:994px;font-size:7px;color:#9ea2a8;">Key</div>
<div class="t" style="left:1261px;top:981px;font-size:9px;color:#e8e9ec;">86.00</div>
<div class="t" style="left:1262px;top:994px;font-size:7px;color:#9ea2a8;">Tempo</div>
<div class="a" style="left:1298px;top:981px;width:47px;height:6px;background:#2a2d31;"></div>
<div class="a" style="left:1298px;top:981px;width:33px;height:3px;background:#5eaee8;"></div>
<div class="a" style="left:1298px;top:984px;width:26px;height:3px;background:#5eaee8;"></div>
<div class="a" style="left:1298px;top:994px;width:47px;height:6px;background:#2a2d31;"></div>
<svg style="left:1298px;top:994px" width="32" height="6"><rect x="0" y="0" width="1.4" height="6" fill="#4a8fc8"/><rect x="2" y="0" width="1.4" height="6" fill="#4a8fc8"/><rect x="4" y="0" width="1.4" height="6" fill="#4a8fc8"/><rect x="6" y="0" width="1.4" height="6" fill="#4a8fc8"/><rect x="8" y="0" width="1.4" height="6" fill="#4a8fc8"/><rect x="10" y="0" width="1.4" height="6" fill="#4a8fc8"/><rect x="12" y="0" width="1.4" height="6" fill="#4a8fc8"/><rect x="14" y="0" width="1.4" height="6" fill="#4a8fc8"/><rect x="16" y="0" width="1.4" height="6" fill="#4a8fc8"/><rect x="18" y="0" width="1.4" height="6" fill="#4a8fc8"/><rect x="20" y="0" width="1.4" height="6" fill="#4a8fc8"/><rect x="22" y="0" width="1.4" height="6" fill="#4a8fc8"/><rect x="24" y="0" width="1.4" height="6" fill="#4a8fc8"/><rect x="26" y="0" width="1.4" height="6" fill="#4a8fc8"/><rect x="28" y="0" width="1.4" height="6" fill="#4a8fc8"/><rect x="30" y="0" width="1.4" height="6" fill="#4a8fc8"/></svg>
<svg style="left:1349px;top:993px" width="14" height="8"><circle cx="4" cy="4" r="3.5" fill="#5eaee8"/><circle cx="10" cy="4" r="3" fill="none" stroke="#5eaee8" stroke-width="1.3"/></svg>
<div class="a" style="left:1706px;top:975px;width:39px;height:31px;background:#4b90d2;"></div>
<div class="a" style="left:1745px;top:975px;width:40px;height:31px;background:#5e6269;"></div>
<div class="a" style="left:1785px;top:975px;width:45px;height:31px;background:#4b90d2;"></div>
<div class="a" style="left:1705px;top:975px;width:1px;height:31px;background:#4e5157;"></div>
<div class="a" style="left:1745px;top:975px;width:1px;height:31px;background:#55585e;"></div>
<div class="a" style="left:1784px;top:975px;width:1px;height:31px;background:#55585e;"></div>
<div class="t" style="left:1706px;top:987px;font-size:9px;color:#eef0f2;width:39px;text-align:center;">Edit</div>
<div class="t" style="left:1745px;top:987px;font-size:9px;color:#eef0f2;width:40px;text-align:center;">Mix</div>
<div class="t" style="left:1785px;top:987px;font-size:9px;color:#eef0f2;width:45px;text-align:center;">Browse</div></body></html>
